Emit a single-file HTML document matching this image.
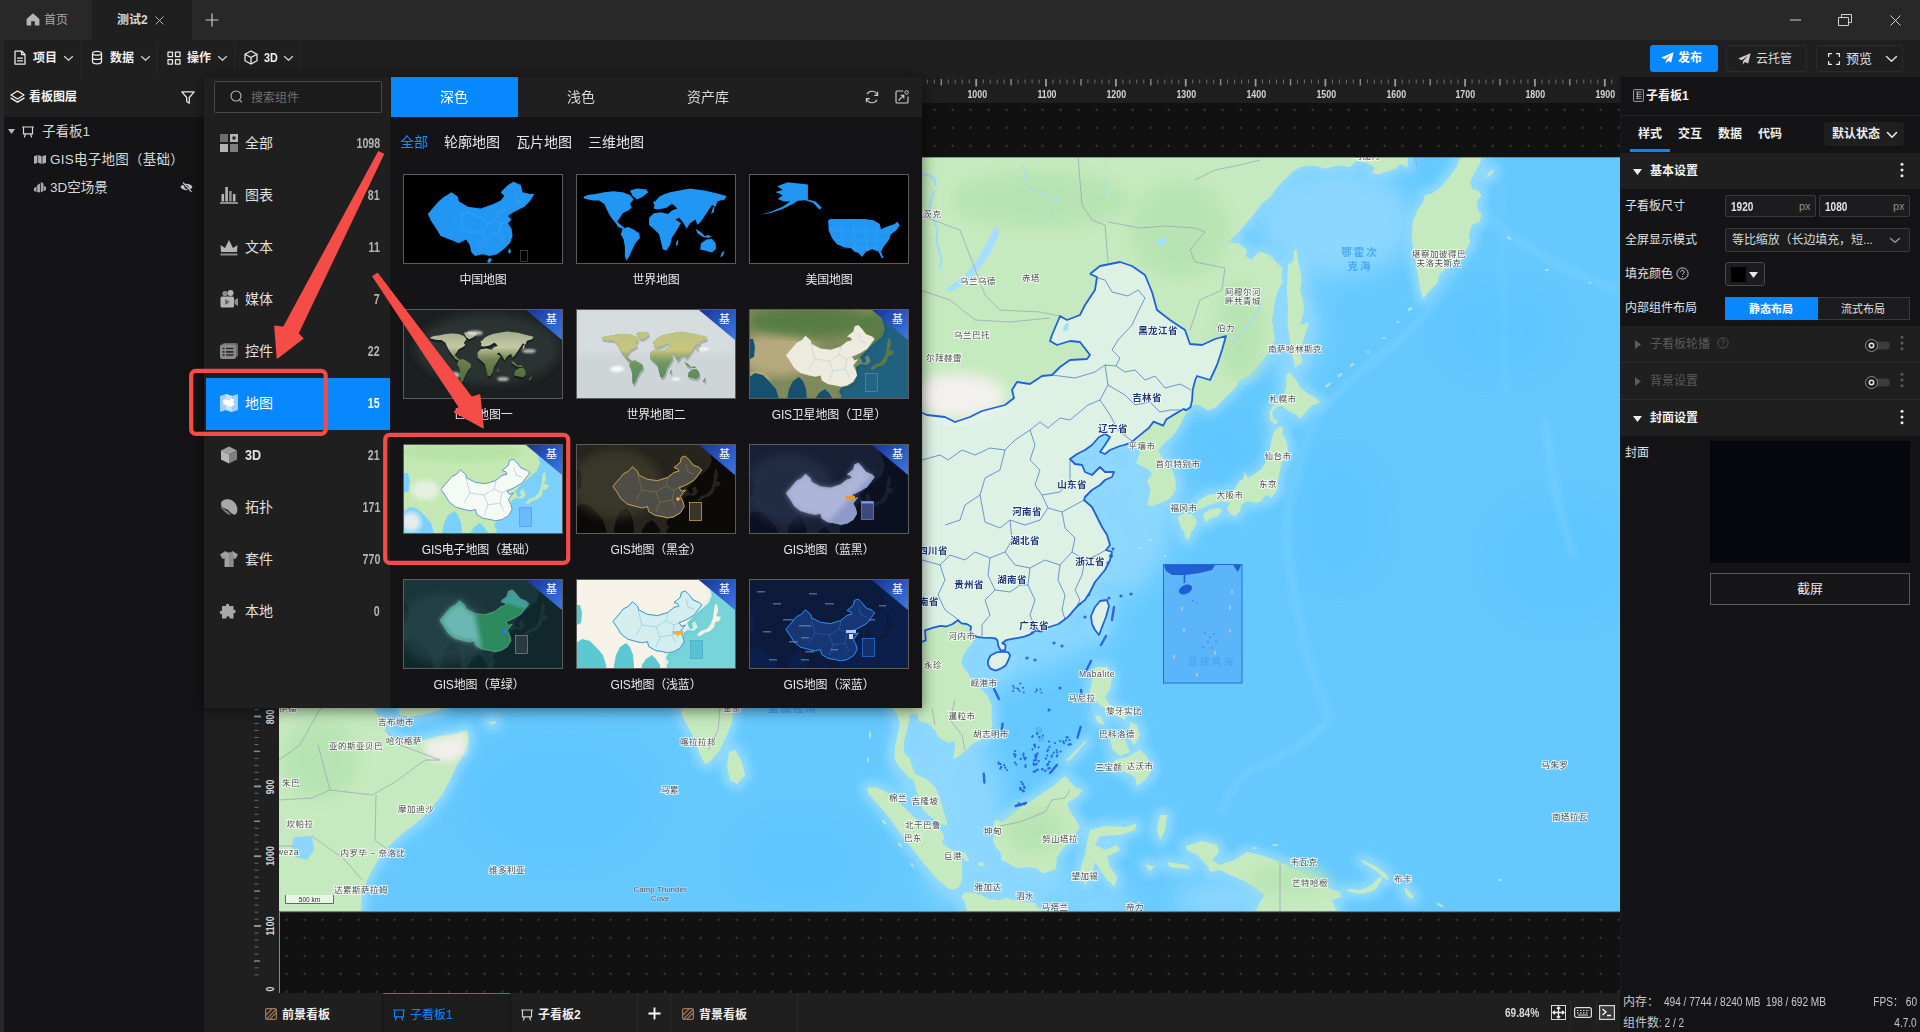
<!DOCTYPE html><html lang="zh-CN"><head><meta charset="utf-8"><title>看板编辑器</title><style>
*{box-sizing:border-box;margin:0;padding:0}
html,body{width:1920px;height:1032px;overflow:hidden;background:#141416}
body{position:relative;font-family:"Liberation Sans","Noto Sans CJK SC",sans-serif;font-size:12px;color:#e6e6e6;line-height:1}
.a{position:absolute}
.t{position:absolute;white-space:nowrap;line-height:16px;height:16px}
.b{font-weight:bold}
.n{display:inline-block;transform:scaleX(.84);transform-origin:left center}
.nr{display:inline-block;transform:scaleX(.84);transform-origin:right center}
svg{position:absolute;overflow:visible}
.ic{fill:none;stroke:#eaeaea;stroke-width:1.25;stroke-linecap:round;stroke-linejoin:round}
</style></head><body><div class="a" style="left:204px;top:77px;width:1416px;height:916px;background:#111111;background-image:radial-gradient(circle,#3a3a3a 0.8px,transparent 1.1px);background-size:18px 18px;background-position:1.6px 5.8px;"></div><div class="a" style="left:204px;top:77px;width:1416px;height:26px;background:#1f1f1f;"></div><div class="a" style="left:204px;top:103px;width:75px;height:890px;background:#1f1f1f;"></div><div class="a" style="left:279px;top:103px;width:1px;height:890px;background:#8a8a8a;"></div><svg style="left:0;top:77px" width="1920" height="26" viewBox="0 0 1920 26"><rect x="926.8" y="2.5" width="1" height="4" fill="#6e6e6e"/><rect x="933.8" y="2.5" width="1" height="4" fill="#6e6e6e"/><rect x="940.6" y="2" width="1.4" height="6.5" fill="#8a8a8a"/><rect x="947.8" y="2.5" width="1" height="4" fill="#6e6e6e"/><rect x="954.7" y="2.5" width="1" height="4" fill="#6e6e6e"/><rect x="961.7" y="2.5" width="1" height="4" fill="#6e6e6e"/><rect x="968.7" y="2.5" width="1" height="4" fill="#6e6e6e"/><rect x="975.3" y="2" width="1.8" height="7.5" fill="#9a9a9a"/><rect x="982.7" y="2.5" width="1" height="4" fill="#6e6e6e"/><rect x="989.7" y="2.5" width="1" height="4" fill="#6e6e6e"/><rect x="996.7" y="2.5" width="1" height="4" fill="#6e6e6e"/><rect x="1003.6" y="2.5" width="1" height="4" fill="#6e6e6e"/><rect x="1010.4" y="2" width="1.4" height="6.5" fill="#8a8a8a"/><rect x="1017.6" y="2.5" width="1" height="4" fill="#6e6e6e"/><rect x="1024.6" y="2.5" width="1" height="4" fill="#6e6e6e"/><rect x="1031.6" y="2.5" width="1" height="4" fill="#6e6e6e"/><rect x="1038.6" y="2.5" width="1" height="4" fill="#6e6e6e"/><rect x="1045.1" y="2" width="1.8" height="7.5" fill="#9a9a9a"/><rect x="1052.5" y="2.5" width="1" height="4" fill="#6e6e6e"/><rect x="1059.5" y="2.5" width="1" height="4" fill="#6e6e6e"/><rect x="1066.5" y="2.5" width="1" height="4" fill="#6e6e6e"/><rect x="1073.5" y="2.5" width="1" height="4" fill="#6e6e6e"/><rect x="1080.3" y="2" width="1.4" height="6.5" fill="#8a8a8a"/><rect x="1087.4" y="2.5" width="1" height="4" fill="#6e6e6e"/><rect x="1094.4" y="2.5" width="1" height="4" fill="#6e6e6e"/><rect x="1101.4" y="2.5" width="1" height="4" fill="#6e6e6e"/><rect x="1108.4" y="2.5" width="1" height="4" fill="#6e6e6e"/><rect x="1115.0" y="2" width="1.8" height="7.5" fill="#9a9a9a"/><rect x="1122.4" y="2.5" width="1" height="4" fill="#6e6e6e"/><rect x="1129.3" y="2.5" width="1" height="4" fill="#6e6e6e"/><rect x="1136.3" y="2.5" width="1" height="4" fill="#6e6e6e"/><rect x="1143.3" y="2.5" width="1" height="4" fill="#6e6e6e"/><rect x="1150.1" y="2" width="1.4" height="6.5" fill="#8a8a8a"/><rect x="1157.3" y="2.5" width="1" height="4" fill="#6e6e6e"/><rect x="1164.3" y="2.5" width="1" height="4" fill="#6e6e6e"/><rect x="1171.3" y="2.5" width="1" height="4" fill="#6e6e6e"/><rect x="1178.2" y="2.5" width="1" height="4" fill="#6e6e6e"/><rect x="1184.8" y="2" width="1.8" height="7.5" fill="#9a9a9a"/><rect x="1192.2" y="2.5" width="1" height="4" fill="#6e6e6e"/><rect x="1199.2" y="2.5" width="1" height="4" fill="#6e6e6e"/><rect x="1206.2" y="2.5" width="1" height="4" fill="#6e6e6e"/><rect x="1213.2" y="2.5" width="1" height="4" fill="#6e6e6e"/><rect x="1219.9" y="2" width="1.4" height="6.5" fill="#8a8a8a"/><rect x="1227.1" y="2.5" width="1" height="4" fill="#6e6e6e"/><rect x="1234.1" y="2.5" width="1" height="4" fill="#6e6e6e"/><rect x="1241.1" y="2.5" width="1" height="4" fill="#6e6e6e"/><rect x="1248.1" y="2.5" width="1" height="4" fill="#6e6e6e"/><rect x="1254.7" y="2" width="1.8" height="7.5" fill="#9a9a9a"/><rect x="1262.0" y="2.5" width="1" height="4" fill="#6e6e6e"/><rect x="1269.0" y="2.5" width="1" height="4" fill="#6e6e6e"/><rect x="1276.0" y="2.5" width="1" height="4" fill="#6e6e6e"/><rect x="1283.0" y="2.5" width="1" height="4" fill="#6e6e6e"/><rect x="1289.8" y="2" width="1.4" height="6.5" fill="#8a8a8a"/><rect x="1297.0" y="2.5" width="1" height="4" fill="#6e6e6e"/><rect x="1303.9" y="2.5" width="1" height="4" fill="#6e6e6e"/><rect x="1310.9" y="2.5" width="1" height="4" fill="#6e6e6e"/><rect x="1317.9" y="2.5" width="1" height="4" fill="#6e6e6e"/><rect x="1324.5" y="2" width="1.8" height="7.5" fill="#9a9a9a"/><rect x="1331.9" y="2.5" width="1" height="4" fill="#6e6e6e"/><rect x="1338.9" y="2.5" width="1" height="4" fill="#6e6e6e"/><rect x="1345.9" y="2.5" width="1" height="4" fill="#6e6e6e"/><rect x="1352.8" y="2.5" width="1" height="4" fill="#6e6e6e"/><rect x="1359.6" y="2" width="1.4" height="6.5" fill="#8a8a8a"/><rect x="1366.8" y="2.5" width="1" height="4" fill="#6e6e6e"/><rect x="1373.8" y="2.5" width="1" height="4" fill="#6e6e6e"/><rect x="1380.8" y="2.5" width="1" height="4" fill="#6e6e6e"/><rect x="1387.8" y="2.5" width="1" height="4" fill="#6e6e6e"/><rect x="1394.3" y="2" width="1.8" height="7.5" fill="#9a9a9a"/><rect x="1401.7" y="2.5" width="1" height="4" fill="#6e6e6e"/><rect x="1408.7" y="2.5" width="1" height="4" fill="#6e6e6e"/><rect x="1415.7" y="2.5" width="1" height="4" fill="#6e6e6e"/><rect x="1422.7" y="2.5" width="1" height="4" fill="#6e6e6e"/><rect x="1429.5" y="2" width="1.4" height="6.5" fill="#8a8a8a"/><rect x="1436.6" y="2.5" width="1" height="4" fill="#6e6e6e"/><rect x="1443.6" y="2.5" width="1" height="4" fill="#6e6e6e"/><rect x="1450.6" y="2.5" width="1" height="4" fill="#6e6e6e"/><rect x="1457.6" y="2.5" width="1" height="4" fill="#6e6e6e"/><rect x="1464.2" y="2" width="1.8" height="7.5" fill="#9a9a9a"/><rect x="1471.6" y="2.5" width="1" height="4" fill="#6e6e6e"/><rect x="1478.5" y="2.5" width="1" height="4" fill="#6e6e6e"/><rect x="1485.5" y="2.5" width="1" height="4" fill="#6e6e6e"/><rect x="1492.5" y="2.5" width="1" height="4" fill="#6e6e6e"/><rect x="1499.3" y="2" width="1.4" height="6.5" fill="#8a8a8a"/><rect x="1506.5" y="2.5" width="1" height="4" fill="#6e6e6e"/><rect x="1513.5" y="2.5" width="1" height="4" fill="#6e6e6e"/><rect x="1520.5" y="2.5" width="1" height="4" fill="#6e6e6e"/><rect x="1527.4" y="2.5" width="1" height="4" fill="#6e6e6e"/><rect x="1534.0" y="2" width="1.8" height="7.5" fill="#9a9a9a"/><rect x="1541.4" y="2.5" width="1" height="4" fill="#6e6e6e"/><rect x="1548.4" y="2.5" width="1" height="4" fill="#6e6e6e"/><rect x="1555.4" y="2.5" width="1" height="4" fill="#6e6e6e"/><rect x="1562.4" y="2.5" width="1" height="4" fill="#6e6e6e"/><rect x="1569.1" y="2" width="1.4" height="6.5" fill="#8a8a8a"/><rect x="1576.3" y="2.5" width="1" height="4" fill="#6e6e6e"/><rect x="1583.3" y="2.5" width="1" height="4" fill="#6e6e6e"/><rect x="1590.3" y="2.5" width="1" height="4" fill="#6e6e6e"/><rect x="1597.3" y="2.5" width="1" height="4" fill="#6e6e6e"/><rect x="1603.9" y="2" width="1.8" height="7.5" fill="#9a9a9a"/><rect x="1611.2" y="2.5" width="1" height="4" fill="#6e6e6e"/></svg><div class="t" style="left:956.8000000000001px;width:40px;text-align:center;top:83.8px;font-size:11px;color:#d4d4d4;line-height:20px;height:20px;font-weight:bold;"><span style="display:inline-block;transform:scaleX(.8)">1000</span></div><div class="t" style="left:1026.6399999999999px;width:40px;text-align:center;top:83.8px;font-size:11px;color:#d4d4d4;line-height:20px;height:20px;font-weight:bold;"><span style="display:inline-block;transform:scaleX(.8)">1100</span></div><div class="t" style="left:1096.48px;width:40px;text-align:center;top:83.8px;font-size:11px;color:#d4d4d4;line-height:20px;height:20px;font-weight:bold;"><span style="display:inline-block;transform:scaleX(.8)">1200</span></div><div class="t" style="left:1166.32px;width:40px;text-align:center;top:83.8px;font-size:11px;color:#d4d4d4;line-height:20px;height:20px;font-weight:bold;"><span style="display:inline-block;transform:scaleX(.8)">1300</span></div><div class="t" style="left:1236.1599999999999px;width:40px;text-align:center;top:83.8px;font-size:11px;color:#d4d4d4;line-height:20px;height:20px;font-weight:bold;"><span style="display:inline-block;transform:scaleX(.8)">1400</span></div><div class="t" style="left:1306.0px;width:40px;text-align:center;top:83.8px;font-size:11px;color:#d4d4d4;line-height:20px;height:20px;font-weight:bold;"><span style="display:inline-block;transform:scaleX(.8)">1500</span></div><div class="t" style="left:1375.84px;width:40px;text-align:center;top:83.8px;font-size:11px;color:#d4d4d4;line-height:20px;height:20px;font-weight:bold;"><span style="display:inline-block;transform:scaleX(.8)">1600</span></div><div class="t" style="left:1445.6799999999998px;width:40px;text-align:center;top:83.8px;font-size:11px;color:#d4d4d4;line-height:20px;height:20px;font-weight:bold;"><span style="display:inline-block;transform:scaleX(.8)">1700</span></div><div class="t" style="left:1515.52px;width:40px;text-align:center;top:83.8px;font-size:11px;color:#d4d4d4;line-height:20px;height:20px;font-weight:bold;"><span style="display:inline-block;transform:scaleX(.8)">1800</span></div><div class="t" style="left:1585.3600000000001px;width:40px;text-align:center;top:83.8px;font-size:11px;color:#d4d4d4;line-height:20px;height:20px;font-weight:bold;"><span style="display:inline-block;transform:scaleX(.8)">1900</span></div><svg style="left:0;top:0" width="300" height="1032" viewBox="0 0 300 1032"><rect x="254.5" y="709.0" width="4" height="1" fill="#6a6a6a"/><rect x="254" y="715.6" width="7" height="1.8" fill="#9a9a9a"/><rect x="254.5" y="723.0" width="4" height="1" fill="#6a6a6a"/><rect x="254.5" y="730.0" width="4" height="1" fill="#6a6a6a"/><rect x="254.5" y="737.0" width="4" height="1" fill="#6a6a6a"/><rect x="254.5" y="744.0" width="4" height="1" fill="#6a6a6a"/><rect x="254" y="750.7" width="6" height="1.4" fill="#8a8a8a"/><rect x="254.5" y="757.9" width="4" height="1" fill="#6a6a6a"/><rect x="254.5" y="764.9" width="4" height="1" fill="#6a6a6a"/><rect x="254.5" y="771.9" width="4" height="1" fill="#6a6a6a"/><rect x="254.5" y="778.9" width="4" height="1" fill="#6a6a6a"/><rect x="254" y="785.5" width="7" height="1.8" fill="#9a9a9a"/><rect x="254.5" y="792.8" width="4" height="1" fill="#6a6a6a"/><rect x="254.5" y="799.8" width="4" height="1" fill="#6a6a6a"/><rect x="254.5" y="806.8" width="4" height="1" fill="#6a6a6a"/><rect x="254.5" y="813.8" width="4" height="1" fill="#6a6a6a"/><rect x="254" y="820.6" width="6" height="1.4" fill="#8a8a8a"/><rect x="254.5" y="827.8" width="4" height="1" fill="#6a6a6a"/><rect x="254.5" y="834.7" width="4" height="1" fill="#6a6a6a"/><rect x="254.5" y="841.7" width="4" height="1" fill="#6a6a6a"/><rect x="254.5" y="848.7" width="4" height="1" fill="#6a6a6a"/><rect x="254" y="855.3" width="7" height="1.8" fill="#9a9a9a"/><rect x="254.5" y="862.7" width="4" height="1" fill="#6a6a6a"/><rect x="254.5" y="869.7" width="4" height="1" fill="#6a6a6a"/><rect x="254.5" y="876.7" width="4" height="1" fill="#6a6a6a"/><rect x="254.5" y="883.6" width="4" height="1" fill="#6a6a6a"/><rect x="254" y="890.4" width="6" height="1.4" fill="#8a8a8a"/><rect x="254.5" y="897.6" width="4" height="1" fill="#6a6a6a"/><rect x="254.5" y="904.6" width="4" height="1" fill="#6a6a6a"/><rect x="254.5" y="911.6" width="4" height="1" fill="#6a6a6a"/><rect x="254.5" y="918.6" width="4" height="1" fill="#6a6a6a"/><rect x="254" y="925.1" width="7" height="1.8" fill="#9a9a9a"/><rect x="254.5" y="932.5" width="4" height="1" fill="#6a6a6a"/><rect x="254.5" y="939.5" width="4" height="1" fill="#6a6a6a"/><rect x="254.5" y="946.5" width="4" height="1" fill="#6a6a6a"/><rect x="254.5" y="953.5" width="4" height="1" fill="#6a6a6a"/><rect x="254" y="960.3" width="6" height="1.4" fill="#8a8a8a"/><rect x="254.5" y="967.4" width="4" height="1" fill="#6a6a6a"/><rect x="254.5" y="974.4" width="4" height="1" fill="#6a6a6a"/></svg><div class="t b" style="left:249.5px;top:709.5px;width:40px;height:14px;line-height:14px;text-align:center;font-size:11px;color:#d4d4d4;transform:rotate(-90deg) scaleX(.8);">800</div><div class="t b" style="left:249.5px;top:779.5px;width:40px;height:14px;line-height:14px;text-align:center;font-size:11px;color:#d4d4d4;transform:rotate(-90deg) scaleX(.8);">900</div><div class="t b" style="left:249.5px;top:849.2px;width:40px;height:14px;line-height:14px;text-align:center;font-size:11px;color:#d4d4d4;transform:rotate(-90deg) scaleX(.8);">1000</div><div class="t b" style="left:249.5px;top:919px;width:40px;height:14px;line-height:14px;text-align:center;font-size:11px;color:#d4d4d4;transform:rotate(-90deg) scaleX(.8);">1100</div><div class="t b" style="left:249.5px;top:981.5px;width:40px;height:14px;line-height:14px;text-align:center;font-size:11px;color:#d4d4d4;transform:rotate(-90deg) scaleX(.8);">0</div><svg style="left:279px;top:157px" width="1341" height="755" viewBox="279 157 1341 755" font-family="Liberation Sans,Noto Sans CJK SC,sans-serif"><defs><filter id="bl8" x="-20%" y="-20%" width="140%" height="140%"><feGaussianBlur stdDeviation="7"/></filter><filter id="bl5" x="-20%" y="-20%" width="140%" height="140%"><feGaussianBlur stdDeviation="4.5"/></filter><filter id="bl3"><feGaussianBlur stdDeviation="3"/></filter><filter id="bl16" x="-30%" y="-30%" width="160%" height="160%"><feGaussianBlur stdDeviation="14"/></filter><clipPath id="mc"><rect x="279" y="157" width="1341" height="755"/></clipPath></defs><g clip-path="url(#mc)"><rect x="279" y="157" width="1341" height="755" fill="#65c9ff"/><path d="M880.0 150.0 L1407.8 150.0 L1407.8 167.2 L1400.0 164.0 L1395.3 168.8 L1387.5 171.1 L1379.7 174.2 L1371.9 173.4 L1375.0 167.2 L1365.6 162.5 L1356.3 160.9 L1350.0 167.2 L1340.6 165.6 L1332.8 166.4 L1325.0 168.8 L1318.8 166.4 L1309.4 165.6 L1300.0 167.2 L1292.2 171.9 L1284.4 179.7 L1278.1 185.9 L1270.3 196.9 L1262.5 203.1 L1256.3 210.9 L1250.0 218.8 L1242.2 228.1 L1234.4 235.9 L1228.1 242.2 L1239.1 243.8 L1246.9 250.0 L1245.3 256.3 L1251.6 259.4 L1259.4 251.6 L1268.8 254.7 L1278.1 264.1 L1282.8 268.8 L1281.3 275.0 L1282.8 282.8 L1278.1 290.6 L1275.0 300.0 L1273.4 311.0 L1272.0 320.0 L1275.0 340.0 L1265.0 357.0 L1250.0 375.0 L1239.9 380.0 L1235.1 388.0 L1228.7 394.4 L1222.3 400.8 L1215.9 407.2 L1207.9 410.4 L1199.9 405.6 L1195.2 404.0 L1190.4 407.2 L1187.2 412.0 L1184.0 416.8 L1179.2 426.4 L1172.8 436.0 L1163.2 444.0 L1158.4 450.4 L1161.6 456.8 L1168.0 463.1 L1172.8 471.1 L1175.2 479.1 L1176.0 488.7 L1172.8 495.1 L1168.0 499.9 L1160.0 503.1 L1152.0 506.3 L1147.2 504.7 L1148.8 498.3 L1150.4 488.7 L1147.2 480.7 L1152.0 474.3 L1148.8 469.5 L1142.4 466.3 L1136.0 463.1 L1137.6 458.3 L1140.8 452.0 L1136.0 447.2 L1124.8 444.8 L1120.0 446.0 L1110.0 450.0 L1105.0 454.0 L1100.0 452.0 L1105.0 445.0 L1110.0 437.0 L1105.0 434.0 L1099.0 437.0 L1092.0 445.0 L1085.0 450.0 L1077.0 454.0 L1070.0 459.0 L1075.0 464.0 L1082.0 465.0 L1085.0 472.0 L1092.0 475.0 L1100.0 467.0 L1105.0 472.0 L1114.0 472.0 L1112.0 477.0 L1105.0 480.0 L1100.0 485.0 L1092.0 490.0 L1085.0 497.0 L1084.0 500.0 L1092.0 507.0 L1097.0 517.0 L1102.0 527.0 L1107.0 535.0 L1110.0 545.0 L1106.0 550.0 L1112.0 552.0 L1110.0 560.0 L1105.0 570.0 L1095.0 582.0 L1090.0 592.0 L1085.0 600.0 L1080.0 603.9 L1074.9 608.9 L1068.6 616.4 L1063.6 620.2 L1058.5 624.0 L1051.0 626.5 L1045.9 627.8 L1040.9 631.6 L1035.9 630.3 L1030.8 634.1 L1024.5 636.6 L1018.2 637.9 L1010.7 639.1 L1005.6 640.4 L1003.1 642.9 L1005.6 645.4 L1005.0 650.5 L1000.6 650.5 L998.1 645.4 L997.5 640.4 L995.6 638.5 L990.5 637.9 L983.0 637.6 L977.9 637.2 L974.2 635.3 L972.9 642.9 L967.9 647.9 L964.1 654.2 L961.6 660.5 L962.8 666.8 L967.9 673.1 L970.4 678.2 L976.7 685.7 L983.0 690.8 L988.0 697.1 L991.8 705.9 L991.3 715.0 L992.5 725.0 L990.0 733.8 L982.5 738.8 L975.0 742.5 L970.0 746.3 L965.0 751.3 L958.8 756.3 L953.1 759.4 L953.8 753.8 L955.0 747.5 L955.0 741.3 L950.0 742.5 L945.0 741.3 L937.5 736.3 L935.0 730.0 L930.0 725.0 L925.0 722.5 L918.8 721.3 L917.5 715.0 L913.8 713.8 L910.0 715.0 L908.8 722.5 L906.3 732.5 L903.8 742.5 L903.8 752.5 L910.0 758.8 L912.5 767.5 L915.0 773.8 L922.5 777.5 L927.8 780.0 L935.5 787.7 L939.3 796.6 L941.9 805.6 L944.4 814.5 L947.0 822.2 L947.0 824.8 L943.2 824.8 L936.8 820.9 L929.1 815.8 L922.7 809.4 L920.1 801.7 L916.3 790.2 L913.7 780.0 L908.8 777.5 L902.5 770.0 L897.5 765.0 L894.4 757.5 L895.0 747.5 L897.5 735.0 L900.0 725.0 L897.5 715.0 L892.5 707.8 L888.0 690.0 L880.0 150.0 Z M1091.0 616.0 L1095.0 607.0 L1100.0 601.0 L1107.0 600.0 L1109.0 606.0 L1106.0 617.0 L1102.0 627.0 L1099.0 635.0 L1095.0 630.0 L1092.0 624.0 Z M988.0 660.5 L990.5 655.5 L996.8 652.3 L1003.1 651.7 L1008.2 652.3 L1010.1 655.5 L1008.2 660.5 L1005.6 665.6 L1000.6 668.7 L995.6 670.6 L990.5 668.7 L988.0 664.9 Z M1464.1 150.0 L1456.3 167.2 L1448.4 178.1 L1440.6 187.5 L1431.3 193.8 L1425.0 195.3 L1423.4 201.6 L1417.2 210.9 L1413.3 220.3 L1411.7 234.4 L1413.3 250.0 L1416.4 265.6 L1418.8 281.3 L1421.9 295.3 L1423.4 298.4 L1429.7 290.6 L1437.5 282.8 L1439.1 275.0 L1443.8 270.3 L1456.3 259.4 L1465.6 250.0 L1470.3 242.2 L1468.8 234.4 L1471.9 225.0 L1479.7 221.9 L1481.3 214.1 L1478.1 210.9 L1476.6 201.6 L1481.3 195.3 L1478.1 190.6 L1471.9 189.1 L1470.3 181.3 L1475.0 171.9 L1479.7 164.1 L1482.8 150.0 Z M1485.9 178.1 L1489.0 171.9 L1493.8 169.5 L1492.2 174.2 Z M1293.8 250.0 L1296.9 250.0 L1297.7 259.4 L1300.0 268.8 L1301.6 279.7 L1300.0 290.6 L1303.1 300.0 L1304.0 311.0 L1300.0 325.0 L1308.8 322.5 L1305.0 335.0 L1300.0 350.0 L1302.5 362.5 L1295.0 367.5 L1292.5 355.0 L1290.0 340.0 L1287.5 325.0 L1288.0 311.0 L1287.5 300.0 L1286.7 287.5 L1287.5 275.0 L1288.3 264.1 L1292.2 262.5 L1293.8 257.8 Z M1286.3 375.2 L1289.5 372.0 L1293.5 376.8 L1295.9 380.0 L1300.7 388.0 L1308.7 394.4 L1315.1 397.6 L1319.9 402.4 L1311.9 405.6 L1305.5 412.0 L1300.7 418.4 L1294.3 413.6 L1287.9 410.4 L1281.5 405.6 L1276.7 407.2 L1271.9 412.0 L1273.5 418.4 L1278.3 421.6 L1275.1 424.8 L1270.3 420.0 L1269.5 412.0 L1273.5 405.6 L1279.9 400.8 L1284.7 392.8 L1286.3 386.4 Z M1275.9 429.6 L1279.9 426.4 L1283.1 428.0 L1282.3 434.4 L1286.3 440.8 L1287.9 448.8 L1286.3 456.8 L1281.5 463.1 L1279.9 471.1 L1278.3 479.1 L1277.5 488.7 L1275.1 493.5 L1270.3 498.3 L1268.7 495.1 L1263.9 496.7 L1260.7 501.5 L1255.9 503.1 L1251.1 501.5 L1246.3 501.5 L1241.5 504.7 L1239.9 511.1 L1235.1 515.9 L1230.3 514.3 L1227.1 507.9 L1230.3 503.1 L1222.3 501.5 L1215.9 503.1 L1209.5 504.7 L1203.1 507.9 L1196.8 509.5 L1195.2 504.7 L1199.9 499.9 L1207.9 495.1 L1217.5 493.5 L1228.7 491.9 L1235.1 488.7 L1238.3 482.3 L1243.1 479.1 L1244.7 472.7 L1247.9 477.5 L1254.3 474.3 L1260.7 469.5 L1265.5 463.1 L1268.7 455.2 L1270.3 447.2 L1271.9 439.2 L1273.5 432.8 Z M1177.6 517.5 L1184.0 512.7 L1192.0 514.3 L1196.8 520.7 L1195.2 527.1 L1190.4 533.5 L1188.8 539.9 L1185.6 538.3 L1184.0 531.9 L1180.8 527.1 L1179.2 522.3 Z M1203.1 514.3 L1209.5 509.5 L1219.1 507.9 L1222.3 511.1 L1217.5 515.9 L1209.5 519.1 L1206.3 522.3 L1203.9 519.1 Z M1095.0 667.0 L1107.0 667.0 L1112.0 677.0 L1110.0 690.0 L1105.0 697.0 L1110.0 705.0 L1120.0 710.0 L1127.0 715.0 L1125.0 720.0 L1115.0 715.0 L1107.0 710.0 L1100.0 705.0 L1095.0 700.0 L1090.0 692.0 L1092.0 680.0 Z M1130.0 722.0 L1137.0 725.0 L1140.0 735.0 L1135.0 745.0 L1130.0 740.0 L1129.0 730.0 Z M1095.0 715.0 L1102.0 717.0 L1104.0 725.0 L1097.0 722.0 Z M1110.0 738.0 L1125.0 740.0 L1130.0 752.0 L1120.0 756.0 L1112.0 749.0 Z M1127.0 757.0 L1140.0 750.0 L1147.0 757.0 L1152.0 770.0 L1145.0 780.0 L1137.0 786.0 L1135.0 777.0 L1127.0 773.0 L1120.0 770.0 L1112.0 766.0 L1115.0 760.0 Z M1066.0 760.0 L1072.5 753.8 L1080.0 746.3 L1086.3 740.0 L1085.5 743.0 L1078.8 750.0 L1072.5 757.5 L1067.5 761.0 Z M867.0 787.7 L875.4 787.0 L885.6 791.5 L895.8 799.2 L904.8 808.1 L913.7 817.1 L921.4 822.2 L931.6 826.1 L941.9 831.2 L944.4 837.6 L941.9 842.7 L948.3 847.8 L954.7 851.6 L961.1 856.8 L962.3 863.2 L962.3 872.1 L961.7 881.1 L958.5 887.5 L952.1 890.0 L947.0 887.5 L936.8 878.5 L926.5 867.0 L917.6 855.5 L909.9 845.2 L900.9 833.7 L893.3 823.5 L885.6 813.3 L876.6 803.0 L869.0 794.1 Z M961.1 896.4 L964.9 892.6 L972.6 892.6 L981.5 895.1 L987.9 899.0 L998.2 900.3 L1007.1 897.7 L1013.5 900.3 L1023.7 901.5 L1034.0 902.8 L1039.1 907.9 L1052.0 920.0 L968.7 920.0 L964.9 902.8 Z M1065.0 776.3 L1070.0 781.3 L1075.0 787.5 L1082.5 790.0 L1077.5 796.6 L1067.2 803.0 L1069.8 810.7 L1074.9 818.4 L1080.0 827.3 L1072.4 837.6 L1064.7 846.5 L1057.0 856.8 L1055.7 869.5 L1042.9 873.4 L1036.5 868.3 L1026.3 867.0 L1017.4 868.3 L1008.4 863.2 L1002.0 860.6 L1000.7 852.9 L995.6 846.5 L993.0 840.1 L994.3 833.7 L993.0 824.8 L995.6 819.7 L1002.0 822.0 L1011.0 816.0 L1019.9 808.1 L1030.1 801.7 L1039.1 795.4 L1047.5 790.0 L1055.0 785.0 L1060.0 780.0 Z M1090.0 830.0 L1105.0 826.0 L1125.0 827.0 L1136.0 824.0 L1135.0 830.0 L1120.0 835.0 L1100.0 836.0 L1095.0 845.0 L1105.0 850.0 L1117.0 845.0 L1120.0 850.0 L1107.0 857.0 L1110.0 867.0 L1117.0 877.0 L1115.0 887.0 L1107.0 880.0 L1100.0 870.0 L1095.0 862.0 L1092.0 875.0 L1085.0 885.0 L1080.0 870.0 L1085.0 855.0 L1087.0 842.0 Z M1160.0 815.0 L1167.0 815.0 L1165.0 830.0 L1160.0 840.0 L1157.0 830.0 Z M1145.0 865.0 L1155.0 866.0 L1150.0 871.0 Z M1167.0 862.0 L1187.0 865.0 L1190.0 869.0 L1170.0 867.0 Z M1186.0 846.0 L1202.0 841.0 L1217.0 845.0 L1219.0 852.0 L1212.0 860.0 L1220.0 865.0 L1227.0 862.0 L1235.0 860.0 L1247.0 852.0 L1260.0 855.0 L1280.0 862.0 L1295.0 870.0 L1310.0 877.0 L1325.0 887.0 L1340.0 892.0 L1341.0 897.0 L1332.0 900.0 L1335.0 907.0 L1342.0 920.0 L1252.0 920.0 L1260.0 902.0 L1265.0 895.0 L1255.0 887.0 L1242.0 880.0 L1230.0 875.0 L1220.0 870.0 L1210.0 872.0 L1207.0 865.0 L1197.0 855.0 L1187.0 850.0 Z M1347.0 889.0 L1360.0 890.0 L1372.0 885.0 L1380.0 876.0 L1382.0 880.0 L1375.0 890.0 L1362.0 894.0 L1350.0 892.0 Z M1404.0 887.0 L1407.0 889.0 L1414.0 897.0 L1411.0 899.0 L1406.0 894.0 Z M1362.0 860.0 L1377.0 867.0 L1387.0 875.0 L1389.0 880.0 L1385.0 879.0 L1375.0 870.0 L1362.0 862.0 Z M270.0 700.0 L370.0 700.0 L377.0 715.0 L387.0 720.0 L385.0 730.0 L390.0 737.0 L400.0 739.0 L410.0 742.0 L425.0 740.0 L440.0 736.0 L455.0 734.0 L467.0 730.0 L469.0 740.0 L465.0 752.0 L457.0 765.0 L450.0 780.0 L442.0 795.0 L432.0 807.0 L420.0 820.0 L407.0 830.0 L395.0 840.0 L385.0 850.0 L375.0 865.0 L367.0 880.0 L362.0 895.0 L360.0 920.0 L270.0 920.0 Z M397.0 700.0 L400.0 715.0 L410.0 717.0 L425.0 714.0 L440.0 710.0 L447.0 700.0 Z M680.0 700.0 L735.0 700.0 L732.0 722.0 L727.0 735.0 L720.0 750.0 L710.0 762.0 L705.0 764.0 L700.0 755.0 L695.0 740.0 L687.0 725.0 L682.0 715.0 Z M729.0 752.0 L735.0 750.0 L742.0 762.0 L745.0 775.0 L737.0 784.0 L730.0 780.0 L727.0 767.0 Z M489.0 721.5 L496.0 721.5 L495.0 724.0 L490.0 724.5 Z M962.0 853.0 L965.0 852.0 L969.0 860.0 L967.0 862.0 L963.0 858.0 Z M978.0 862.0 L984.0 863.0 L983.0 866.0 L979.0 866.0 Z" fill="#92daff" stroke="#92daff" stroke-width="13" stroke-linejoin="round" filter="url(#bl5)" opacity=".95"/><g filter="url(#bl16)" fill="#8fd8ff" opacity=".95"><ellipse cx="1128" cy="515" rx="48" ry="85" transform="rotate(12 1128 515)"/><ellipse cx="1095" cy="470" rx="35" ry="35"/><ellipse cx="1335" cy="222" rx="80" ry="55"/><ellipse cx="1290" cy="330" rx="30" ry="50"/><ellipse cx="1050" cy="645" rx="75" ry="20" transform="rotate(-22 1050 645)"/><ellipse cx="985" cy="665" rx="30" ry="30"/><ellipse cx="950" cy="790" rx="50" ry="75" transform="rotate(-20 950 790)"/><ellipse cx="930" cy="738" rx="28" ry="25"/><ellipse cx="1000" cy="880" rx="75" ry="30"/><ellipse cx="1225" cy="900" rx="55" ry="22"/><ellipse cx="1100" cy="905" rx="40" ry="15"/></g><g filter="url(#bl16)" fill="#5cc4ff" opacity=".7"><ellipse cx="1228" cy="448" rx="26" ry="34" transform="rotate(-35 1228 448)"/><ellipse cx="1500" cy="330" rx="60" ry="40"/><ellipse cx="1340" cy="520" rx="40" ry="60"/><ellipse cx="1560" cy="560" rx="70" ry="60"/><ellipse cx="560" cy="800" rx="90" ry="60"/><ellipse cx="800" cy="860" rx="60" ry="40"/></g><g fill="none" stroke="#86d6ff" stroke-width="5" filter="url(#bl3)" opacity=".55"><path d="M1483 215 C1470 260 1440 300 1400 340 C1370 365 1335 390 1322 410 C1300 440 1300 470 1290 500 C1282 540 1290 580 1300 620 C1305 660 1320 690 1330 720"/><path d="M1490 220 C1530 250 1570 275 1620 290"/><path d="M1545 420 C1550 470 1560 520 1575 560"/><path d="M1330 720 C1310 740 1280 760 1250 770 C1230 790 1225 800 1222 815"/><path d="M1500 180 L1505 400" opacity=".5"/></g><path d="M880.0 150.0 L1407.8 150.0 L1407.8 167.2 L1400.0 164.0 L1395.3 168.8 L1387.5 171.1 L1379.7 174.2 L1371.9 173.4 L1375.0 167.2 L1365.6 162.5 L1356.3 160.9 L1350.0 167.2 L1340.6 165.6 L1332.8 166.4 L1325.0 168.8 L1318.8 166.4 L1309.4 165.6 L1300.0 167.2 L1292.2 171.9 L1284.4 179.7 L1278.1 185.9 L1270.3 196.9 L1262.5 203.1 L1256.3 210.9 L1250.0 218.8 L1242.2 228.1 L1234.4 235.9 L1228.1 242.2 L1239.1 243.8 L1246.9 250.0 L1245.3 256.3 L1251.6 259.4 L1259.4 251.6 L1268.8 254.7 L1278.1 264.1 L1282.8 268.8 L1281.3 275.0 L1282.8 282.8 L1278.1 290.6 L1275.0 300.0 L1273.4 311.0 L1272.0 320.0 L1275.0 340.0 L1265.0 357.0 L1250.0 375.0 L1239.9 380.0 L1235.1 388.0 L1228.7 394.4 L1222.3 400.8 L1215.9 407.2 L1207.9 410.4 L1199.9 405.6 L1195.2 404.0 L1190.4 407.2 L1187.2 412.0 L1184.0 416.8 L1179.2 426.4 L1172.8 436.0 L1163.2 444.0 L1158.4 450.4 L1161.6 456.8 L1168.0 463.1 L1172.8 471.1 L1175.2 479.1 L1176.0 488.7 L1172.8 495.1 L1168.0 499.9 L1160.0 503.1 L1152.0 506.3 L1147.2 504.7 L1148.8 498.3 L1150.4 488.7 L1147.2 480.7 L1152.0 474.3 L1148.8 469.5 L1142.4 466.3 L1136.0 463.1 L1137.6 458.3 L1140.8 452.0 L1136.0 447.2 L1124.8 444.8 L1120.0 446.0 L1110.0 450.0 L1105.0 454.0 L1100.0 452.0 L1105.0 445.0 L1110.0 437.0 L1105.0 434.0 L1099.0 437.0 L1092.0 445.0 L1085.0 450.0 L1077.0 454.0 L1070.0 459.0 L1075.0 464.0 L1082.0 465.0 L1085.0 472.0 L1092.0 475.0 L1100.0 467.0 L1105.0 472.0 L1114.0 472.0 L1112.0 477.0 L1105.0 480.0 L1100.0 485.0 L1092.0 490.0 L1085.0 497.0 L1084.0 500.0 L1092.0 507.0 L1097.0 517.0 L1102.0 527.0 L1107.0 535.0 L1110.0 545.0 L1106.0 550.0 L1112.0 552.0 L1110.0 560.0 L1105.0 570.0 L1095.0 582.0 L1090.0 592.0 L1085.0 600.0 L1080.0 603.9 L1074.9 608.9 L1068.6 616.4 L1063.6 620.2 L1058.5 624.0 L1051.0 626.5 L1045.9 627.8 L1040.9 631.6 L1035.9 630.3 L1030.8 634.1 L1024.5 636.6 L1018.2 637.9 L1010.7 639.1 L1005.6 640.4 L1003.1 642.9 L1005.6 645.4 L1005.0 650.5 L1000.6 650.5 L998.1 645.4 L997.5 640.4 L995.6 638.5 L990.5 637.9 L983.0 637.6 L977.9 637.2 L974.2 635.3 L972.9 642.9 L967.9 647.9 L964.1 654.2 L961.6 660.5 L962.8 666.8 L967.9 673.1 L970.4 678.2 L976.7 685.7 L983.0 690.8 L988.0 697.1 L991.8 705.9 L991.3 715.0 L992.5 725.0 L990.0 733.8 L982.5 738.8 L975.0 742.5 L970.0 746.3 L965.0 751.3 L958.8 756.3 L953.1 759.4 L953.8 753.8 L955.0 747.5 L955.0 741.3 L950.0 742.5 L945.0 741.3 L937.5 736.3 L935.0 730.0 L930.0 725.0 L925.0 722.5 L918.8 721.3 L917.5 715.0 L913.8 713.8 L910.0 715.0 L908.8 722.5 L906.3 732.5 L903.8 742.5 L903.8 752.5 L910.0 758.8 L912.5 767.5 L915.0 773.8 L922.5 777.5 L927.8 780.0 L935.5 787.7 L939.3 796.6 L941.9 805.6 L944.4 814.5 L947.0 822.2 L947.0 824.8 L943.2 824.8 L936.8 820.9 L929.1 815.8 L922.7 809.4 L920.1 801.7 L916.3 790.2 L913.7 780.0 L908.8 777.5 L902.5 770.0 L897.5 765.0 L894.4 757.5 L895.0 747.5 L897.5 735.0 L900.0 725.0 L897.5 715.0 L892.5 707.8 L888.0 690.0 L880.0 150.0 Z M1091.0 616.0 L1095.0 607.0 L1100.0 601.0 L1107.0 600.0 L1109.0 606.0 L1106.0 617.0 L1102.0 627.0 L1099.0 635.0 L1095.0 630.0 L1092.0 624.0 Z M988.0 660.5 L990.5 655.5 L996.8 652.3 L1003.1 651.7 L1008.2 652.3 L1010.1 655.5 L1008.2 660.5 L1005.6 665.6 L1000.6 668.7 L995.6 670.6 L990.5 668.7 L988.0 664.9 Z M1464.1 150.0 L1456.3 167.2 L1448.4 178.1 L1440.6 187.5 L1431.3 193.8 L1425.0 195.3 L1423.4 201.6 L1417.2 210.9 L1413.3 220.3 L1411.7 234.4 L1413.3 250.0 L1416.4 265.6 L1418.8 281.3 L1421.9 295.3 L1423.4 298.4 L1429.7 290.6 L1437.5 282.8 L1439.1 275.0 L1443.8 270.3 L1456.3 259.4 L1465.6 250.0 L1470.3 242.2 L1468.8 234.4 L1471.9 225.0 L1479.7 221.9 L1481.3 214.1 L1478.1 210.9 L1476.6 201.6 L1481.3 195.3 L1478.1 190.6 L1471.9 189.1 L1470.3 181.3 L1475.0 171.9 L1479.7 164.1 L1482.8 150.0 Z M1485.9 178.1 L1489.0 171.9 L1493.8 169.5 L1492.2 174.2 Z M1293.8 250.0 L1296.9 250.0 L1297.7 259.4 L1300.0 268.8 L1301.6 279.7 L1300.0 290.6 L1303.1 300.0 L1304.0 311.0 L1300.0 325.0 L1308.8 322.5 L1305.0 335.0 L1300.0 350.0 L1302.5 362.5 L1295.0 367.5 L1292.5 355.0 L1290.0 340.0 L1287.5 325.0 L1288.0 311.0 L1287.5 300.0 L1286.7 287.5 L1287.5 275.0 L1288.3 264.1 L1292.2 262.5 L1293.8 257.8 Z M1286.3 375.2 L1289.5 372.0 L1293.5 376.8 L1295.9 380.0 L1300.7 388.0 L1308.7 394.4 L1315.1 397.6 L1319.9 402.4 L1311.9 405.6 L1305.5 412.0 L1300.7 418.4 L1294.3 413.6 L1287.9 410.4 L1281.5 405.6 L1276.7 407.2 L1271.9 412.0 L1273.5 418.4 L1278.3 421.6 L1275.1 424.8 L1270.3 420.0 L1269.5 412.0 L1273.5 405.6 L1279.9 400.8 L1284.7 392.8 L1286.3 386.4 Z M1275.9 429.6 L1279.9 426.4 L1283.1 428.0 L1282.3 434.4 L1286.3 440.8 L1287.9 448.8 L1286.3 456.8 L1281.5 463.1 L1279.9 471.1 L1278.3 479.1 L1277.5 488.7 L1275.1 493.5 L1270.3 498.3 L1268.7 495.1 L1263.9 496.7 L1260.7 501.5 L1255.9 503.1 L1251.1 501.5 L1246.3 501.5 L1241.5 504.7 L1239.9 511.1 L1235.1 515.9 L1230.3 514.3 L1227.1 507.9 L1230.3 503.1 L1222.3 501.5 L1215.9 503.1 L1209.5 504.7 L1203.1 507.9 L1196.8 509.5 L1195.2 504.7 L1199.9 499.9 L1207.9 495.1 L1217.5 493.5 L1228.7 491.9 L1235.1 488.7 L1238.3 482.3 L1243.1 479.1 L1244.7 472.7 L1247.9 477.5 L1254.3 474.3 L1260.7 469.5 L1265.5 463.1 L1268.7 455.2 L1270.3 447.2 L1271.9 439.2 L1273.5 432.8 Z M1177.6 517.5 L1184.0 512.7 L1192.0 514.3 L1196.8 520.7 L1195.2 527.1 L1190.4 533.5 L1188.8 539.9 L1185.6 538.3 L1184.0 531.9 L1180.8 527.1 L1179.2 522.3 Z M1203.1 514.3 L1209.5 509.5 L1219.1 507.9 L1222.3 511.1 L1217.5 515.9 L1209.5 519.1 L1206.3 522.3 L1203.9 519.1 Z M1095.0 667.0 L1107.0 667.0 L1112.0 677.0 L1110.0 690.0 L1105.0 697.0 L1110.0 705.0 L1120.0 710.0 L1127.0 715.0 L1125.0 720.0 L1115.0 715.0 L1107.0 710.0 L1100.0 705.0 L1095.0 700.0 L1090.0 692.0 L1092.0 680.0 Z M1130.0 722.0 L1137.0 725.0 L1140.0 735.0 L1135.0 745.0 L1130.0 740.0 L1129.0 730.0 Z M1095.0 715.0 L1102.0 717.0 L1104.0 725.0 L1097.0 722.0 Z M1110.0 738.0 L1125.0 740.0 L1130.0 752.0 L1120.0 756.0 L1112.0 749.0 Z M1127.0 757.0 L1140.0 750.0 L1147.0 757.0 L1152.0 770.0 L1145.0 780.0 L1137.0 786.0 L1135.0 777.0 L1127.0 773.0 L1120.0 770.0 L1112.0 766.0 L1115.0 760.0 Z M1066.0 760.0 L1072.5 753.8 L1080.0 746.3 L1086.3 740.0 L1085.5 743.0 L1078.8 750.0 L1072.5 757.5 L1067.5 761.0 Z M867.0 787.7 L875.4 787.0 L885.6 791.5 L895.8 799.2 L904.8 808.1 L913.7 817.1 L921.4 822.2 L931.6 826.1 L941.9 831.2 L944.4 837.6 L941.9 842.7 L948.3 847.8 L954.7 851.6 L961.1 856.8 L962.3 863.2 L962.3 872.1 L961.7 881.1 L958.5 887.5 L952.1 890.0 L947.0 887.5 L936.8 878.5 L926.5 867.0 L917.6 855.5 L909.9 845.2 L900.9 833.7 L893.3 823.5 L885.6 813.3 L876.6 803.0 L869.0 794.1 Z M961.1 896.4 L964.9 892.6 L972.6 892.6 L981.5 895.1 L987.9 899.0 L998.2 900.3 L1007.1 897.7 L1013.5 900.3 L1023.7 901.5 L1034.0 902.8 L1039.1 907.9 L1052.0 920.0 L968.7 920.0 L964.9 902.8 Z M1065.0 776.3 L1070.0 781.3 L1075.0 787.5 L1082.5 790.0 L1077.5 796.6 L1067.2 803.0 L1069.8 810.7 L1074.9 818.4 L1080.0 827.3 L1072.4 837.6 L1064.7 846.5 L1057.0 856.8 L1055.7 869.5 L1042.9 873.4 L1036.5 868.3 L1026.3 867.0 L1017.4 868.3 L1008.4 863.2 L1002.0 860.6 L1000.7 852.9 L995.6 846.5 L993.0 840.1 L994.3 833.7 L993.0 824.8 L995.6 819.7 L1002.0 822.0 L1011.0 816.0 L1019.9 808.1 L1030.1 801.7 L1039.1 795.4 L1047.5 790.0 L1055.0 785.0 L1060.0 780.0 Z M1090.0 830.0 L1105.0 826.0 L1125.0 827.0 L1136.0 824.0 L1135.0 830.0 L1120.0 835.0 L1100.0 836.0 L1095.0 845.0 L1105.0 850.0 L1117.0 845.0 L1120.0 850.0 L1107.0 857.0 L1110.0 867.0 L1117.0 877.0 L1115.0 887.0 L1107.0 880.0 L1100.0 870.0 L1095.0 862.0 L1092.0 875.0 L1085.0 885.0 L1080.0 870.0 L1085.0 855.0 L1087.0 842.0 Z M1160.0 815.0 L1167.0 815.0 L1165.0 830.0 L1160.0 840.0 L1157.0 830.0 Z M1145.0 865.0 L1155.0 866.0 L1150.0 871.0 Z M1167.0 862.0 L1187.0 865.0 L1190.0 869.0 L1170.0 867.0 Z M1186.0 846.0 L1202.0 841.0 L1217.0 845.0 L1219.0 852.0 L1212.0 860.0 L1220.0 865.0 L1227.0 862.0 L1235.0 860.0 L1247.0 852.0 L1260.0 855.0 L1280.0 862.0 L1295.0 870.0 L1310.0 877.0 L1325.0 887.0 L1340.0 892.0 L1341.0 897.0 L1332.0 900.0 L1335.0 907.0 L1342.0 920.0 L1252.0 920.0 L1260.0 902.0 L1265.0 895.0 L1255.0 887.0 L1242.0 880.0 L1230.0 875.0 L1220.0 870.0 L1210.0 872.0 L1207.0 865.0 L1197.0 855.0 L1187.0 850.0 Z M1347.0 889.0 L1360.0 890.0 L1372.0 885.0 L1380.0 876.0 L1382.0 880.0 L1375.0 890.0 L1362.0 894.0 L1350.0 892.0 Z M1404.0 887.0 L1407.0 889.0 L1414.0 897.0 L1411.0 899.0 L1406.0 894.0 Z M1362.0 860.0 L1377.0 867.0 L1387.0 875.0 L1389.0 880.0 L1385.0 879.0 L1375.0 870.0 L1362.0 862.0 Z M270.0 700.0 L370.0 700.0 L377.0 715.0 L387.0 720.0 L385.0 730.0 L390.0 737.0 L400.0 739.0 L410.0 742.0 L425.0 740.0 L440.0 736.0 L455.0 734.0 L467.0 730.0 L469.0 740.0 L465.0 752.0 L457.0 765.0 L450.0 780.0 L442.0 795.0 L432.0 807.0 L420.0 820.0 L407.0 830.0 L395.0 840.0 L385.0 850.0 L375.0 865.0 L367.0 880.0 L362.0 895.0 L360.0 920.0 L270.0 920.0 Z M397.0 700.0 L400.0 715.0 L410.0 717.0 L425.0 714.0 L440.0 710.0 L447.0 700.0 Z M680.0 700.0 L735.0 700.0 L732.0 722.0 L727.0 735.0 L720.0 750.0 L710.0 762.0 L705.0 764.0 L700.0 755.0 L695.0 740.0 L687.0 725.0 L682.0 715.0 Z M729.0 752.0 L735.0 750.0 L742.0 762.0 L745.0 775.0 L737.0 784.0 L730.0 780.0 L727.0 767.0 Z M489.0 721.5 L496.0 721.5 L495.0 724.0 L490.0 724.5 Z M962.0 853.0 L965.0 852.0 L969.0 860.0 L967.0 862.0 L963.0 858.0 Z M978.0 862.0 L984.0 863.0 L983.0 866.0 L979.0 866.0 Z" fill="#c6eabf"/><g filter="url(#bl8)" fill="#b7e4b2" opacity=".9"><ellipse cx="1040" cy="200" rx="90" ry="30"/><ellipse cx="1180" cy="230" rx="50" ry="50"/><ellipse cx="1240" cy="330" rx="25" ry="50"/><ellipse cx="320" cy="760" rx="40" ry="40"/><ellipse cx="1035" cy="830" rx="30" ry="25"/><ellipse cx="1290" cy="880" rx="40" ry="14"/></g><ellipse cx="958" cy="396" rx="48" ry="22" fill="#f4f1ee" filter="url(#bl8)"/><path d="M425 742 L465 733 L466 752 L451 762 L433 760 L426 752 Z" fill="#f2eeea" filter="url(#bl3)"/><path d="M880.0 410.0 L920.0 412.0 L927.0 415.0 L945.0 417.0 L955.0 422.0 L970.0 417.0 L982.0 411.0 L1005.0 405.0 L1014.0 398.0 L1012.0 390.0 L1017.0 382.0 L1030.0 384.0 L1042.0 376.0 L1052.0 375.0 L1060.0 367.0 L1070.0 360.0 L1087.0 359.0 L1090.0 355.0 L1080.0 342.0 L1070.0 341.0 L1057.0 345.0 L1050.0 341.0 L1052.0 335.0 L1060.0 316.0 L1067.0 320.0 L1080.0 315.0 L1085.0 305.0 L1095.0 290.0 L1097.0 277.0 L1090.0 274.0 L1100.0 266.0 L1120.0 262.0 L1132.0 266.0 L1145.0 275.0 L1152.0 292.0 L1157.0 310.0 L1170.0 320.0 L1185.0 330.0 L1190.0 344.0 L1202.0 345.0 L1215.0 339.0 L1226.0 336.0 L1222.0 350.0 L1217.0 365.0 L1210.0 380.0 L1197.0 376.0 L1195.2 380.0 L1192.8 389.6 L1192.0 400.8 L1190.4 407.2 L1185.6 410.4 L1184.0 408.8 L1174.4 414.4 L1166.4 419.2 L1163.2 425.6 L1153.6 421.6 L1148.8 428.0 L1140.8 434.4 L1131.2 442.4 L1124.8 444.8 L1120.0 446.0 L1110.0 450.0 L1105.0 454.0 L1100.0 452.0 L1105.0 445.0 L1110.0 437.0 L1105.0 434.0 L1099.0 437.0 L1092.0 445.0 L1085.0 450.0 L1077.0 454.0 L1070.0 459.0 L1075.0 464.0 L1082.0 465.0 L1085.0 472.0 L1092.0 475.0 L1100.0 467.0 L1105.0 472.0 L1114.0 472.0 L1112.0 477.0 L1105.0 480.0 L1100.0 485.0 L1092.0 490.0 L1085.0 497.0 L1084.0 500.0 L1092.0 507.0 L1097.0 517.0 L1102.0 527.0 L1107.0 535.0 L1110.0 545.0 L1106.0 550.0 L1112.0 552.0 L1110.0 560.0 L1105.0 570.0 L1095.0 582.0 L1090.0 592.0 L1085.0 600.0 L1080.0 603.9 L1074.9 608.9 L1068.6 616.4 L1063.6 620.2 L1058.5 624.0 L1051.0 626.5 L1045.9 627.8 L1040.9 631.6 L1035.9 630.3 L1030.8 634.1 L1024.5 636.6 L1018.2 637.9 L1010.7 639.1 L1005.6 640.4 L1003.1 642.9 L1005.6 645.4 L1005.0 650.5 L1000.6 650.5 L998.1 645.4 L997.5 640.4 L995.6 638.5 L990.5 637.9 L983.0 637.6 L977.9 637.2 L974.2 635.3 L970.4 631.6 L971.0 626.5 L966.6 624.0 L961.6 623.4 L957.8 620.2 L952.7 624.0 L946.4 626.5 L940.2 625.9 L932.6 627.8 L925.0 630.3 L925.7 640.4 L922.5 641.6 L880.0 642.0 Z M1091.0 616.0 L1095.0 607.0 L1100.0 601.0 L1107.0 600.0 L1109.0 606.0 L1106.0 617.0 L1102.0 627.0 L1099.0 635.0 L1095.0 630.0 L1092.0 624.0 Z M988.0 660.5 L990.5 655.5 L996.8 652.3 L1003.1 651.7 L1008.2 652.3 L1010.1 655.5 L1008.2 660.5 L1005.6 665.6 L1000.6 668.7 L995.6 670.6 L990.5 668.7 L988.0 664.9 Z" fill="#eef8ff" fill-opacity=".58"/><path d="M995 227 L1000 232 L992 250 L982 265 L970 280 L952 292 L945 290 L965 275 L977 260 L987 242 Z" fill="#a6deff"/><path d="M294 837 L312 836 L314 850 L307 860 L295 857 L292 845 Z" fill="#8fd6ff"/><path d="M1158 240 L1168 237 L1166 243 L1157 247 Z M1064 325 L1069 322 L1068 330 L1063 332 Z" fill="#a6deff"/><g fill="none" stroke="#9bdcff" stroke-linecap="round" stroke-linejoin="round"><path d="M922.500 173.800 L931.300 176.300 L935 180 L935.600 185" stroke-width="2"/><path d="M933.800 191.300 L930 205 L928.800 215 L933.800 220 L937.500 230 L936.300 240 L938.800 250 L941.300 260 L940 268.800" stroke-width="1.800"/><path d="M1022.500 165 L1026.300 175 L1027.500 186.300 L1038.800 192.500 L1050 197.500 L1057.500 196.300 L1058.800 202.500 L1051.300 208.800 L1051.300 220" stroke-width="1"/><path d="M1262 300 L1258 312 L1250 322 L1243 330 L1238 338 L1232 342" stroke-width="1.200"/><path d="M1105 157 L1106 175 L1104 195" stroke-width=".8" stroke-dasharray="3 4"/></g><g fill="#cfeecb" opacity=".7"><ellipse cx="1410" cy="309" rx="2.500" ry="1.500" transform="rotate(-40 1410 309)"/><ellipse cx="1398" cy="322" rx="1.500" ry="1"/><ellipse cx="1384" cy="338" rx="1.500" ry="1"/><ellipse cx="1368" cy="352" rx="1.500" ry="1"/><ellipse cx="1352" cy="365" rx="2.500" ry="1.200" transform="rotate(-40 1352 365)"/><ellipse cx="1340" cy="375" rx="3" ry="1.200" transform="rotate(-40 1340 375)"/><ellipse cx="1328" cy="385" rx="3.500" ry="1.300" transform="rotate(-40 1328 385)"/><ellipse cx="1509" cy="238" rx="2.500" ry="1.200" transform="rotate(40 1509 238)"/><ellipse cx="1547" cy="270" rx="2" ry="1"/><ellipse cx="1590" cy="283" rx="1.500" ry="1"/><ellipse cx="1140" cy="548" rx="1.500" ry="1"/><ellipse cx="1150" cy="540" rx="1.500" ry="1"/><ellipse cx="1165" cy="556" rx="1.200" ry="1"/><ellipse cx="1500" cy="880" rx="2" ry="1"/><ellipse cx="1440" cy="905" rx="4" ry="1.200" transform="rotate(30 1440 905)"/><ellipse cx="1275" cy="845" rx="3" ry="1"/><ellipse cx="1255" cy="848" rx="2" ry="1"/><ellipse cx="870" cy="735" rx="1" ry="4"/><ellipse cx="868" cy="760" rx="1" ry="3"/><ellipse cx="884" cy="822" rx="3" ry="1.200" transform="rotate(40 884 822)"/><ellipse cx="900" cy="845" rx="3" ry="1.200" transform="rotate(50 900 845)"/><ellipse cx="912" cy="865" rx="2.500" ry="1" transform="rotate(50 912 865)"/></g><g fill="none" stroke="#9a9ab8" stroke-width=".8" opacity=".85"><path d="M920 215 L960 230 L985 295 L1000 310 L1040 312 L1060 316"/><path d="M920 290 L950 300 L975 320 L1010 322 L1050 318"/><path d="M1078 157 L1082 205 L1092 220 L1105 225 L1108 262"/><path d="M1108 222 L1140 228 L1165 226 L1195 228 L1205 232 L1190 250 L1195 262 L1225 268 L1222 290 L1200 300 L1190 330"/><path d="M1195 180 L1215 170 L1240 165 L1260 160"/><path d="M1415 157 L1417 167"/><path d="M279 760 L300 745 L318 712 L330 700"/><path d="M318 745 L330 790 L372 795 L395 782 L425 760 L440 760 L400 745 L385 730"/><path d="M376 795 L375 840 L395 855"/><path d="M279 800 L312 798 L330 790"/><path d="M312 836 L345 860 L362 880"/><path d="M279 846 L294 846"/><path d="M1280 862 L1280 912"/><path d="M932 708 L935 725 M955 700 L950 720 L962 735 L965 750"/><path d="M1000 826 L1020 822 L1045 812 L1052 800 L1065 798 L1070 790"/><path d="M720 708 L718 730 L708 750"/></g><g fill="none" stroke="#2e5fc0" stroke-width=".8" opacity=".8"><path d="M1098 278 L1105 280 L1112 292 L1128 296 L1138 290 L1145 298 L1138 312 L1132 325 L1118 340 L1112 350 L1120 358 L1116 366"/><path d="M1052 375 L1075 378 L1095 372 L1105 365 L1116 366 L1125 372 L1135 370 L1145 380 L1155 376 L1165 388 L1180 384 L1191 390"/><path d="M1105 365 L1108 385 L1125 395 L1135 405 L1150 402 L1160 412 L1170 410 L1180 410"/><path d="M1108 385 L1100 400 L1088 405 L1070 420 L1060 418 L1048 428 L1040 422 L1030 430"/><path d="M1100 400 L1110 415 L1118 430 L1132 441"/><path d="M1030 430 L1035 445 L1030 460 L1040 470 L1035 485 L1042 495 L1060 492 L1070 480 L1070 459"/><path d="M1030 430 L1015 440 L1005 450 L1000 470 L985 478 L980 495 L965 505 L960 520 L945 525"/><path d="M1005 450 L990 448 L975 455 L962 450 L948 460 L940 455 L922 460"/><path d="M1042 495 L1048 508 L1062 512 L1075 505 L1084 500"/><path d="M1048 508 L1040 520 L1025 525 L1010 520 L1000 528 L985 522 L980 495"/><path d="M1062 512 L1065 528 L1075 538 L1072 552 L1085 560 L1095 556 L1106 550"/><path d="M1010 520 L1012 540 L1005 552 L1015 565 L1030 568 L1045 560 L1060 565 L1072 552"/><path d="M1005 552 L990 558 L975 552 L965 560 L950 555 L940 565 L922 560"/><path d="M1030 568 L1028 585 L1035 600 L1030 615 L1037 632"/><path d="M1060 565 L1058 580 L1065 595 L1062 610 L1065 619"/><path d="M1085 560 L1082 575 L1075 590 L1080 600 L1075 609"/><path d="M990 558 L988 575 L995 590 L985 600 L990 615 L982 625 L982 636"/><path d="M940 565 L945 580 L938 595 L945 610 L960 621"/><path d="M995 590 L1010 592 L1020 585 L1028 585"/></g><path d="M880.0 410.0 L920.0 412.0 L927.0 415.0 L945.0 417.0 L955.0 422.0 L970.0 417.0 L982.0 411.0 L1005.0 405.0 L1014.0 398.0 L1012.0 390.0 L1017.0 382.0 L1030.0 384.0 L1042.0 376.0 L1052.0 375.0 L1060.0 367.0 L1070.0 360.0 L1087.0 359.0 L1090.0 355.0 L1080.0 342.0 L1070.0 341.0 L1057.0 345.0 L1050.0 341.0 L1052.0 335.0 L1060.0 316.0 L1067.0 320.0 L1080.0 315.0 L1085.0 305.0 L1095.0 290.0 L1097.0 277.0 L1090.0 274.0 M1090.0 274.0 L1100.0 266.0 L1120.0 262.0 L1132.0 266.0 L1145.0 275.0 L1152.0 292.0 L1157.0 310.0 L1170.0 320.0 L1185.0 330.0 L1190.0 344.0 L1202.0 345.0 L1215.0 339.0 L1226.0 336.0 L1222.0 350.0 L1217.0 365.0 L1210.0 380.0 L1197.0 376.0 L1195.2 380.0 L1192.8 389.6 L1192.0 400.8 L1190.4 407.2 L1185.6 410.4 L1184.0 408.8 L1174.4 414.4 L1166.4 419.2 L1163.2 425.6 L1153.6 421.6 L1148.8 428.0 L1140.8 434.4 L1131.2 442.4 L1124.8 444.8 M1124.8 444.8 L1120.0 446.0 L1110.0 450.0 L1105.0 454.0 L1100.0 452.0 L1105.0 445.0 L1110.0 437.0 L1105.0 434.0 L1099.0 437.0 L1092.0 445.0 L1085.0 450.0 L1077.0 454.0 L1070.0 459.0 L1075.0 464.0 L1082.0 465.0 L1085.0 472.0 L1092.0 475.0 L1100.0 467.0 L1105.0 472.0 L1114.0 472.0 L1112.0 477.0 L1105.0 480.0 L1100.0 485.0 L1092.0 490.0 L1085.0 497.0 L1084.0 500.0 L1092.0 507.0 L1097.0 517.0 L1102.0 527.0 L1107.0 535.0 L1110.0 545.0 L1106.0 550.0 L1112.0 552.0 L1110.0 560.0 L1105.0 570.0 L1095.0 582.0 L1090.0 592.0 L1085.0 600.0 L1080.0 603.9 L1074.9 608.9 L1068.6 616.4 L1063.6 620.2 L1058.5 624.0 L1051.0 626.5 L1045.9 627.8 L1040.9 631.6 L1035.9 630.3 L1030.8 634.1 L1024.5 636.6 L1018.2 637.9 L1010.7 639.1 L1005.6 640.4 L1003.1 642.9 L1005.6 645.4 L1005.0 650.5 L1000.6 650.5 L998.1 645.4 L997.5 640.4 L995.6 638.5 L990.5 637.9 L983.0 637.6 L977.9 637.2 L974.2 635.3 M974.2 635.3 L970.4 631.6 L971.0 626.5 L966.6 624.0 L961.6 623.4 L957.8 620.2 L952.7 624.0 L946.4 626.5 L940.2 625.9 L932.6 627.8 L925.0 630.3 L925.7 640.4 L922.5 641.6 L880.0 642.0 M1091.0 616.0 L1095.0 607.0 L1100.0 601.0 L1107.0 600.0 L1109.0 606.0 L1106.0 617.0 L1102.0 627.0 L1099.0 635.0 L1095.0 630.0 L1092.0 624.0 Z M988.0 660.5 L990.5 655.5 L996.8 652.3 L1003.1 651.7 L1008.2 652.3 L1010.1 655.5 L1008.2 660.5 L1005.6 665.6 L1000.6 668.7 L995.6 670.6 L990.5 668.7 L988.0 664.9 Z" fill="none" stroke="#2160dc" stroke-width="1.8" stroke-linejoin="round"/><rect x="1163.5" y="564.5" width="78.5" height="118.5" fill="#4f9ef0" fill-opacity=".45" stroke="#2a6ad8" stroke-width="1"/><path d="M1164 565 H1215 L1212 570 L1200 573 L1185 575 L1172 575 L1166 571 Z M1233 565 H1241 L1238 572 Z" fill="#1f5fd6"/><ellipse cx="1185.500" cy="589.5" rx="7" ry="4.5" transform="rotate(-25 1185.5 589.5)" fill="#1f5fd6"/><rect x="1183.6" y="575" width="1.6" height="8" fill="#1f5fd6"/><g fill="#2a63d6" opacity=".7"><circle cx="1193" cy="601" r=".8"/><circle cx="1197" cy="603" r=".8"/><circle cx="1205" cy="633" r=".8"/><circle cx="1210" cy="637" r=".8"/><circle cx="1214" cy="634" r=".8"/><circle cx="1208" cy="642" r=".8"/><circle cx="1216" cy="641" r=".8"/><circle cx="1203" cy="647" r=".8"/><circle cx="1212" cy="648" r=".8"/></g><g fill="#b8c4d8" opacity=".9"><rect x="1231" y="590" width="2" height="3.5"/><rect x="1229" y="606" width="2" height="3.5"/><rect x="1181" y="607" width="2" height="3.5"/><rect x="1183" y="628" width="2" height="3.5"/><rect x="1229" y="629" width="2" height="3.5"/><rect x="1173" y="655" width="2" height="3.5"/><rect x="1214" y="651" width="2" height="3.5"/><rect x="1196" y="673" width="2" height="3.5"/></g><text x="1212" y="665" font-size="9.5" fill="#3a9bf0" opacity=".55" text-anchor="middle" letter-spacing="2.5" font-weight="bold">菲律宾海</text><g stroke="#2a66e6" stroke-width="2.4" stroke-linecap="round" fill="none"><path d="M1114 607 L1112 620"/><path d="M1106 636 L1101 645"/><path d="M1091 661 L1086 671"/><path d="M1080.600 727 L1077.500 737.500"/><path d="M1056.900 765 L1050 773"/><path d="M1015.600 806 L1026 803"/><path d="M983.800 773.800 L984.400 782.500"/><path d="M1002.500 723.800 L1001.300 735"/><path d="M994 689 L999 699"/><path d="M1081 690 L1082 698"/></g><g fill="#2a66e6"><circle cx="1017.4" cy="688.6" r="1.0"/><circle cx="1023.1" cy="687.7" r="1.0"/><circle cx="1018.1" cy="688.9" r="1.0"/><circle cx="1014.2" cy="688.1" r="1.0"/><circle cx="1019.6" cy="690.9" r="1.0"/><circle cx="1013.1" cy="686.0" r="1.0"/><circle cx="1013.1" cy="691.1" r="1.0"/><circle cx="1020.3" cy="683.4" r="1.0"/><circle cx="1023.8" cy="692.6" r="1.0"/><circle cx="1041.5" cy="692.7" r="0.9"/><circle cx="1036.6" cy="689.1" r="0.9"/><circle cx="1040.3" cy="689.4" r="0.9"/><circle cx="1036.9" cy="690.5" r="0.9"/><circle cx="1035.3" cy="691.8" r="0.9"/><circle cx="1000.3" cy="768.7" r="1.1"/><circle cx="1001.2" cy="767.1" r="1.1"/><circle cx="1001.0" cy="767.3" r="1.1"/><circle cx="1000.5" cy="764.2" r="1.1"/><circle cx="1007.0" cy="770.0" r="1.1"/><circle cx="1005.1" cy="767.7" r="1.1"/><circle cx="998.8" cy="763.8" r="1.1"/><circle cx="998.5" cy="762.6" r="1.1"/><circle cx="1004.2" cy="765.2" r="1.1"/><circle cx="1024.2" cy="757.7" r="1.1"/><circle cx="1025.5" cy="766.9" r="1.1"/><circle cx="1014.0" cy="754.2" r="1.1"/><circle cx="1024.9" cy="759.4" r="1.1"/><circle cx="1025.8" cy="757.9" r="1.1"/><circle cx="1014.9" cy="762.6" r="1.1"/><circle cx="1023.3" cy="755.4" r="1.1"/><circle cx="1015.0" cy="756.7" r="1.1"/><circle cx="1025.6" cy="765.2" r="1.1"/><circle cx="1015.4" cy="754.9" r="1.1"/><circle cx="1015.2" cy="751.2" r="1.1"/><circle cx="1023.6" cy="753.6" r="1.1"/><circle cx="1020.7" cy="758.9" r="1.1"/><circle cx="1016.3" cy="764.6" r="1.1"/><circle cx="1034.4" cy="764.9" r="1.2"/><circle cx="1034.1" cy="760.4" r="1.2"/><circle cx="1035.8" cy="757.4" r="1.2"/><circle cx="1049.5" cy="768.1" r="1.2"/><circle cx="1037.5" cy="769.7" r="1.2"/><circle cx="1035.8" cy="759.9" r="1.2"/><circle cx="1047.4" cy="764.8" r="1.2"/><circle cx="1033.8" cy="771.8" r="1.2"/><circle cx="1035.8" cy="757.2" r="1.2"/><circle cx="1045.9" cy="758.6" r="1.2"/><circle cx="1037.3" cy="753.5" r="1.2"/><circle cx="1033.6" cy="763.7" r="1.2"/><circle cx="1036.4" cy="764.0" r="1.2"/><circle cx="1038.7" cy="761.1" r="1.2"/><circle cx="1049.3" cy="761.7" r="1.2"/><circle cx="1042.3" cy="769.3" r="1.2"/><circle cx="1035.3" cy="755.1" r="1.2"/><circle cx="1048.4" cy="768.4" r="1.2"/><circle cx="1036.5" cy="755.8" r="1.2"/><circle cx="1045.3" cy="770.8" r="1.2"/><circle cx="1035.5" cy="771.0" r="1.2"/><circle cx="1047.9" cy="764.1" r="1.2"/><circle cx="1037.1" cy="733.9" r="1.1"/><circle cx="1032.5" cy="749.3" r="1.1"/><circle cx="1034.9" cy="744.7" r="1.1"/><circle cx="1035.1" cy="746.8" r="1.1"/><circle cx="1039.2" cy="737.3" r="1.1"/><circle cx="1034.1" cy="745.0" r="1.1"/><circle cx="1032.8" cy="736.1" r="1.1"/><circle cx="1038.7" cy="747.3" r="1.1"/><circle cx="1039.4" cy="737.0" r="1.1"/><circle cx="1043.0" cy="735.7" r="1.1"/><circle cx="1032.2" cy="736.8" r="1.1"/><circle cx="1037.3" cy="733.1" r="1.1"/><circle cx="1049.5" cy="746.9" r="1.1"/><circle cx="1055.0" cy="743.1" r="1.1"/><circle cx="1052.1" cy="755.3" r="1.1"/><circle cx="1060.7" cy="751.5" r="1.1"/><circle cx="1056.7" cy="750.4" r="1.1"/><circle cx="1049.0" cy="741.6" r="1.1"/><circle cx="1047.3" cy="755.6" r="1.1"/><circle cx="1056.8" cy="756.4" r="1.1"/><circle cx="1047.3" cy="751.2" r="1.1"/><circle cx="1053.8" cy="752.7" r="1.1"/><circle cx="1051.5" cy="757.0" r="1.1"/><circle cx="1048.1" cy="749.7" r="1.1"/><circle cx="1057.3" cy="755.4" r="1.1"/><circle cx="1057.3" cy="752.3" r="1.1"/><circle cx="1068.5" cy="744.8" r="1.1"/><circle cx="1063.2" cy="741.6" r="1.1"/><circle cx="1069.8" cy="744.2" r="1.1"/><circle cx="1064.0" cy="743.1" r="1.1"/><circle cx="1069.4" cy="740.0" r="1.1"/><circle cx="1066.5" cy="737.4" r="1.1"/><circle cx="1066.0" cy="740.5" r="1.1"/><circle cx="1060.0" cy="741.0" r="1.1"/><circle cx="1070.9" cy="744.3" r="1.1"/><circle cx="1067.7" cy="737.4" r="1.1"/><circle cx="1024.4" cy="787.8" r="1.2"/><circle cx="1022.6" cy="790.4" r="1.2"/><circle cx="1020.5" cy="789.5" r="1.2"/><circle cx="1020.2" cy="788.0" r="1.2"/><circle cx="1022.9" cy="784.3" r="1.2"/><circle cx="1024.2" cy="787.0" r="1.2"/><circle cx="1023.7" cy="791.2" r="1.2"/><circle cx="1021.5" cy="782.1" r="1.2"/><circle cx="1019.4" cy="804.5" r="1.0"/><circle cx="1018.6" cy="803.0" r="1.0"/><circle cx="1024.2" cy="804.5" r="1.0"/><circle cx="1020.5" cy="805.2" r="1.0"/><circle cx="1054" cy="643" r="1.6"/><circle cx="1062" cy="646" r="1.6"/><circle cx="1027" cy="658" r="1.6"/><circle cx="1035" cy="660" r="1.6"/><circle cx="1060" cy="688" r="1.6"/><circle cx="1049" cy="710" r="1.6"/><circle cx="1121" cy="596" r="1.6"/><circle cx="1131" cy="594" r="1.6"/><circle cx="1109" cy="598" r="1.6"/><circle cx="1085" cy="617" r="1.6"/></g><text x="1037" y="735" font-size="8" fill="#3a86d8" opacity=".5" transform="rotate(75 1037 735)" text-anchor="middle">南海</text><g fill="#2160dc"><circle cx="1111" cy="556" r="2"/><circle cx="1113" cy="549" r="1.4"/><circle cx="1108" cy="563" r="1.5"/><circle cx="1089" cy="595" r="1.3"/><circle cx="1080" cy="604" r="1.3"/><circle cx="1032" cy="633" r="1.4"/><circle cx="1038" cy="630" r="1.2"/><circle cx="1003" cy="643" r="1.6"/></g><text font-size="10.5" fill="#3da3f2" opacity=".85" text-anchor="middle" letter-spacing="2" font-weight="bold"><tspan x="1360" y="256">鄂霍次</tspan><tspan x="1360" y="270">克海</tspan></text><text x="793" y="712" font-size="10.5" fill="#3da3f2" opacity=".8" text-anchor="middle" letter-spacing="2" font-weight="bold">孟加拉湾</text><text x="1158" y="334" font-size="9.5" fill="#1d3a78" font-weight="bold" text-anchor="middle" stroke="#fff" stroke-width="1.6" stroke-opacity=".8" paint-order="stroke" letter-spacing="0.4" opacity="1">黑龙江省</text><text x="1147" y="401" font-size="9.5" fill="#1d3a78" font-weight="bold" text-anchor="middle" stroke="#fff" stroke-width="1.6" stroke-opacity=".8" paint-order="stroke" letter-spacing="0.4" opacity="1">吉林省</text><text x="1113" y="432" font-size="9.5" fill="#1d3a78" font-weight="bold" text-anchor="middle" stroke="#fff" stroke-width="1.6" stroke-opacity=".8" paint-order="stroke" letter-spacing="0.4" opacity="1">辽宁省</text><text x="1072" y="487.5" font-size="9.5" fill="#1d3a78" font-weight="bold" text-anchor="middle" stroke="#fff" stroke-width="1.6" stroke-opacity=".8" paint-order="stroke" letter-spacing="0.4" opacity="1">山东省</text><text x="1027" y="514.5" font-size="9.5" fill="#1d3a78" font-weight="bold" text-anchor="middle" stroke="#fff" stroke-width="1.6" stroke-opacity=".8" paint-order="stroke" letter-spacing="0.4" opacity="1">河南省</text><text x="1025" y="544" font-size="9.5" fill="#1d3a78" font-weight="bold" text-anchor="middle" stroke="#fff" stroke-width="1.6" stroke-opacity=".8" paint-order="stroke" letter-spacing="0.4" opacity="1">湖北省</text><text x="1090" y="564.5" font-size="9.5" fill="#1d3a78" font-weight="bold" text-anchor="middle" stroke="#fff" stroke-width="1.6" stroke-opacity=".8" paint-order="stroke" letter-spacing="0.4" opacity="1">浙江省</text><text x="1012" y="583" font-size="9.5" fill="#1d3a78" font-weight="bold" text-anchor="middle" stroke="#fff" stroke-width="1.6" stroke-opacity=".8" paint-order="stroke" letter-spacing="0.4" opacity="1">湖南省</text><text x="969" y="588" font-size="9.5" fill="#1d3a78" font-weight="bold" text-anchor="middle" stroke="#fff" stroke-width="1.6" stroke-opacity=".8" paint-order="stroke" letter-spacing="0.4" opacity="1">贵州省</text><text x="1034" y="628.8" font-size="9.5" fill="#1d3a78" font-weight="bold" text-anchor="middle" stroke="#fff" stroke-width="1.6" stroke-opacity=".8" paint-order="stroke" letter-spacing="0.4" opacity="1">广东省</text><text x="933" y="553.5" font-size="9.5" fill="#1d3a78" font-weight="bold" text-anchor="middle" stroke="#fff" stroke-width="1.6" stroke-opacity=".8" paint-order="stroke" letter-spacing="0.4" opacity="1">四川省</text><text x="929" y="604.5" font-size="9.5" fill="#1d3a78" font-weight="bold" text-anchor="middle" stroke="#fff" stroke-width="1.6" stroke-opacity=".8" paint-order="stroke" letter-spacing="0.4" opacity="1">南省</text><text x="978" y="284" font-size="8.5" fill="#4c4c4c" text-anchor="middle" stroke="#fff" stroke-width="1.8" stroke-opacity=".8" paint-order="stroke" letter-spacing="0.5" opacity="1">乌兰乌德</text><text x="1031" y="281" font-size="8.5" fill="#4c4c4c" text-anchor="middle" stroke="#fff" stroke-width="1.8" stroke-opacity=".8" paint-order="stroke" letter-spacing="0.5" opacity="1">赤塔</text><text x="972" y="338" font-size="8.5" fill="#4c4c4c" text-anchor="middle" stroke="#fff" stroke-width="1.8" stroke-opacity=".8" paint-order="stroke" letter-spacing="0.5" opacity="1">乌兰巴托</text><text x="944" y="361" font-size="8.5" fill="#4c4c4c" text-anchor="middle" stroke="#fff" stroke-width="1.8" stroke-opacity=".8" paint-order="stroke" letter-spacing="0.5" opacity="1">尔拜赫雷</text><text x="928" y="217" font-size="8.5" fill="#4c4c4c" text-anchor="middle" stroke="#fff" stroke-width="1.8" stroke-opacity=".8" paint-order="stroke" letter-spacing="0.5" opacity="1">兹茨克</text><text x="1243" y="295" font-size="8.5" fill="#4c4c4c" text-anchor="middle" stroke="#fff" stroke-width="1.8" stroke-opacity=".8" paint-order="stroke" letter-spacing="0.5" opacity="1">阿穆尔河</text><text x="1243" y="304" font-size="8.5" fill="#4c4c4c" text-anchor="middle" stroke="#fff" stroke-width="1.8" stroke-opacity=".8" paint-order="stroke" letter-spacing="0.5" opacity="1">畔共青城</text><text x="1226" y="331" font-size="8.5" fill="#4c4c4c" text-anchor="middle" stroke="#fff" stroke-width="1.8" stroke-opacity=".8" paint-order="stroke" letter-spacing="0.5" opacity="1">伯力</text><text x="1295" y="352" font-size="8.5" fill="#4c4c4c" text-anchor="middle" stroke="#fff" stroke-width="1.8" stroke-opacity=".8" paint-order="stroke" letter-spacing="0.5" opacity="1">南萨哈林斯克</text><text x="1439" y="257" font-size="8.5" fill="#4c4c4c" text-anchor="middle" stroke="#fff" stroke-width="1.8" stroke-opacity=".8" paint-order="stroke" letter-spacing="0.5" opacity="1">堪察加彼得巴</text><text x="1439" y="266" font-size="8.5" fill="#4c4c4c" text-anchor="middle" stroke="#fff" stroke-width="1.8" stroke-opacity=".8" paint-order="stroke" letter-spacing="0.5" opacity="1">夫洛夫斯克</text><text x="1283" y="402" font-size="8.5" fill="#4c4c4c" text-anchor="middle" stroke="#fff" stroke-width="1.8" stroke-opacity=".8" paint-order="stroke" letter-spacing="0.5" opacity="1">札幌市</text><text x="1142" y="449" font-size="8.5" fill="#4c4c4c" text-anchor="middle" stroke="#fff" stroke-width="1.8" stroke-opacity=".8" paint-order="stroke" letter-spacing="0.5" opacity="1">平壤市</text><text x="1178" y="467" font-size="8.5" fill="#4c4c4c" text-anchor="middle" stroke="#fff" stroke-width="1.8" stroke-opacity=".8" paint-order="stroke" letter-spacing="0.5" opacity="1">首尔特别市</text><text x="1278" y="459" font-size="8.5" fill="#4c4c4c" text-anchor="middle" stroke="#fff" stroke-width="1.8" stroke-opacity=".8" paint-order="stroke" letter-spacing="0.5" opacity="1">仙台市</text><text x="1268" y="487" font-size="8.5" fill="#4c4c4c" text-anchor="middle" stroke="#fff" stroke-width="1.8" stroke-opacity=".8" paint-order="stroke" letter-spacing="0.5" opacity="1">东京</text><text x="1230" y="498" font-size="8.5" fill="#4c4c4c" text-anchor="middle" stroke="#fff" stroke-width="1.8" stroke-opacity=".8" paint-order="stroke" letter-spacing="0.5" opacity="1">大阪市</text><text x="1184" y="511" font-size="8.5" fill="#4c4c4c" text-anchor="middle" stroke="#fff" stroke-width="1.8" stroke-opacity=".8" paint-order="stroke" letter-spacing="0.5" opacity="1">福冈市</text><text x="962" y="639" font-size="8.5" fill="#4c4c4c" text-anchor="middle" stroke="#fff" stroke-width="1.8" stroke-opacity=".8" paint-order="stroke" letter-spacing="0.5" opacity="1">河内市</text><text x="933" y="668" font-size="8.5" fill="#4c4c4c" text-anchor="middle" stroke="#fff" stroke-width="1.8" stroke-opacity=".8" paint-order="stroke" letter-spacing="0.5" opacity="1">永珍</text><text x="984" y="686" font-size="8.5" fill="#4c4c4c" text-anchor="middle" stroke="#fff" stroke-width="1.8" stroke-opacity=".8" paint-order="stroke" letter-spacing="0.5" opacity="1">岘港市</text><text x="962" y="719" font-size="8.5" fill="#4c4c4c" text-anchor="middle" stroke="#fff" stroke-width="1.8" stroke-opacity=".8" paint-order="stroke" letter-spacing="0.5" opacity="1">暹粒市</text><text x="991" y="737" font-size="8.5" fill="#4c4c4c" text-anchor="middle" stroke="#fff" stroke-width="1.8" stroke-opacity=".8" paint-order="stroke" letter-spacing="0.5" opacity="1">胡志明市</text><text x="1097" y="677" font-size="8.5" fill="#4c4c4c" text-anchor="middle" stroke="#fff" stroke-width="1.8" stroke-opacity=".8" paint-order="stroke" letter-spacing="0.5" opacity="1">Mabalite</text><text x="1082" y="701" font-size="8.5" fill="#4c4c4c" text-anchor="middle" stroke="#fff" stroke-width="1.8" stroke-opacity=".8" paint-order="stroke" letter-spacing="0.5" opacity="1">马尼拉</text><text x="1124" y="714" font-size="8.5" fill="#4c4c4c" text-anchor="middle" stroke="#fff" stroke-width="1.8" stroke-opacity=".8" paint-order="stroke" letter-spacing="0.5" opacity="1">黎牙实比</text><text x="1117" y="737" font-size="8.5" fill="#4c4c4c" text-anchor="middle" stroke="#fff" stroke-width="1.8" stroke-opacity=".8" paint-order="stroke" letter-spacing="0.5" opacity="1">巴科洛德</text><text x="1109" y="770" font-size="8.5" fill="#4c4c4c" text-anchor="middle" stroke="#fff" stroke-width="1.8" stroke-opacity=".8" paint-order="stroke" letter-spacing="0.5" opacity="1">三宝颜</text><text x="1140" y="769" font-size="8.5" fill="#4c4c4c" text-anchor="middle" stroke="#fff" stroke-width="1.8" stroke-opacity=".8" paint-order="stroke" letter-spacing="0.5" opacity="1">达沃市</text><text x="898" y="801" font-size="8.5" fill="#4c4c4c" text-anchor="middle" stroke="#fff" stroke-width="1.8" stroke-opacity=".8" paint-order="stroke" letter-spacing="0.5" opacity="1">棉兰</text><text x="925" y="804" font-size="8.5" fill="#4c4c4c" text-anchor="middle" stroke="#fff" stroke-width="1.8" stroke-opacity=".8" paint-order="stroke" letter-spacing="0.5" opacity="1">吉隆坡</text><text x="923" y="828" font-size="8.5" fill="#4c4c4c" text-anchor="middle" stroke="#fff" stroke-width="1.8" stroke-opacity=".8" paint-order="stroke" letter-spacing="0.5" opacity="1">北干巴鲁</text><text x="913" y="841" font-size="8.5" fill="#4c4c4c" text-anchor="middle" stroke="#fff" stroke-width="1.8" stroke-opacity=".8" paint-order="stroke" letter-spacing="0.5" opacity="1">巴东</text><text x="953" y="859" font-size="8.5" fill="#4c4c4c" text-anchor="middle" stroke="#fff" stroke-width="1.8" stroke-opacity=".8" paint-order="stroke" letter-spacing="0.5" opacity="1">巨港</text><text x="993" y="834" font-size="8.5" fill="#4c4c4c" text-anchor="middle" stroke="#fff" stroke-width="1.8" stroke-opacity=".8" paint-order="stroke" letter-spacing="0.5" opacity="1">坤甸</text><text x="1060" y="842" font-size="8.5" fill="#4c4c4c" text-anchor="middle" stroke="#fff" stroke-width="1.8" stroke-opacity=".8" paint-order="stroke" letter-spacing="0.5" opacity="1">努山塔拉</text><text x="1085" y="879" font-size="8.5" fill="#4c4c4c" text-anchor="middle" stroke="#fff" stroke-width="1.8" stroke-opacity=".8" paint-order="stroke" letter-spacing="0.5" opacity="1">望加锡</text><text x="988" y="890" font-size="8.5" fill="#4c4c4c" text-anchor="middle" stroke="#fff" stroke-width="1.8" stroke-opacity=".8" paint-order="stroke" letter-spacing="0.5" opacity="1">雅加达</text><text x="1025" y="899" font-size="8.5" fill="#4c4c4c" text-anchor="middle" stroke="#fff" stroke-width="1.8" stroke-opacity=".8" paint-order="stroke" letter-spacing="0.5" opacity="1">泗水</text><text x="1055" y="910" font-size="8.5" fill="#4c4c4c" text-anchor="middle" stroke="#fff" stroke-width="1.8" stroke-opacity=".8" paint-order="stroke" letter-spacing="0.5" opacity="1">马塔兰</text><text x="1135" y="910" font-size="8.5" fill="#4c4c4c" text-anchor="middle" stroke="#fff" stroke-width="1.8" stroke-opacity=".8" paint-order="stroke" letter-spacing="0.5" opacity="1">帝力</text><text x="1304" y="865" font-size="8.5" fill="#4c4c4c" text-anchor="middle" stroke="#fff" stroke-width="1.8" stroke-opacity=".8" paint-order="stroke" letter-spacing="0.5" opacity="1">韦瓦克</text><text x="1310" y="886" font-size="8.5" fill="#4c4c4c" text-anchor="middle" stroke="#fff" stroke-width="1.8" stroke-opacity=".8" paint-order="stroke" letter-spacing="0.5" opacity="1">芒特哈根</text><text x="1403" y="882" font-size="8.5" fill="#4c4c4c" text-anchor="middle" stroke="#fff" stroke-width="1.8" stroke-opacity=".8" paint-order="stroke" letter-spacing="0.5" opacity="1">布卡</text><text x="1555" y="768" font-size="8.5" fill="#4c4c4c" text-anchor="middle" stroke="#fff" stroke-width="1.8" stroke-opacity=".8" paint-order="stroke" letter-spacing="0.5" opacity="1">马朱罗</text><text x="1570" y="820" font-size="8.5" fill="#4c4c4c" text-anchor="middle" stroke="#fff" stroke-width="1.8" stroke-opacity=".8" paint-order="stroke" letter-spacing="0.5" opacity="1">南塔拉瓦</text><text x="1367" y="159" font-size="8.5" fill="#4c4c4c" text-anchor="middle" stroke="#fff" stroke-width="1.8" stroke-opacity=".8" paint-order="stroke" letter-spacing="0.5" opacity="1">马加丹</text><text x="396" y="725" font-size="8.5" fill="#4c4c4c" text-anchor="middle" stroke="#fff" stroke-width="1.8" stroke-opacity=".8" paint-order="stroke" letter-spacing="0.5" opacity="1">吉布地市</text><text x="404" y="744" font-size="8.5" fill="#4c4c4c" text-anchor="middle" stroke="#fff" stroke-width="1.8" stroke-opacity=".8" paint-order="stroke" letter-spacing="0.5" opacity="1">哈尔格萨</text><text x="356" y="749" font-size="8.5" fill="#4c4c4c" text-anchor="middle" stroke="#fff" stroke-width="1.8" stroke-opacity=".8" paint-order="stroke" letter-spacing="0.5" opacity="1">亚的斯亚贝巴</text><text x="291" y="786" font-size="8.5" fill="#4c4c4c" text-anchor="middle" stroke="#fff" stroke-width="1.8" stroke-opacity=".8" paint-order="stroke" letter-spacing="0.5" opacity="1">朱巴</text><text x="416" y="812" font-size="8.5" fill="#4c4c4c" text-anchor="middle" stroke="#fff" stroke-width="1.8" stroke-opacity=".8" paint-order="stroke" letter-spacing="0.5" opacity="1">摩加迪沙</text><text x="300" y="827" font-size="8.5" fill="#4c4c4c" text-anchor="middle" stroke="#fff" stroke-width="1.8" stroke-opacity=".8" paint-order="stroke" letter-spacing="0.5" opacity="1">坎帕拉</text><text x="373" y="856" font-size="8.5" fill="#4c4c4c" text-anchor="middle" stroke="#fff" stroke-width="1.8" stroke-opacity=".8" paint-order="stroke" letter-spacing="0.5" opacity="1">内罗毕 – 奈洛比</text><text x="361" y="893" font-size="8.5" fill="#4c4c4c" text-anchor="middle" stroke="#fff" stroke-width="1.8" stroke-opacity=".8" paint-order="stroke" letter-spacing="0.5" opacity="1">达累斯萨拉姆</text><text x="507" y="873" font-size="8.5" fill="#4c4c4c" text-anchor="middle" stroke="#fff" stroke-width="1.8" stroke-opacity=".8" paint-order="stroke" letter-spacing="0.5" opacity="1">维多利亚</text><text x="670" y="793" font-size="8.5" fill="#4c4c4c" text-anchor="middle" stroke="#fff" stroke-width="1.8" stroke-opacity=".8" paint-order="stroke" letter-spacing="0.5" opacity="1">马累</text><text x="288" y="855" font-size="8.5" fill="#4c4c4c" text-anchor="middle" stroke="#fff" stroke-width="1.8" stroke-opacity=".8" paint-order="stroke" letter-spacing="0.5" opacity="1">weza</text><text x="288" y="711" font-size="8.5" fill="#4c4c4c" text-anchor="middle" stroke="#fff" stroke-width="1.8" stroke-opacity=".8" paint-order="stroke" letter-spacing="0.5" opacity="1">伊德</text><text x="732" y="711" font-size="8.5" fill="#4c4c4c" text-anchor="middle" stroke="#fff" stroke-width="1.8" stroke-opacity=".8" paint-order="stroke" letter-spacing="0.5" opacity="1">金奈</text><text x="698" y="745" font-size="8.5" fill="#4c4c4c" text-anchor="middle" stroke="#fff" stroke-width="1.8" stroke-opacity=".8" paint-order="stroke" letter-spacing="0.5" opacity="1">喀拉拉邦</text><text font-size="8" fill="#5a5a5a" text-anchor="middle" stroke="#bfe6ff" stroke-width="1.5" paint-order="stroke" stroke-opacity=".6"><tspan x="660" y="892">Camp Thunder</tspan><tspan x="660" y="901">Cove</tspan></text><rect x="285" y="895" width="49" height="9" fill="#fff" fill-opacity=".6"/><path d="M285.500 895 V903.500 H333.500 V895" fill="none" stroke="#666" stroke-width="1"/><text x="309.500" y="902" font-size="6.500" fill="#333" text-anchor="middle">500 km</text></g><rect x="279" y="911" width="1341" height="1.2" fill="#7a7a7a"/><rect x="279" y="157" width="1341" height="1" fill="#5a6a60" opacity=".6"/></svg><div class="a" style="left:0px;top:0px;width:1920px;height:40px;background:#282828;"></div><div class="a" style="left:92px;top:0px;width:100px;height:40px;background:#1f1f1f;"></div><svg style="left:26px;top:13px" width="14" height="13" viewBox="0 0 14 13"><path d="M7 0.3 L13.4 6 V12.6 H8.8 V8.2 H5.2 V12.6 H0.6 V6 Z" fill="#b4b4b4"/></svg><div class="t " style="left:44px;top:10.0px;font-size:12px;color:#a8a8a8;line-height:20px;height:20px;">首页</div><div class="t " style="left:117px;top:10.0px;font-size:12px;color:#d6d6d6;line-height:20px;height:20px;font-weight:bold;">测试2</div><svg style="left:155px;top:16px" width="9" height="9" viewBox="0 0 9 9"><path d="M0.5 0.5 L8.5 8.5 M8.5 0.5 L0.5 8.5" stroke="#b0b0b0" stroke-width="1" fill="none"/></svg><svg style="left:205px;top:13px" width="14" height="14" viewBox="0 0 14 14"><path d="M7 0.5 V13.5 M0.5 7 H13.5" stroke="#c8c8c8" stroke-width="1.2" fill="none"/></svg><svg style="left:1790px;top:19px" width="11" height="2" viewBox="0 0 11 2"><path d="M0 1 H11" stroke="#d0d0d0" stroke-width="1"/></svg><svg style="left:1838px;top:14px" width="14" height="12" viewBox="0 0 14 12"><path d="M0.5 3.5 H10.5 V11.5 H0.5 Z M3.5 3.5 V0.5 H13.5 V8.5 H10.5" stroke="#d0d0d0" stroke-width="1" fill="none"/></svg><svg style="left:1890px;top:15px" width="11" height="11" viewBox="0 0 11 11"><path d="M0.5 0.5 L10.5 10.5 M10.5 0.5 L0.5 10.5" stroke="#d0d0d0" stroke-width="1" fill="none"/></svg><div class="a" style="left:0px;top:40px;width:1920px;height:37px;background:#1f1f1f;"></div><div class="a" style="left:0px;top:40px;width:4px;height:992px;background:#27282a;"></div><div class="a" style="left:80px;top:41px;width:1px;height:35px;background:#262626;"></div><div class="a" style="left:157px;top:41px;width:1px;height:35px;background:#262626;"></div><div class="a" style="left:234px;top:41px;width:1px;height:35px;background:#262626;"></div><div class="a" style="left:300px;top:41px;width:1px;height:35px;background:#262626;"></div><svg style="left:14px;top:50px" width="12" height="15" viewBox="0 0 12 15"><path class="ic" d="M1 1 H7.5 L11 4.5 V14 H1 Z M7.5 1 V4.5 H11 M3.5 8 H8.5 M3.5 10.8 H8.5"/></svg><div class="t " style="left:33px;top:48.0px;font-size:12px;color:#f0f0f0;line-height:20px;height:20px;font-weight:bold;">项目</div><svg style="left:63.5px;top:56.0px" width="9" height="5" viewBox="0 0 9 5"><path d="M0.5 0.5 L4.5 4.3 L8.5 0.5" fill="none" stroke="#d0d0d0" stroke-width="1.2" stroke-linecap="round" stroke-linejoin="round"/></svg><svg style="left:91px;top:50px" width="12" height="15" viewBox="0 0 12 15"><path class="ic" d="M1.5 3.2 C1.5 0.6 10.5 0.6 10.5 3.2 V11.8 C10.5 14.4 1.5 14.4 1.5 11.8 Z M1.5 3.2 C1.5 5.8 10.5 5.8 10.5 3.2 M1.5 7.5 C1.5 10.1 10.5 10.1 10.5 7.5"/></svg><div class="t " style="left:110px;top:48.0px;font-size:12px;color:#f0f0f0;line-height:20px;height:20px;font-weight:bold;">数据</div><svg style="left:140.5px;top:56.0px" width="9" height="5" viewBox="0 0 9 5"><path d="M0.5 0.5 L4.5 4.3 L8.5 0.5" fill="none" stroke="#d0d0d0" stroke-width="1.2" stroke-linecap="round" stroke-linejoin="round"/></svg><svg style="left:167px;top:51px" width="14" height="14" viewBox="0 0 14 14"><path class="ic" d="M1 1 H5.5 V5.5 H1 Z M8.5 1 H13 V5.5 H8.5 Z M1 8.5 H5.5 V13 H1 Z M8.5 8.5 H13 V13 H8.5 Z"/></svg><div class="t " style="left:187px;top:48.0px;font-size:12px;color:#f0f0f0;line-height:20px;height:20px;font-weight:bold;">操作</div><svg style="left:217.5px;top:56.0px" width="9" height="5" viewBox="0 0 9 5"><path d="M0.5 0.5 L4.5 4.3 L8.5 0.5" fill="none" stroke="#d0d0d0" stroke-width="1.2" stroke-linecap="round" stroke-linejoin="round"/></svg><svg style="left:244px;top:50px" width="14" height="15" viewBox="0 0 14 15"><path class="ic" d="M7 1 L13 4.2 V10.8 L7 14 L1 10.8 V4.2 Z M1 4.2 L7 7.5 L13 4.2 M7 7.5 V14"/></svg><div class="t " style="left:264px;top:48.0px;font-size:12px;color:#f0f0f0;line-height:20px;height:20px;font-weight:bold;"><span class="n" style="transform:scaleX(.9)">3D</span></div><svg style="left:283.5px;top:56.0px" width="9" height="5" viewBox="0 0 9 5"><path d="M0.5 0.5 L4.5 4.3 L8.5 0.5" fill="none" stroke="#d0d0d0" stroke-width="1.2" stroke-linecap="round" stroke-linejoin="round"/></svg><div class="a" style="left:1650px;top:45px;width:68px;height:27px;background:#0888ff;border-radius:3px;"></div><svg style="left:1661px;top:52px" width="13" height="12" viewBox="0 0 13 12"><path d="M12.6 0.2 L0.2 5.6 L3.8 7.2 L10 2.6 L5.2 8 L4.6 11.8 L6.9 9 L10.2 10.4 Z" fill="#fff"/></svg><div class="t " style="left:1678px;top:48.0px;font-size:12px;color:#fff;line-height:20px;height:20px;font-weight:bold;">发布</div><div class="a" style="left:1726px;top:45px;width:81px;height:27px;background:#1f1f1f;border:1px solid #2c2c2c;border-radius:3px;"></div><svg style="left:1738px;top:53px" width="13" height="12" viewBox="0 0 13 12"><path d="M12.6 0.2 L0.2 5.6 L3.8 7.2 L10 2.6 L5.2 8 L4.6 11.8 L6.9 9 L10.2 10.4 Z" fill="#cfcfcf"/></svg><div class="t " style="left:1756px;top:48.5px;font-size:12px;color:#d8d8d8;line-height:20px;height:20px;">云托管</div><div class="a" style="left:1816px;top:45px;width:87px;height:27px;background:#1f1f1f;border:1px solid #2c2c2c;border-radius:3px;"></div><svg style="left:1828px;top:53px" width="12" height="12" viewBox="0 0 12 12"><path class="ic" d="M0.6 3.5 V0.6 H3.5 M8.5 0.6 H11.4 V3.5 M11.4 8.5 V11.4 H8.5 M3.5 11.4 H0.6 V8.5"/></svg><div class="t " style="left:1846px;top:48.5px;font-size:13px;color:#e0e0e0;line-height:20px;height:20px;">预览</div><svg style="left:1885.5px;top:56.0px" width="11" height="6" viewBox="0 0 11 6"><path d="M0.5 0.5 L5.5 5.3 L10.5 0.5" fill="none" stroke="#e0e0e0" stroke-width="1.4" stroke-linecap="round" stroke-linejoin="round"/></svg><div class="a" style="left:4px;top:77px;width:200px;height:916px;background:#141416;"></div><div class="a" style="left:4px;top:77px;width:200px;height:40px;background:#1f1f1f;"></div><svg style="left:10px;top:90px" width="15" height="14" viewBox="0 0 15 14"><path d="M7.5 1 L14 5 L7.5 9 L1 5 Z" fill="none" stroke="#f0f0f0" stroke-width="1.4" stroke-linejoin="round"/><path d="M1 8.2 L7.5 12.2 L14 8.2" fill="none" stroke="#f0f0f0" stroke-width="1.4" stroke-linejoin="round" stroke-linecap="round"/></svg><div class="t " style="left:29px;top:87.0px;font-size:12px;color:#f4f4f4;line-height:20px;height:20px;font-weight:bold;">看板图层</div><svg style="left:181px;top:91px" width="14" height="13" viewBox="0 0 14 13"><path class="ic" d="M0.8 0.8 H13.2 L8.3 6.5 V12.2 L5.7 10.5 V6.5 Z"/></svg><svg style="left:8px;top:129px" width="7" height="5" viewBox="0 0 7 5"><path d="M0 0 H7 L3.5 5 Z" fill="#b8b8b8"/></svg><svg style="left:22px;top:126px" width="12" height="12" viewBox="0 0 12 12"><path d="M0.5 1 H11.5 M1.5 1 V7.8 H10.5 V1 M3.5 7.8 L2.5 11 M8.5 7.8 L9.5 11" fill="none" stroke="#d8d8d8" stroke-width="1.2" stroke-linecap="round"/></svg><div class="t " style="left:42px;top:122.0px;font-size:13.5px;color:#d8d8d8;line-height:20px;height:20px;">子看板1</div><svg style="left:34px;top:155px" width="12" height="9" viewBox="0 0 12 9"><path d="M0 1.2 L3.4 0 V7.8 L0 9 Z M4.2 0 L7.6 1.2 V9 L4.2 7.8 Z M8.4 1.2 L12 0 V7.8 L8.4 9 Z" fill="#b0b0b0"/></svg><div class="t " style="left:50px;top:150.0px;font-size:13.5px;color:#d8d8d8;line-height:20px;height:20px;letter-spacing:.25px;">GIS电子地图（基础）</div><svg style="left:34px;top:182px" width="12" height="11" viewBox="0 0 12 11"><path d="M0 6 L2.5 4.5 V10 L0 9 Z M3.2 3 L6 1.5 V10.5 L3.2 10 Z M6.8 0 L9.5 1.5 V9 L6.8 10.5 Z M10 4 L12 5 V8 L10 9 Z" fill="#a8a8a8"/></svg><div class="t " style="left:50px;top:178.0px;font-size:13.5px;color:#d8d8d8;line-height:20px;height:20px;">3D空场景</div><svg style="left:180px;top:182px" width="13" height="11" viewBox="0 0 13 11"><path d="M0.5 5 C3 0.8 10 0.8 12.5 5 C10 9.2 3 9.2 0.5 5 Z" fill="#c8c8c8"/><circle cx="6.5" cy="5" r="2" fill="#141416"/><path d="M2.5 0.8 L11 10" stroke="#141416" stroke-width="2.2"/><path d="M3 0.5 L11.5 9.8" stroke="#c8c8c8" stroke-width="1.2"/></svg><div class="a" style="left:1620px;top:77px;width:300px;height:916px;background:#141416;"></div><div class="a" style="left:1620px;top:77px;width:1px;height:916px;background:#1b1b1d;"></div><div class="a" style="left:1620px;top:115px;width:300px;height:1px;background:#232325;"></div><svg style="left:1633px;top:89px" width="11" height="13" viewBox="0 0 11 13"><path d="M1.2 0.6 H9.8 Q10.4 0.6 10.4 1.2 V11.8 Q10.4 12.4 9.8 12.4 H1.2 Q0.6 12.4 0.6 11.8 V1.2 Q0.6 0.6 1.2 0.6 Z M3 3 H8.5 M3 5.2 H8.5 M3 7.4 H8.5 M3 9.6 H8.5 M4.5 3 V9.6" fill="none" stroke="#a0a0a0" stroke-width="1"/></svg><div class="t " style="left:1646px;top:86.0px;font-size:12px;color:#f4f4f4;line-height:20px;height:20px;font-weight:bold;">子看板1</div><div class="t " style="left:1638px;top:123.5px;font-size:12px;color:#f0f0f0;line-height:20px;height:20px;font-weight:bold;">样式</div><div class="t " style="left:1678px;top:123.5px;font-size:12px;color:#f0f0f0;line-height:20px;height:20px;font-weight:bold;">交互</div><div class="t " style="left:1718px;top:123.5px;font-size:12px;color:#f0f0f0;line-height:20px;height:20px;font-weight:bold;">数据</div><div class="t " style="left:1758px;top:123.5px;font-size:12px;color:#f0f0f0;line-height:20px;height:20px;font-weight:bold;">代码</div><div class="a" style="left:1630px;top:149px;width:40px;height:3px;background:#0888ff;"></div><div class="a" style="left:1824px;top:122px;width:80px;height:24px;background:#1f1f1f;border-radius:3px;"></div><div class="t " style="left:1832px;top:124.0px;font-size:12px;color:#f0f0f0;line-height:20px;height:20px;font-weight:bold;">默认状态</div><svg style="left:1887.0px;top:131.5px" width="10" height="6" viewBox="0 0 10 6"><path d="M0.5 0.5 L5.0 5.3 L9.5 0.5" fill="none" stroke="#f0f0f0" stroke-width="1.5" stroke-linecap="round" stroke-linejoin="round"/></svg><div class="a" style="left:1620px;top:153px;width:300px;height:36px;background:#1f1f1f;"></div><svg style="left:1633px;top:168.5px" width="9" height="6" viewBox="0 0 9 6"><path d="M0 0 H9 L4.5 6 Z" fill="#f0f0f0"/></svg><div class="t " style="left:1650px;top:161.0px;font-size:12px;color:#f0f0f0;line-height:20px;height:20px;font-weight:bold;">基本设置</div><svg style="left:1900px;top:162.0px" width="4" height="16" viewBox="0 0 4 16"><circle cx="2" cy="2.2" r="1.5" fill="#e8e8e8"/><circle cx="2" cy="8" r="1.5" fill="#e8e8e8"/><circle cx="2" cy="13.8" r="1.5" fill="#e8e8e8"/></svg><div class="t " style="left:1625px;top:196.0px;font-size:12px;color:#e0e0e0;line-height:20px;height:20px;">子看板尺寸</div><div class="a" style="left:1725px;top:195px;width:91px;height:22px;background:#1c1c1e;border:1px solid #3a3a3a;border-radius:2px;"></div><div class="a" style="left:1819px;top:195px;width:91px;height:22px;background:#1c1c1e;border:1px solid #3a3a3a;border-radius:2px;"></div><div class="t " style="left:1731px;top:196.5px;font-size:12px;color:#e4e4e4;line-height:20px;height:20px;font-weight:bold;"><span class="n">1920</span></div><div class="t " style="left:1825px;top:196.5px;font-size:12px;color:#e4e4e4;line-height:20px;height:20px;font-weight:bold;"><span class="n">1080</span></div><div class="t " style="left:1799px;top:196.0px;font-size:11px;color:#909090;line-height:20px;height:20px;">px</div><div class="t " style="left:1893px;top:196.0px;font-size:11px;color:#909090;line-height:20px;height:20px;">px</div><div class="t " style="left:1625px;top:230.0px;font-size:12px;color:#e0e0e0;line-height:20px;height:20px;">全屏显示模式</div><div class="a" style="left:1725px;top:228px;width:185px;height:24px;background:#1c1c1e;border:1px solid #3a3a3a;border-radius:2px;"></div><div class="t " style="left:1732px;top:230.0px;font-size:12px;color:#d8d8d8;line-height:20px;height:20px;letter-spacing:-.1px;">等比缩放（长边填充，短...</div><svg style="left:1890.0px;top:238.0px" width="10" height="5" viewBox="0 0 10 5"><path d="M0.5 0.5 L5.0 4.3 L9.5 0.5" fill="none" stroke="#a0a0a0" stroke-width="1.2" stroke-linecap="round" stroke-linejoin="round"/></svg><div class="t " style="left:1625px;top:264.0px;font-size:12px;color:#e0e0e0;line-height:20px;height:20px;">填充颜色</div><svg style="left:1676px;top:267px" width="13" height="13" viewBox="0 0 13 13"><circle cx="6.5" cy="6.5" r="5.6" fill="none" stroke="#c8c8c8" stroke-width="1"/><path d="M4.7 5.2 C4.7 2.8 8.3 2.8 8.3 5 C8.3 6.4 6.5 6.3 6.5 7.8" fill="none" stroke="#c8c8c8" stroke-width="1"/><circle cx="6.5" cy="9.6" r=".7" fill="#c8c8c8"/></svg><div class="a" style="left:1725px;top:262px;width:40px;height:24px;background:#1c1c1e;border:1px solid #4a4a4a;border-radius:3px;"></div><div class="a" style="left:1731px;top:267px;width:15px;height:15px;background:#000;"></div><svg style="left:1749px;top:272px" width="9" height="6" viewBox="0 0 9 6"><path d="M0 0 H9 L4.5 6 Z" fill="#e8e8e8"/></svg><div class="t " style="left:1625px;top:298.0px;font-size:12px;color:#e0e0e0;line-height:20px;height:20px;">内部组件布局</div><div class="a" style="left:1725px;top:297px;width:185px;height:23px;background:#1c1c1e;border:1px solid #3a3a3a;"></div><div class="a" style="left:1725px;top:297px;width:93px;height:23px;background:#0888ff;"></div><div class="t" style="left:1726.0px;width:90px;text-align:center;top:298.5px;font-size:11px;color:#fff;line-height:20px;height:20px;font-weight:bold;">静态布局</div><div class="t" style="left:1818.0px;width:90px;text-align:center;top:298.5px;font-size:11px;color:#e0e0e0;line-height:20px;height:20px;">流式布局</div><div class="a" style="left:1620px;top:326px;width:300px;height:36px;background:#1f1f1f;"></div><svg style="left:1635px;top:339.5px" width="6" height="9" viewBox="0 0 6 9"><path d="M0 0 L6 4.5 L0 9 Z" fill="#5a5a5a"/></svg><div class="t " style="left:1650px;top:334.0px;font-size:12px;color:#5a5a5a;line-height:20px;height:20px;">子看板轮播</div><svg style="left:1900px;top:335.0px" width="4" height="16" viewBox="0 0 4 16"><circle cx="2" cy="2.2" r="1.5" fill="#5a5a5a"/><circle cx="2" cy="8" r="1.5" fill="#5a5a5a"/><circle cx="2" cy="13.8" r="1.5" fill="#5a5a5a"/></svg><svg style="left:1865px;top:339.0px" width="26" height="13" viewBox="0 0 26 13"><rect x="6" y="2.5" width="19" height="8" rx="4" fill="#3c3c3c"/><circle cx="6.5" cy="6.5" r="6" fill="#191919" stroke="#8c8c8c" stroke-width="1"/><circle cx="6.5" cy="6.5" r="2.2" fill="none" stroke="#e4e4e4" stroke-width="1.5"/></svg><svg style="left:1717px;top:337px" width="12" height="12" viewBox="0 0 13 13"><circle cx="6.5" cy="6.5" r="5.6" fill="none" stroke="#555" stroke-width="1"/><path d="M4.7 5.2 C4.7 2.8 8.3 2.8 8.3 5 C8.3 6.4 6.5 6.3 6.5 7.8" fill="none" stroke="#555" stroke-width="1"/><circle cx="6.5" cy="9.6" r=".7" fill="#555"/></svg><div class="a" style="left:1620px;top:362px;width:300px;height:1px;background:#2a2a2a;"></div><div class="a" style="left:1620px;top:363px;width:300px;height:36px;background:#1f1f1f;"></div><svg style="left:1635px;top:376.5px" width="6" height="9" viewBox="0 0 6 9"><path d="M0 0 L6 4.5 L0 9 Z" fill="#5a5a5a"/></svg><div class="t " style="left:1650px;top:371.0px;font-size:12px;color:#5a5a5a;line-height:20px;height:20px;">背景设置</div><svg style="left:1900px;top:372.0px" width="4" height="16" viewBox="0 0 4 16"><circle cx="2" cy="2.2" r="1.5" fill="#5a5a5a"/><circle cx="2" cy="8" r="1.5" fill="#5a5a5a"/><circle cx="2" cy="13.8" r="1.5" fill="#5a5a5a"/></svg><svg style="left:1865px;top:376.0px" width="26" height="13" viewBox="0 0 26 13"><rect x="6" y="2.5" width="19" height="8" rx="4" fill="#3c3c3c"/><circle cx="6.5" cy="6.5" r="6" fill="#191919" stroke="#8c8c8c" stroke-width="1"/><circle cx="6.5" cy="6.5" r="2.2" fill="none" stroke="#e4e4e4" stroke-width="1.5"/></svg><div class="a" style="left:1620px;top:399px;width:300px;height:1px;background:#2a2a2a;"></div><div class="a" style="left:1620px;top:400px;width:300px;height:36px;background:#1f1f1f;"></div><svg style="left:1633px;top:415.5px" width="9" height="6" viewBox="0 0 9 6"><path d="M0 0 H9 L4.5 6 Z" fill="#f0f0f0"/></svg><div class="t " style="left:1650px;top:408.0px;font-size:12px;color:#f0f0f0;line-height:20px;height:20px;font-weight:bold;">封面设置</div><svg style="left:1900px;top:409.0px" width="4" height="16" viewBox="0 0 4 16"><circle cx="2" cy="2.2" r="1.5" fill="#e8e8e8"/><circle cx="2" cy="8" r="1.5" fill="#e8e8e8"/><circle cx="2" cy="13.8" r="1.5" fill="#e8e8e8"/></svg><div class="t " style="left:1625px;top:443.0px;font-size:12px;color:#e0e0e0;line-height:20px;height:20px;">封面</div><div class="a" style="left:1710px;top:441px;width:200px;height:122px;background:#07080d;"></div><div class="a" style="left:1710px;top:573px;width:200px;height:32px;background:#161618;border:1px solid #5a5a5a;"></div><div class="t" style="left:1760.0px;width:100px;text-align:center;top:579.0px;font-size:13px;color:#e8e8e8;line-height:20px;height:20px;">截屏</div><div class="a" style="left:4px;top:993px;width:1916px;height:39px;background:#141416;"></div><div class="a" style="left:204px;top:993px;width:1416px;height:39px;background:#1f1f1f;"></div><div class="a" style="left:382px;top:993px;width:1px;height:39px;background:#151515;"></div><div class="a" style="left:510px;top:993px;width:1px;height:39px;background:#151515;"></div><div class="a" style="left:637px;top:993px;width:1px;height:39px;background:#2a2a2a;"></div><div class="a" style="left:670px;top:993px;width:1px;height:39px;background:#2a2a2a;"></div><div class="a" style="left:797px;top:993px;width:1px;height:39px;background:#2a2a2a;"></div><div class="a" style="left:383px;top:993px;width:127px;height:39px;background:#1c1c1c;"></div><div class="a" style="left:383px;top:993px;width:127px;height:1px;background:#0888ff;"></div><svg style="left:265px;top:1008px" width="12" height="12" viewBox="0 0 12 12"><rect x=".6" y=".6" width="10.8" height="10.8" rx="1.5" fill="none" stroke="#a07a5a" stroke-width="1.2"/><path d="M1 7 L7 1 M1.5 11 L11 1.5 M5 11 L11 5" stroke="#a07a5a" stroke-width="1.2" fill="none"/></svg><div class="t " style="left:282px;top:1005.0px;font-size:12px;color:#f0f0f0;line-height:20px;height:20px;font-weight:bold;">前景看板</div><svg style="left:393px;top:1009px" width="12" height="12" viewBox="0 0 12 12"><path d="M0.5 1 H11.5 M1.5 1 V7.8 H10.5 V1 M3.5 7.8 L2.5 11 M8.5 7.8 L9.5 11" fill="none" stroke="#0888ff" stroke-width="1.2" stroke-linecap="round"/></svg><div class="t " style="left:410px;top:1005.0px;font-size:12px;color:#0888ff;line-height:20px;height:20px;">子看板1</div><svg style="left:521px;top:1009px" width="12" height="12" viewBox="0 0 12 12"><path d="M0.5 1 H11.5 M1.5 1 V7.8 H10.5 V1 M3.5 7.8 L2.5 11 M8.5 7.8 L9.5 11" fill="none" stroke="#d0d0d0" stroke-width="1.2" stroke-linecap="round"/></svg><div class="t " style="left:538px;top:1005.0px;font-size:12px;color:#f0f0f0;line-height:20px;height:20px;font-weight:bold;">子看板2</div><svg style="left:648px;top:1007px" width="13" height="13" viewBox="0 0 13 13"><path d="M6.5 0.5 V12.5 M0.5 6.5 H12.5" stroke="#fff" stroke-width="1.8" fill="none"/></svg><svg style="left:682px;top:1008px" width="12" height="12" viewBox="0 0 12 12"><rect x=".6" y=".6" width="10.8" height="10.8" rx="1.5" fill="none" stroke="#a07a5a" stroke-width="1.2"/><path d="M1 7 L7 1 M1.5 11 L11 1.5 M5 11 L11 5" stroke="#a07a5a" stroke-width="1.2" fill="none"/></svg><div class="t " style="left:699px;top:1005.0px;font-size:12px;color:#f0f0f0;line-height:20px;height:20px;font-weight:bold;">背景看板</div><div class="t " style="left:1505px;top:1003.0px;font-size:12px;color:#d8d8d8;line-height:20px;height:20px;font-weight:bold;"><span class="n">69.84%</span></div><svg style="left:1551px;top:1005px" width="15" height="15" viewBox="0 0 15 15"><rect x=".5" y=".5" width="14" height="14" fill="none" stroke="#d8d8d8" stroke-width="1"/><path d="M7.5 2 V13 M2 7.5 H13 M5.8 3.8 L7.5 2 L9.2 3.8 M5.8 11.2 L7.5 13 L9.2 11.2 M3.8 5.8 L2 7.5 L3.8 9.2 M11.2 5.8 L13 7.5 L11.2 9.2" fill="none" stroke="#f0f0f0" stroke-width="1.3"/></svg><div class="a" style="left:1570px;top:1000px;width:1px;height:26px;background:#2a2a2a;"></div><svg style="left:1574px;top:1007px" width="18" height="11" viewBox="0 0 18 11"><rect x=".6" y=".6" width="16.8" height="9.8" rx="2" fill="none" stroke="#e0e0e0" stroke-width="1.2"/><path d="M3 3.5 H4.5 M6 3.5 H7.5 M9 3.5 H10.5 M12 3.5 H13.5 M14.5 3.5 H15.2 M3 5.8 H4.5 M6 5.8 H7.5 M9 5.8 H10.5 M12 5.8 H13.5 M4 8 H14" stroke="#e0e0e0" stroke-width="1.2"/></svg><div class="a" style="left:1596px;top:1000px;width:1px;height:26px;background:#2a2a2a;"></div><svg style="left:1599px;top:1005px" width="16" height="15" viewBox="0 0 16 15"><rect x=".6" y=".6" width="14.8" height="13.8" fill="#3a3a3a" stroke="#d8d8d8" stroke-width="1.2"/><path d="M3.5 4 L7 7 L3.5 10 M8 10.5 H12" fill="none" stroke="#fff" stroke-width="1.3"/></svg><div class="t " style="left:1623px;top:992.0px;font-size:12px;color:#c8c8c8;line-height:20px;height:20px;">内存：<span class="n" style="margin-left:5px">494 / 7744 / 8240 MB&nbsp; 198 / 692 MB</span></div><div class="t" style="right:3px;top:992.0px;font-size:12px;color:#c8c8c8;line-height:20px;height:20px;"><span class="nr">FPS： 60</span></div><div class="t " style="left:1623px;top:1013.0px;font-size:12px;color:#c8c8c8;line-height:20px;height:20px;">组件数<span class="n">: 2 / 2</span></div><div class="t" style="right:3px;top:1013.0px;font-size:12px;color:#c8c8c8;line-height:20px;height:20px;"><span class="nr">4.7.0</span></div><div class="a" style="left:204px;top:77px;width:718px;height:631px;background:#141416;box-shadow:0 2px 14px rgba(0,0,0,.55);"></div><div class="a" style="left:204px;top:77px;width:186px;height:631px;background:#1f1f1f;"></div><div class="a" style="left:390px;top:77px;width:532px;height:40px;background:#1f1f1f;"></div><div class="a" style="left:214px;top:81px;width:168px;height:32px;background:#1b1b1b;border:1px solid #484848;border-radius:2px;"></div><svg style="left:230px;top:90px" width="13" height="14" viewBox="0 0 13 14"><circle cx="6" cy="6" r="5" fill="none" stroke="#b8b8b8" stroke-width="1.1"/><path d="M9.6 9.8 L11.8 12.4" stroke="#b8b8b8" stroke-width="1.1"/></svg><div class="t " style="left:251px;top:87.5px;font-size:12px;color:#707070;line-height:20px;height:20px;">搜索组件</div><div class="a" style="left:391px;top:77px;width:127px;height:40px;background:#0888ff;"></div><div class="t" style="left:424.0px;width:60px;text-align:center;top:87.0px;font-size:14px;color:#fff;line-height:20px;height:20px;">深色</div><div class="t" style="left:551.0px;width:60px;text-align:center;top:87.0px;font-size:14px;color:#d8d8d8;line-height:20px;height:20px;">浅色</div><div class="t" style="left:673.0px;width:70px;text-align:center;top:87.0px;font-size:14px;color:#d8d8d8;line-height:20px;height:20px;">资产库</div><svg style="left:865px;top:90px" width="14" height="14" viewBox="0 0 14 14"><path d="M12.3 5.2 A5.6 5.6 0 0 0 2 4.2 M1.7 8.8 A5.6 5.6 0 0 0 12 9.8" fill="none" stroke="#d0d0d0" stroke-width="1.1"/><path d="M12.6 1.8 V5.4 H9.2 M1.4 12.2 V8.6 H4.8" fill="none" stroke="#d0d0d0" stroke-width="1.1"/></svg><svg style="left:895px;top:90px" width="14" height="14" viewBox="0 0 14 14"><path d="M8.2 1 H2 Q1 1 1 2 V12 Q1 13 2 13 H12 Q13 13 13 12 V6.5" fill="none" stroke="#d0d0d0" stroke-width="1.1"/><circle cx="11.6" cy="2.4" r="1.7" fill="none" stroke="#d0d0d0" stroke-width="1"/><path d="M3.5 10.5 L8.5 5.5 M5.5 5.2 H8.8 V8.5" fill="none" stroke="#d0d0d0" stroke-width="1.1"/></svg><svg style="left:220px;top:133.5px" width="18" height="18" viewBox="0 0 18 18"><rect x="0" y="0" width="8" height="8" fill="#6e6e6e"/><rect x="10" y="0" width="8" height="8" fill="#b4b4b4"/><rect x="12.5" y="2.5" width="3" height="3" fill="#1f1f1f"/><rect x="0" y="10" width="8" height="8" fill="#b4b4b4"/><rect x="10" y="10" width="8" height="8" fill="#7c7c7c"/></svg><div class="t " style="left:245px;top:132.5px;font-size:14px;color:#e0e0e0;line-height:20px;height:20px;">全部</div><div class="t" style="right:1540px;top:133.0px;font-size:14px;color:#b4b4b4;line-height:20px;height:20px;font-weight:bold;"><span class="nr" style="transform:scaleX(.76)">1098</span></div><svg style="left:220px;top:185.5px" width="18" height="18" viewBox="0 0 18 18"><rect x="0" y="16" width="18" height="2" fill="#8c8c8c"/><rect x="1.5" y="8" width="2.6" height="7.5" fill="#b4b4b4"/><rect x="5.3" y="1" width="2.6" height="14.5" fill="#b4b4b4"/><rect x="9.1" y="5" width="2.6" height="10.5" fill="#8c8c8c"/><rect x="12.9" y="8" width="2.6" height="7.5" fill="#b4b4b4"/></svg><div class="t " style="left:245px;top:184.5px;font-size:14px;color:#e0e0e0;line-height:20px;height:20px;">图表</div><div class="t" style="right:1540px;top:185.0px;font-size:14px;color:#b4b4b4;line-height:20px;height:20px;font-weight:bold;"><span class="nr" style="transform:scaleX(.76)">81</span></div><svg style="left:220px;top:237.5px" width="18" height="18" viewBox="0 0 18 18"><path d="M1 14 L0.5 7 L5 10 L9 2 L13 10 L17.5 7 L17 14 Z" fill="#b4b4b4"/><rect x="0.5" y="15.5" width="17" height="2" fill="#8c8c8c"/></svg><div class="t " style="left:245px;top:236.5px;font-size:14px;color:#e0e0e0;line-height:20px;height:20px;">文本</div><div class="t" style="right:1540px;top:237.0px;font-size:14px;color:#b4b4b4;line-height:20px;height:20px;font-weight:bold;"><span class="nr" style="transform:scaleX(.76)">11</span></div><svg style="left:220px;top:289.5px" width="18" height="18" viewBox="0 0 18 18"><circle cx="5" cy="3.5" r="2.6" fill="#8c8c8c"/><circle cx="10.5" cy="3" r="3" fill="#b4b4b4"/><rect x="0.5" y="6.5" width="13.5" height="11" rx="1.5" fill="#b4b4b4"/><path d="M14.5 10 L18 8 V16 L14.5 14 Z" fill="#8c8c8c"/><path d="M5 9 L10 12 L5 15 Z" fill="#6a6a6a"/></svg><div class="t " style="left:245px;top:288.5px;font-size:14px;color:#e0e0e0;line-height:20px;height:20px;">媒体</div><div class="t" style="right:1540px;top:289.0px;font-size:14px;color:#b4b4b4;line-height:20px;height:20px;font-weight:bold;"><span class="nr" style="transform:scaleX(.76)">7</span></div><svg style="left:220px;top:341.5px" width="18" height="18" viewBox="0 0 18 18"><rect x="2.5" y="1" width="15.5" height="14" rx="2" fill="#6a6a6a"/><rect x="0" y="2.5" width="16" height="14.5" rx="2" fill="#8a8a8a"/><path d="M2.5 6.5 H4.5 M6 6.5 H13.5 M2.5 9.8 H4.5 M6 9.8 H13.5 M2.5 13 H4.5 M6 13 H13.5" stroke="#2a2a2a" stroke-width="1.7"/></svg><div class="t " style="left:245px;top:340.5px;font-size:14px;color:#e0e0e0;line-height:20px;height:20px;">控件</div><div class="t" style="right:1540px;top:341.0px;font-size:14px;color:#b4b4b4;line-height:20px;height:20px;font-weight:bold;"><span class="nr" style="transform:scaleX(.76)">22</span></div><div class="a" style="left:206px;top:378px;width:184px;height:52px;background:#0888ff;"></div><svg style="left:220px;top:393.5px" width="18" height="18" viewBox="0 0 18 18"><path d="M0 2 L6 0 L12 2 L18 0 V16 L12 18 L6 16 L0 18 Z" fill="#9fd0ff"/><path d="M6 0 L12 2 V18 L6 16 Z" fill="#c4e2ff"/><path d="M2.5 7 L5 5 L7 6.5 L10 6 L11.5 4.5 L14.5 5.5 L13 8 L14.5 10 L12 12.5 L9.5 12 L8.5 13 L6.5 11 L4 10.5 Z" fill="#fff"/></svg><div class="t " style="left:245px;top:392.5px;font-size:14px;color:#fff;line-height:20px;height:20px;">地图</div><div class="t" style="right:1540px;top:393.0px;font-size:14px;color:#fff;line-height:20px;height:20px;font-weight:bold;"><span class="nr" style="transform:scaleX(.76)">15</span></div><svg style="left:220px;top:445.5px" width="18" height="18" viewBox="0 0 18 18"><path d="M9 0.5 L17 4.5 L9 8.5 L1 4.5 Z" fill="#a0a0a0"/><path d="M1 4.5 L9 8.5 V17.5 L1 13.5 Z" fill="#b8b8b8"/><path d="M17 4.5 L9 8.5 V17.5 L17 13.5 Z" fill="#808080"/></svg><div class="t " style="left:245px;top:444.5px;font-size:14px;color:#e0e0e0;line-height:20px;height:20px;font-weight:bold;"><span class="n" style="transform:scaleX(.9)">3D</span></div><div class="t" style="right:1540px;top:445.0px;font-size:14px;color:#b4b4b4;line-height:20px;height:20px;font-weight:bold;"><span class="nr" style="transform:scaleX(.76)">21</span></div><svg style="left:220px;top:497.5px" width="18" height="18" viewBox="0 0 18 18"><path d="M1 6 C1 1 9 0 13 3 C17 6 19 12 16 16 C14 18 11 15 8 12 C5 10 1 10 1 6 Z" fill="#a8a8a8"/><path d="M1 7 C3 12 8 12 11 17 C8 17 5 14 3 12 C1 10 0.5 9 1 7 Z" fill="#7a7a7a"/></svg><div class="t " style="left:245px;top:496.5px;font-size:14px;color:#e0e0e0;line-height:20px;height:20px;">拓扑</div><div class="t" style="right:1540px;top:497.0px;font-size:14px;color:#b4b4b4;line-height:20px;height:20px;font-weight:bold;"><span class="nr" style="transform:scaleX(.76)">171</span></div><svg style="left:220px;top:549.5px" width="18" height="18" viewBox="0 0 18 18"><path d="M5.5 1 C7 3 11 3 12.5 1 L18 4.5 L15.5 9 L13.5 8 V17 H4.5 V8 L2.5 9 L0 4.5 Z" fill="#a0a0a0"/><path d="M5.5 1 C7 3 11 3 12.5 1 L13.5 8 V17 H9 V3 Z" fill="#7e7e7e" opacity=".6"/></svg><div class="t " style="left:245px;top:548.5px;font-size:14px;color:#e0e0e0;line-height:20px;height:20px;">套件</div><div class="t" style="right:1540px;top:549.0px;font-size:14px;color:#b4b4b4;line-height:20px;height:20px;font-weight:bold;"><span class="nr" style="transform:scaleX(.76)">770</span></div><svg style="left:220px;top:601.5px" width="18" height="18" viewBox="0 0 18 18"><path d="M2 4 H6 C5 1 10 1 9 4 H13.5 V8 C16.5 7 16.5 12 13.5 11 V16.5 H9.5 C10.5 13.5 5.5 13.5 6.5 16.5 H2 V12 C-1 13 -1 8 2 9 Z" fill="#a8a8a8"/></svg><div class="t " style="left:245px;top:600.5px;font-size:14px;color:#e0e0e0;line-height:20px;height:20px;">本地</div><div class="t" style="right:1540px;top:601.0px;font-size:14px;color:#b4b4b4;line-height:20px;height:20px;font-weight:bold;"><span class="nr" style="transform:scaleX(.76)">0</span></div><div class="t " style="left:400px;top:132.0px;font-size:14px;color:#1890ff;line-height:20px;height:20px;">全部</div><div class="t " style="left:444px;top:132.0px;font-size:14px;color:#e6e6e6;line-height:20px;height:20px;">轮廓地图</div><div class="t " style="left:516px;top:132.0px;font-size:14px;color:#e6e6e6;line-height:20px;height:20px;">瓦片地图</div><div class="t " style="left:588px;top:132.0px;font-size:14px;color:#e6e6e6;line-height:20px;height:20px;">三维地图</div><svg width="0" height="0" style="left:0;top:0"><defs><filter id="tb2"><feGaussianBlur stdDeviation="2.5"/></filter><filter id="tb1"><feGaussianBlur stdDeviation="1"/></filter><filter id="tb5"><feGaussianBlur stdDeviation="5"/></filter></defs></svg><svg style="left:403px;top:174px;overflow:hidden" width="160" height="90" viewBox="0 0 160 90"><rect width="160" height="90" fill="#000"/><path d="M24.8 40.1 L35.7 27.3 L41.2 22.8 L48.5 18.2 L54.9 22.8 L55.8 27.3 L64.9 32.8 L77.7 34.6 L90.4 30.1 L97.7 26.4 L101.3 21.9 L97.7 18.2 L105.0 10.9 L110.5 7.8 L117.8 10.9 L119.6 18.2 L126.9 20.1 L131.4 19.7 L126.9 27.3 L121.4 32.8 L115.9 35.5 L110.5 38.3 L105.0 41.9 L108.6 45.6 L105.0 49.2 L108.6 54.7 L109.6 62.0 L106.8 69.3 L101.3 74.7 L94.1 80.2 L86.8 82.0 L79.5 80.2 L72.2 82.0 L68.5 78.4 L66.7 71.1 L63.1 65.6 L55.8 69.3 L46.7 65.6 L37.6 62.0 L32.1 52.9 L28.4 47.4 Z" fill="#2196f3"/><path d="M84 88 L86 84 L89 85 L87 89 Z M105 77 L107 74 L108 78 L106 80 Z" fill="#2196f3"/><g fill="none" stroke="#6bb8f7" stroke-width=".4" opacity=".8"><path d="M52 48 L60 40 L66 38 L72 42 L80 44 L84 50 L80 58 L82 66 L76 72 M60 40 L58 52 L64 58 L72 58 L80 58 M84 50 L92 46 L98 50 L104 48 M92 46 L96 38 L104 36 M98 50 L96 58 L100 66 L96 72 M88 60 L96 58 M112 22 L114 30 L120 28"/></g><rect x="117.500" y="76.500" width="7" height="11" fill="none" stroke="#555" stroke-width=".6"/><rect x=".5" y=".5" width="159" height="89" fill="none" stroke="#5c5c5c" stroke-width="1"/></svg><div class="t" style="left:398.0px;width:170px;text-align:center;top:269.5px;font-size:12px;color:#e8e8e8;line-height:20px;height:20px;letter-spacing:-.2px;">中国地图</div><svg style="left:576px;top:174px;overflow:hidden" width="160" height="90" viewBox="0 0 160 90"><rect width="160" height="90" fill="#000"/><path d="M7.5 22.8 L12.0 21.0 L19.3 20.1 L28.4 18.2 L37.6 17.3 L46.7 18.2 L54.0 21.0 L57.6 25.5 L54.0 30.1 L55.8 33.7 L52.1 36.5 L46.7 39.2 L43.9 43.7 L41.2 47.4 L44.8 51.0 L40.3 50.1 L36.6 45.6 L33.0 40.1 L30.3 34.6 L28.4 30.1 L23.0 26.4 L17.5 26.4 L12.0 25.5 L8.4 24.6 Z M54.0 16.4 L61.2 14.6 L70.4 15.5 L72.2 18.2 L66.7 22.8 L61.2 25.5 L56.7 21.9 Z M40.3 50.1 L44.8 51.0 L48.5 53.8 L46.7 54.7 L42.1 52.9 Z M46.7 54.7 L52.1 52.9 L57.6 55.6 L63.1 59.2 L64.0 63.8 L59.4 69.3 L55.8 76.6 L53.0 82.9 L50.3 86.6 L48.9 82.0 L48.9 72.9 L47.6 65.6 L44.8 60.2 Z M79.5 27.3 L83.1 22.8 L88.6 20.1 L94.1 18.2 L95.9 22.8 L92.2 27.3 L95.9 30.1 L90.4 33.7 L86.8 34.6 L81.3 35.5 L77.7 34.6 L78.6 31.0 Z M73.1 43.7 L77.7 39.2 L84.9 38.3 L92.2 40.1 L95.9 43.7 L98.6 51.0 L103.2 52.0 L99.5 58.3 L95.9 63.8 L94.1 71.1 L90.4 76.6 L86.8 75.6 L84.9 67.4 L83.1 60.2 L77.7 54.7 L73.1 51.0 Z M94.1 18.2 L103.2 16.4 L114.1 14.6 L128.7 16.4 L143.3 20.1 L150.6 21.9 L148.7 25.5 L141.5 27.3 L139.6 32.8 L136.0 31.0 L132.3 36.5 L128.7 41.9 L125.0 47.4 L121.4 51.0 L119.6 45.6 L114.1 49.2 L110.5 54.7 L107.7 49.2 L103.2 43.7 L99.5 45.6 L95.9 43.7 L92.2 40.1 L95.9 36.5 L101.3 34.6 L97.7 31.0 L95.9 30.1 L92.2 27.3 L95.9 22.8 Z M95.9 43.7 L99.5 45.6 L105.0 49.2 L102.3 52.9 L98.6 51.0 Z M119.6 54.7 L125.0 58.3 L128.7 62.0 L132.3 61.1 L136.0 62.9 L132.3 63.8 L126.9 62.9 L121.4 59.2 Z M125.0 69.3 L130.5 65.6 L136.0 64.7 L139.6 69.3 L140.0 74.7 L136.0 78.4 L128.7 76.6 L124.1 75.6 Z M146.0 78.4 L148.7 76.6 L146.9 82.0 L144.2 82.9 Z M136.9 33.7 L138.7 31.9 L137.8 38.3 L135.1 40.1 Z M77.3 28.3 L79.1 26.4 L79.5 30.1 L77.7 31.0 Z M100.4 67.4 L102.3 65.6 L101.9 71.1 L100.1 72.0 Z" fill="#2196f3" opacity="1"/><rect x=".5" y=".5" width="159" height="89" fill="none" stroke="#5c5c5c" stroke-width="1"/></svg><div class="t" style="left:571.0px;width:170px;text-align:center;top:269.5px;font-size:12px;color:#e8e8e8;line-height:20px;height:20px;letter-spacing:-.2px;">世界地图</div><svg style="left:749px;top:174px;overflow:hidden" width="160" height="90" viewBox="0 0 160 90"><rect width="160" height="90" fill="#000"/><path d="M28.1 12.3 L38.8 8.3 L58.9 10.5 L58.9 25.6 L66.5 27.5 L72.8 33.8 L70.3 35.6 L64.0 28.7 L56.4 26.2 L48.9 26.8 L43.8 30.0 L33.8 35.0 L22.4 38.8 L12.3 40.7 L23.7 36.9 L33.8 32.5 L41.3 27.5 L35.0 27.5 L28.7 24.9 L33.8 21.2 L26.2 18.0 L33.8 16.1 Z M79.1 46.3 L81.6 45.1 L115.6 45.1 L124.4 46.3 L130.7 50.1 L132.0 55.2 L138.3 52.6 L145.8 50.1 L148.4 47.6 L150.6 51.4 L147.1 56.4 L142.1 60.2 L139.5 66.5 L134.5 72.8 L132.0 77.8 L134.5 84.1 L132.6 84.1 L129.5 77.8 L123.2 75.3 L116.9 77.8 L113.1 82.9 L109.3 79.1 L105.5 77.8 L101.8 74.1 L95.5 73.4 L87.9 70.3 L82.9 64.0 L79.7 56.4 Z" fill="#2196f3"/><g fill="none" stroke="#6bb8f7" stroke-width=".35" opacity=".7"><path d="M92 52 L94 72 M104 46 L106 76 M116 46 L118 78 M128 48 L128 74 M80 56 H128 M84 66 H136 M90 74 H132"/></g><rect x=".5" y=".5" width="159" height="89" fill="none" stroke="#5c5c5c" stroke-width="1"/></svg><div class="t" style="left:744.0px;width:170px;text-align:center;top:269.5px;font-size:12px;color:#e8e8e8;line-height:20px;height:20px;letter-spacing:-.2px;">美国地图</div><svg style="left:403px;top:309px;overflow:hidden" width="160" height="90" viewBox="0 0 160 90"><defs><linearGradient id="wg1" x1="0" y1="0" x2="0" y2="1"><stop offset="0" stop-color="#e4e2cc" stop-opacity=".55"/><stop offset=".3" stop-color="#e4e0c0" stop-opacity=".8"/><stop offset=".55" stop-color="#c8c890" stop-opacity=".25"/><stop offset="1" stop-color="#88a060" stop-opacity="0"/></linearGradient><linearGradient id="wg2" x1="0" y1="0" x2="0" y2="1"><stop offset="0" stop-color="#e0d690" stop-opacity=".75"/><stop offset=".35" stop-color="#dccf80" stop-opacity=".85"/><stop offset=".6" stop-color="#a0b070" stop-opacity=".3"/><stop offset="1" stop-color="#5f8a5a" stop-opacity="0"/></linearGradient></defs><rect width="160" height="90" fill="#1b1f1f"/><ellipse cx="85" cy="40" rx="72" ry="36" fill="#2b3131" filter="url(#tb5)"/><g transform="translate(22 14) scale(.72 .72)" opacity=".6" filter="url(#tb1)"><path d="M7.5 22.8 L12.0 21.0 L19.3 20.1 L28.4 18.2 L37.6 17.3 L46.7 18.2 L54.0 21.0 L57.6 25.5 L54.0 30.1 L55.8 33.7 L52.1 36.5 L46.7 39.2 L43.9 43.7 L41.2 47.4 L44.8 51.0 L40.3 50.1 L36.6 45.6 L33.0 40.1 L30.3 34.6 L28.4 30.1 L23.0 26.4 L17.5 26.4 L12.0 25.5 L8.4 24.6 Z M54.0 16.4 L61.2 14.6 L70.4 15.5 L72.2 18.2 L66.7 22.8 L61.2 25.5 L56.7 21.9 Z M40.3 50.1 L44.8 51.0 L48.5 53.8 L46.7 54.7 L42.1 52.9 Z M46.7 54.7 L52.1 52.9 L57.6 55.6 L63.1 59.2 L64.0 63.8 L59.4 69.3 L55.8 76.6 L53.0 82.9 L50.3 86.6 L48.9 82.0 L48.9 72.9 L47.6 65.6 L44.8 60.2 Z M79.5 27.3 L83.1 22.8 L88.6 20.1 L94.1 18.2 L95.9 22.8 L92.2 27.3 L95.9 30.1 L90.4 33.7 L86.8 34.6 L81.3 35.5 L77.7 34.6 L78.6 31.0 Z M73.1 43.7 L77.7 39.2 L84.9 38.3 L92.2 40.1 L95.9 43.7 L98.6 51.0 L103.2 52.0 L99.5 58.3 L95.9 63.8 L94.1 71.1 L90.4 76.6 L86.8 75.6 L84.9 67.4 L83.1 60.2 L77.7 54.7 L73.1 51.0 Z M94.1 18.2 L103.2 16.4 L114.1 14.6 L128.7 16.4 L143.3 20.1 L150.6 21.9 L148.7 25.5 L141.5 27.3 L139.6 32.8 L136.0 31.0 L132.3 36.5 L128.7 41.9 L125.0 47.4 L121.4 51.0 L119.6 45.6 L114.1 49.2 L110.5 54.7 L107.7 49.2 L103.2 43.7 L99.5 45.6 L95.9 43.7 L92.2 40.1 L95.9 36.5 L101.3 34.6 L97.7 31.0 L95.9 30.1 L92.2 27.3 L95.9 22.8 Z M95.9 43.7 L99.5 45.6 L105.0 49.2 L102.3 52.9 L98.6 51.0 Z M119.6 54.7 L125.0 58.3 L128.7 62.0 L132.3 61.1 L136.0 62.9 L132.3 63.8 L126.9 62.9 L121.4 59.2 Z M125.0 69.3 L130.5 65.6 L136.0 64.7 L139.6 69.3 L140.0 74.7 L136.0 78.4 L128.7 76.6 L124.1 75.6 Z M146.0 78.4 L148.7 76.6 L146.9 82.0 L144.2 82.9 Z M136.9 33.7 L138.7 31.9 L137.8 38.3 L135.1 40.1 Z M77.3 28.3 L79.1 26.4 L79.5 30.1 L77.7 31.0 Z M100.4 67.4 L102.3 65.6 L101.9 71.1 L100.1 72.0 Z" fill="#0c0e0e" opacity="1"/></g><g transform="translate(22 12) scale(.72 .72)"><path d="M7.5 22.8 L12.0 21.0 L19.3 20.1 L28.4 18.2 L37.6 17.3 L46.7 18.2 L54.0 21.0 L57.6 25.5 L54.0 30.1 L55.8 33.7 L52.1 36.5 L46.7 39.2 L43.9 43.7 L41.2 47.4 L44.8 51.0 L40.3 50.1 L36.6 45.6 L33.0 40.1 L30.3 34.6 L28.4 30.1 L23.0 26.4 L17.5 26.4 L12.0 25.5 L8.4 24.6 Z M54.0 16.4 L61.2 14.6 L70.4 15.5 L72.2 18.2 L66.7 22.8 L61.2 25.5 L56.7 21.9 Z M40.3 50.1 L44.8 51.0 L48.5 53.8 L46.7 54.7 L42.1 52.9 Z M46.7 54.7 L52.1 52.9 L57.6 55.6 L63.1 59.2 L64.0 63.8 L59.4 69.3 L55.8 76.6 L53.0 82.9 L50.3 86.6 L48.9 82.0 L48.9 72.9 L47.6 65.6 L44.8 60.2 Z M79.5 27.3 L83.1 22.8 L88.6 20.1 L94.1 18.2 L95.9 22.8 L92.2 27.3 L95.9 30.1 L90.4 33.7 L86.8 34.6 L81.3 35.5 L77.7 34.6 L78.6 31.0 Z M73.1 43.7 L77.7 39.2 L84.9 38.3 L92.2 40.1 L95.9 43.7 L98.6 51.0 L103.2 52.0 L99.5 58.3 L95.9 63.8 L94.1 71.1 L90.4 76.6 L86.8 75.6 L84.9 67.4 L83.1 60.2 L77.7 54.7 L73.1 51.0 Z M94.1 18.2 L103.2 16.4 L114.1 14.6 L128.7 16.4 L143.3 20.1 L150.6 21.9 L148.7 25.5 L141.5 27.3 L139.6 32.8 L136.0 31.0 L132.3 36.5 L128.7 41.9 L125.0 47.4 L121.4 51.0 L119.6 45.6 L114.1 49.2 L110.5 54.7 L107.7 49.2 L103.2 43.7 L99.5 45.6 L95.9 43.7 L92.2 40.1 L95.9 36.5 L101.3 34.6 L97.7 31.0 L95.9 30.1 L92.2 27.3 L95.9 22.8 Z M95.9 43.7 L99.5 45.6 L105.0 49.2 L102.3 52.9 L98.6 51.0 Z M119.6 54.7 L125.0 58.3 L128.7 62.0 L132.3 61.1 L136.0 62.9 L132.3 63.8 L126.9 62.9 L121.4 59.2 Z M125.0 69.3 L130.5 65.6 L136.0 64.7 L139.6 69.3 L140.0 74.7 L136.0 78.4 L128.7 76.6 L124.1 75.6 Z M146.0 78.4 L148.7 76.6 L146.9 82.0 L144.2 82.9 Z M136.9 33.7 L138.7 31.9 L137.8 38.3 L135.1 40.1 Z M77.3 28.3 L79.1 26.4 L79.5 30.1 L77.7 31.0 Z M100.4 67.4 L102.3 65.6 L101.9 71.1 L100.1 72.0 Z" fill="#4f6a3c" opacity="1"/><path d="M7.5 22.8 L12.0 21.0 L19.3 20.1 L28.4 18.2 L37.6 17.3 L46.7 18.2 L54.0 21.0 L57.6 25.5 L54.0 30.1 L55.8 33.7 L52.1 36.5 L46.7 39.2 L43.9 43.7 L41.2 47.4 L44.8 51.0 L40.3 50.1 L36.6 45.6 L33.0 40.1 L30.3 34.6 L28.4 30.1 L23.0 26.4 L17.5 26.4 L12.0 25.5 L8.4 24.6 Z M54.0 16.4 L61.2 14.6 L70.4 15.5 L72.2 18.2 L66.7 22.8 L61.2 25.5 L56.7 21.9 Z M40.3 50.1 L44.8 51.0 L48.5 53.8 L46.7 54.7 L42.1 52.9 Z M46.7 54.7 L52.1 52.9 L57.6 55.6 L63.1 59.2 L64.0 63.8 L59.4 69.3 L55.8 76.6 L53.0 82.9 L50.3 86.6 L48.9 82.0 L48.9 72.9 L47.6 65.6 L44.8 60.2 Z M79.5 27.3 L83.1 22.8 L88.6 20.1 L94.1 18.2 L95.9 22.8 L92.2 27.3 L95.9 30.1 L90.4 33.7 L86.8 34.6 L81.3 35.5 L77.7 34.6 L78.6 31.0 Z M73.1 43.7 L77.7 39.2 L84.9 38.3 L92.2 40.1 L95.9 43.7 L98.6 51.0 L103.2 52.0 L99.5 58.3 L95.9 63.8 L94.1 71.1 L90.4 76.6 L86.8 75.6 L84.9 67.4 L83.1 60.2 L77.7 54.7 L73.1 51.0 Z M94.1 18.2 L103.2 16.4 L114.1 14.6 L128.7 16.4 L143.3 20.1 L150.6 21.9 L148.7 25.5 L141.5 27.3 L139.6 32.8 L136.0 31.0 L132.3 36.5 L128.7 41.9 L125.0 47.4 L121.4 51.0 L119.6 45.6 L114.1 49.2 L110.5 54.7 L107.7 49.2 L103.2 43.7 L99.5 45.6 L95.9 43.7 L92.2 40.1 L95.9 36.5 L101.3 34.6 L97.7 31.0 L95.9 30.1 L92.2 27.3 L95.9 22.8 Z M95.9 43.7 L99.5 45.6 L105.0 49.2 L102.3 52.9 L98.6 51.0 Z M119.6 54.7 L125.0 58.3 L128.7 62.0 L132.3 61.1 L136.0 62.9 L132.3 63.8 L126.9 62.9 L121.4 59.2 Z M125.0 69.3 L130.5 65.6 L136.0 64.7 L139.6 69.3 L140.0 74.7 L136.0 78.4 L128.7 76.6 L124.1 75.6 Z M146.0 78.4 L148.7 76.6 L146.9 82.0 L144.2 82.9 Z M136.9 33.7 L138.7 31.9 L137.8 38.3 L135.1 40.1 Z M77.3 28.3 L79.1 26.4 L79.5 30.1 L77.7 31.0 Z M100.4 67.4 L102.3 65.6 L101.9 71.1 L100.1 72.0 Z" fill="url(#wg1)" opacity="1"/></g><g fill="#e8e8e8" opacity=".75" filter="url(#tb1)"><ellipse cx="72" cy="24" rx="8" ry="2.500"/><ellipse cx="126" cy="42" rx="7" ry="2"/><ellipse cx="52" cy="66" rx="5" ry="3"/><ellipse cx="100" cy="70" rx="6" ry="2"/></g><rect x=".5" y=".5" width="159" height="89" fill="none" stroke="#5c5c5c" stroke-width="1"/></svg><div class="t" style="left:398.0px;width:170px;text-align:center;top:404.5px;font-size:12px;color:#e8e8e8;line-height:20px;height:20px;letter-spacing:-.2px;">世界地图一</div><svg style="left:526px;top:310px" width="36" height="30" viewBox="0 0 36 30"><defs><linearGradient id="bg403309" x1="0" y1="0" x2="1" y2="1"><stop offset="0" stop-color="#17348f"/><stop offset=".5" stop-color="#2a58c4"/><stop offset="1" stop-color="#3f78e0"/></linearGradient></defs><path d="M0 0 H36 V30 Z" fill="url(#bg403309)"/></svg><div class="t" style="left:546px;top:312.5px;font-size:11px;line-height:13px;height:13px;color:#fff;">基</div><svg style="left:576px;top:309px;overflow:hidden" width="160" height="90" viewBox="0 0 160 90"><rect width="160" height="90" fill="#cdd5d7"/><rect x="0" y="0" width="160" height="45" fill="#dde3e4" opacity=".6" filter="url(#tb5)"/><g transform="translate(21 14.500) scale(.74 .74)" opacity=".35" filter="url(#tb1)"><path d="M7.5 22.8 L12.0 21.0 L19.3 20.1 L28.4 18.2 L37.6 17.3 L46.7 18.2 L54.0 21.0 L57.6 25.5 L54.0 30.1 L55.8 33.7 L52.1 36.5 L46.7 39.2 L43.9 43.7 L41.2 47.4 L44.8 51.0 L40.3 50.1 L36.6 45.6 L33.0 40.1 L30.3 34.6 L28.4 30.1 L23.0 26.4 L17.5 26.4 L12.0 25.5 L8.4 24.6 Z M54.0 16.4 L61.2 14.6 L70.4 15.5 L72.2 18.2 L66.7 22.8 L61.2 25.5 L56.7 21.9 Z M40.3 50.1 L44.8 51.0 L48.5 53.8 L46.7 54.7 L42.1 52.9 Z M46.7 54.7 L52.1 52.9 L57.6 55.6 L63.1 59.2 L64.0 63.8 L59.4 69.3 L55.8 76.6 L53.0 82.9 L50.3 86.6 L48.9 82.0 L48.9 72.9 L47.6 65.6 L44.8 60.2 Z M79.5 27.3 L83.1 22.8 L88.6 20.1 L94.1 18.2 L95.9 22.8 L92.2 27.3 L95.9 30.1 L90.4 33.7 L86.8 34.6 L81.3 35.5 L77.7 34.6 L78.6 31.0 Z M73.1 43.7 L77.7 39.2 L84.9 38.3 L92.2 40.1 L95.9 43.7 L98.6 51.0 L103.2 52.0 L99.5 58.3 L95.9 63.8 L94.1 71.1 L90.4 76.6 L86.8 75.6 L84.9 67.4 L83.1 60.2 L77.7 54.7 L73.1 51.0 Z M94.1 18.2 L103.2 16.4 L114.1 14.6 L128.7 16.4 L143.3 20.1 L150.6 21.9 L148.7 25.5 L141.5 27.3 L139.6 32.8 L136.0 31.0 L132.3 36.5 L128.7 41.9 L125.0 47.4 L121.4 51.0 L119.6 45.6 L114.1 49.2 L110.5 54.7 L107.7 49.2 L103.2 43.7 L99.5 45.6 L95.9 43.7 L92.2 40.1 L95.9 36.5 L101.3 34.6 L97.7 31.0 L95.9 30.1 L92.2 27.3 L95.9 22.8 Z M95.9 43.7 L99.5 45.6 L105.0 49.2 L102.3 52.9 L98.6 51.0 Z M119.6 54.7 L125.0 58.3 L128.7 62.0 L132.3 61.1 L136.0 62.9 L132.3 63.8 L126.9 62.9 L121.4 59.2 Z M125.0 69.3 L130.5 65.6 L136.0 64.7 L139.6 69.3 L140.0 74.7 L136.0 78.4 L128.7 76.6 L124.1 75.6 Z M146.0 78.4 L148.7 76.6 L146.9 82.0 L144.2 82.9 Z M136.9 33.7 L138.7 31.9 L137.8 38.3 L135.1 40.1 Z M77.3 28.3 L79.1 26.4 L79.5 30.1 L77.7 31.0 Z M100.4 67.4 L102.3 65.6 L101.9 71.1 L100.1 72.0 Z" fill="#5a6a70" opacity="1"/></g><g transform="translate(20 12) scale(.74 .74)"><path d="M7.5 22.8 L12.0 21.0 L19.3 20.1 L28.4 18.2 L37.6 17.3 L46.7 18.2 L54.0 21.0 L57.6 25.5 L54.0 30.1 L55.8 33.7 L52.1 36.5 L46.7 39.2 L43.9 43.7 L41.2 47.4 L44.8 51.0 L40.3 50.1 L36.6 45.6 L33.0 40.1 L30.3 34.6 L28.4 30.1 L23.0 26.4 L17.5 26.4 L12.0 25.5 L8.4 24.6 Z M54.0 16.4 L61.2 14.6 L70.4 15.5 L72.2 18.2 L66.7 22.8 L61.2 25.5 L56.7 21.9 Z M40.3 50.1 L44.8 51.0 L48.5 53.8 L46.7 54.7 L42.1 52.9 Z M46.7 54.7 L52.1 52.9 L57.6 55.6 L63.1 59.2 L64.0 63.8 L59.4 69.3 L55.8 76.6 L53.0 82.9 L50.3 86.6 L48.9 82.0 L48.9 72.9 L47.6 65.6 L44.8 60.2 Z M79.5 27.3 L83.1 22.8 L88.6 20.1 L94.1 18.2 L95.9 22.8 L92.2 27.3 L95.9 30.1 L90.4 33.7 L86.8 34.6 L81.3 35.5 L77.7 34.6 L78.6 31.0 Z M73.1 43.7 L77.7 39.2 L84.9 38.3 L92.2 40.1 L95.9 43.7 L98.6 51.0 L103.2 52.0 L99.5 58.3 L95.9 63.8 L94.1 71.1 L90.4 76.6 L86.8 75.6 L84.9 67.4 L83.1 60.2 L77.7 54.7 L73.1 51.0 Z M94.1 18.2 L103.2 16.4 L114.1 14.6 L128.7 16.4 L143.3 20.1 L150.6 21.9 L148.7 25.5 L141.5 27.3 L139.6 32.8 L136.0 31.0 L132.3 36.5 L128.7 41.9 L125.0 47.4 L121.4 51.0 L119.6 45.6 L114.1 49.2 L110.5 54.7 L107.7 49.2 L103.2 43.7 L99.5 45.6 L95.9 43.7 L92.2 40.1 L95.9 36.5 L101.3 34.6 L97.7 31.0 L95.9 30.1 L92.2 27.3 L95.9 22.8 Z M95.9 43.7 L99.5 45.6 L105.0 49.2 L102.3 52.9 L98.6 51.0 Z M119.6 54.7 L125.0 58.3 L128.7 62.0 L132.3 61.1 L136.0 62.9 L132.3 63.8 L126.9 62.9 L121.4 59.2 Z M125.0 69.3 L130.5 65.6 L136.0 64.7 L139.6 69.3 L140.0 74.7 L136.0 78.4 L128.7 76.6 L124.1 75.6 Z M146.0 78.4 L148.7 76.6 L146.9 82.0 L144.2 82.9 Z M136.9 33.7 L138.7 31.9 L137.8 38.3 L135.1 40.1 Z M77.3 28.3 L79.1 26.4 L79.5 30.1 L77.7 31.0 Z M100.4 67.4 L102.3 65.6 L101.9 71.1 L100.1 72.0 Z" fill="#5c8a5c" opacity="1"/><path d="M7.5 22.8 L12.0 21.0 L19.3 20.1 L28.4 18.2 L37.6 17.3 L46.7 18.2 L54.0 21.0 L57.6 25.5 L54.0 30.1 L55.8 33.7 L52.1 36.5 L46.7 39.2 L43.9 43.7 L41.2 47.4 L44.8 51.0 L40.3 50.1 L36.6 45.6 L33.0 40.1 L30.3 34.6 L28.4 30.1 L23.0 26.4 L17.5 26.4 L12.0 25.5 L8.4 24.6 Z M54.0 16.4 L61.2 14.6 L70.4 15.5 L72.2 18.2 L66.7 22.8 L61.2 25.5 L56.7 21.9 Z M40.3 50.1 L44.8 51.0 L48.5 53.8 L46.7 54.7 L42.1 52.9 Z M46.7 54.7 L52.1 52.9 L57.6 55.6 L63.1 59.2 L64.0 63.8 L59.4 69.3 L55.8 76.6 L53.0 82.9 L50.3 86.6 L48.9 82.0 L48.9 72.9 L47.6 65.6 L44.8 60.2 Z M79.5 27.3 L83.1 22.8 L88.6 20.1 L94.1 18.2 L95.9 22.8 L92.2 27.3 L95.9 30.1 L90.4 33.7 L86.8 34.6 L81.3 35.5 L77.7 34.6 L78.6 31.0 Z M73.1 43.7 L77.7 39.2 L84.9 38.3 L92.2 40.1 L95.9 43.7 L98.6 51.0 L103.2 52.0 L99.5 58.3 L95.9 63.8 L94.1 71.1 L90.4 76.6 L86.8 75.6 L84.9 67.4 L83.1 60.2 L77.7 54.7 L73.1 51.0 Z M94.1 18.2 L103.2 16.4 L114.1 14.6 L128.7 16.4 L143.3 20.1 L150.6 21.9 L148.7 25.5 L141.5 27.3 L139.6 32.8 L136.0 31.0 L132.3 36.5 L128.7 41.9 L125.0 47.4 L121.4 51.0 L119.6 45.6 L114.1 49.2 L110.5 54.7 L107.7 49.2 L103.2 43.7 L99.5 45.6 L95.9 43.7 L92.2 40.1 L95.9 36.5 L101.3 34.6 L97.7 31.0 L95.9 30.1 L92.2 27.3 L95.9 22.8 Z M95.9 43.7 L99.5 45.6 L105.0 49.2 L102.3 52.9 L98.6 51.0 Z M119.6 54.7 L125.0 58.3 L128.7 62.0 L132.3 61.1 L136.0 62.9 L132.3 63.8 L126.9 62.9 L121.4 59.2 Z M125.0 69.3 L130.5 65.6 L136.0 64.7 L139.6 69.3 L140.0 74.7 L136.0 78.4 L128.7 76.6 L124.1 75.6 Z M146.0 78.4 L148.7 76.6 L146.9 82.0 L144.2 82.9 Z M136.9 33.7 L138.7 31.9 L137.8 38.3 L135.1 40.1 Z M77.3 28.3 L79.1 26.4 L79.5 30.1 L77.7 31.0 Z M100.4 67.4 L102.3 65.6 L101.9 71.1 L100.1 72.0 Z" fill="url(#wg2)" opacity="1"/></g><g fill="#fff" opacity=".9" filter="url(#tb1)"><ellipse cx="41" cy="60" rx="7" ry="3"/><ellipse cx="100" cy="70" rx="4" ry="1.500"/><ellipse cx="128" cy="40" rx="5" ry="1.500"/></g><rect x=".5" y=".5" width="159" height="89" fill="none" stroke="#5c5c5c" stroke-width="1"/></svg><div class="t" style="left:571.0px;width:170px;text-align:center;top:404.5px;font-size:12px;color:#e8e8e8;line-height:20px;height:20px;letter-spacing:-.2px;">世界地图二</div><svg style="left:699px;top:310px" width="36" height="30" viewBox="0 0 36 30"><defs><linearGradient id="bg576309" x1="0" y1="0" x2="1" y2="1"><stop offset="0" stop-color="#17348f"/><stop offset=".5" stop-color="#2a58c4"/><stop offset="1" stop-color="#3f78e0"/></linearGradient></defs><path d="M0 0 H36 V30 Z" fill="url(#bg576309)"/></svg><div class="t" style="left:719px;top:312.5px;font-size:11px;line-height:13px;height:13px;color:#fff;">基</div><svg style="left:749px;top:309px;overflow:hidden" width="160" height="90" viewBox="0 0 160 90"><rect width="160" height="90" fill="#7f8a5c"/><ellipse cx="30" cy="45" rx="40" ry="22" fill="#c9b48a" opacity=".75" filter="url(#tb5)"/><ellipse cx="60" cy="12" rx="60" ry="16" fill="#4f7a3c" opacity=".8" filter="url(#tb5)"/><ellipse cx="125" cy="22" rx="14" ry="18" fill="#4f7a3c" opacity=".7" filter="url(#tb2)"/><ellipse cx="8" cy="76" rx="12" ry="12" fill="#e8c890" opacity=".9" filter="url(#tb2)"/><path d="M170.0 -12.0 L126.0 -12.0 L128.0 0.0 L133.0 10.0 L136.0 20.0 L133.0 28.0 L127.0 33.0 L121.0 38.0 L115.0 44.0 L111.0 48.0 L114.0 54.0 L117.0 53.0 L116.0 48.0 L119.0 46.0 L122.0 52.0 L118.0 56.0 L112.0 55.0 L107.0 58.0 L108.0 66.0 L105.0 73.0 L99.0 77.0 L92.0 79.0 L90.0 83.0 L93.0 87.0 L91.0 90.0 L90.0 102.0 L170.0 102.0 Z M37.0 102.0 L38.0 90.0 L40.0 80.0 L44.0 72.0 L50.0 68.0 L54.0 72.0 L57.0 80.0 L58.0 90.0 L58.0 102.0 Z M-5.0 102.0 L-5.0 68.0 L0.0 68.0 L6.0 64.0 L14.0 66.0 L20.0 72.0 L27.0 80.0 L30.0 90.0 L31.0 102.0 Z M65.0 102.0 L66.0 90.0 L70.0 84.0 L76.0 80.0 L80.0 84.0 L84.0 90.0 L85.0 102.0 Z M-5.0 30.0 L4.0 30.0 L6.0 38.0 L5.0 48.0 L1.0 50.0 L-5.0 48.0 Z" fill="#17506e"/><path d="M170.0 -12.0 L126.0 -12.0 L128.0 0.0 L133.0 10.0 L136.0 20.0 L133.0 28.0 L127.0 33.0 L121.0 38.0 L115.0 44.0 L111.0 48.0 L114.0 54.0 L117.0 53.0 L116.0 48.0 L119.0 46.0 L122.0 52.0 L118.0 56.0 L112.0 55.0 L107.0 58.0 L108.0 66.0 L105.0 73.0 L99.0 77.0 L92.0 79.0 L90.0 83.0 L93.0 87.0 L91.0 90.0 L90.0 102.0 L170.0 102.0 Z" fill="#2a7390" opacity=".5" filter="url(#tb2)"/><path d="M139.0 30.0 L141.0 29.0 L142.0 36.0 L140.0 41.0 L145.0 42.0 L143.0 46.0 L139.0 47.0 L138.0 52.0 L134.0 56.0 L128.0 58.0 L124.0 61.0 L121.0 60.0 L125.0 56.0 L131.0 54.0 L135.0 49.0 L137.0 43.0 L138.0 36.0 Z" fill="#5d7a45"/><path d="M36.9 46.3 L41.3 41.3 L47.6 33.8 L52.6 31.2 L56.4 26.8 L61.5 31.2 L62.7 35.0 L71.5 39.4 L81.6 40.7 L91.7 37.5 L98.0 32.5 L103.0 31.2 L101.8 28.7 L98.0 27.5 L104.3 22.4 L105.5 17.4 L109.3 16.1 L113.1 19.9 L116.9 24.9 L123.2 27.5 L125.7 30.0 L121.9 35.0 L118.1 40.1 L111.8 43.8 L106.8 46.3 L103.0 47.6 L105.5 51.4 L109.3 50.1 L104.3 56.4 L106.8 61.5 L108.1 66.5 L104.3 72.8 L98.0 76.6 L91.7 77.8 L86.6 76.6 L79.1 75.3 L72.8 71.5 L71.5 66.5 L66.5 67.8 L60.2 66.5 L51.4 64.0 L45.1 58.9 L41.3 52.6 Z" fill="#ecebdd"/><g fill="none" stroke="#9fc0d8" stroke-width=".4"><path d="M62 35 L66 50 L60 60 M66 50 L80 52 L84 62 L80 72 M80 52 L90 46 L98 50 L104 47 M90 46 L92 38 M98 50 L96 60 L100 68 M84 62 L96 60 M110 24 L112 32 L118 34"/></g><rect x="116.500" y="64.500" width="12" height="18" fill="#2a6a8a" fill-opacity=".5" stroke="#6aa0c0" stroke-width=".5"/><rect x=".5" y=".5" width="159" height="89" fill="none" stroke="#5c5c5c" stroke-width="1"/></svg><div class="t" style="left:744.0px;width:170px;text-align:center;top:404.5px;font-size:12px;color:#e8e8e8;line-height:20px;height:20px;letter-spacing:-.2px;">GIS卫星地图（卫星）</div><svg style="left:872px;top:310px" width="36" height="30" viewBox="0 0 36 30"><defs><linearGradient id="bg749309" x1="0" y1="0" x2="1" y2="1"><stop offset="0" stop-color="#17348f"/><stop offset=".5" stop-color="#2a58c4"/><stop offset="1" stop-color="#3f78e0"/></linearGradient></defs><path d="M0 0 H36 V30 Z" fill="url(#bg749309)"/></svg><div class="t" style="left:892px;top:312.5px;font-size:11px;line-height:13px;height:13px;color:#fff;">基</div><svg style="left:403px;top:444px;overflow:hidden" width="160" height="90" viewBox="0 0 160 90"><rect width="160" height="90" fill="#c4e8b4"/><g transform="translate(1 -1)"><path d="M170.0 -12.0 L126.0 -12.0 L128.0 0.0 L133.0 10.0 L136.0 20.0 L133.0 28.0 L127.0 33.0 L121.0 38.0 L115.0 44.0 L111.0 48.0 L114.0 54.0 L117.0 53.0 L116.0 48.0 L119.0 46.0 L122.0 52.0 L118.0 56.0 L112.0 55.0 L107.0 58.0 L108.0 66.0 L105.0 73.0 L99.0 77.0 L92.0 79.0 L90.0 83.0 L93.0 87.0 L91.0 90.0 L90.0 102.0 L170.0 102.0 Z M37.0 102.0 L38.0 90.0 L40.0 80.0 L44.0 72.0 L50.0 68.0 L54.0 72.0 L57.0 80.0 L58.0 90.0 L58.0 102.0 Z M-5.0 102.0 L-5.0 68.0 L0.0 68.0 L6.0 64.0 L14.0 66.0 L20.0 72.0 L27.0 80.0 L30.0 90.0 L31.0 102.0 Z M65.0 102.0 L66.0 90.0 L70.0 84.0 L76.0 80.0 L80.0 84.0 L84.0 90.0 L85.0 102.0 Z M-5.0 30.0 L4.0 30.0 L6.0 38.0 L5.0 48.0 L1.0 50.0 L-5.0 48.0 Z" fill="#7cd0ff"/><path d="M139.0 30.0 L141.0 29.0 L142.0 36.0 L140.0 41.0 L145.0 42.0 L143.0 46.0 L139.0 47.0 L138.0 52.0 L134.0 56.0 L128.0 58.0 L124.0 61.0 L121.0 60.0 L125.0 56.0 L131.0 54.0 L135.0 49.0 L137.0 43.0 L138.0 36.0 Z" fill="#c4e8b4" opacity="1"/><path d="M36.9 46.3 L41.3 41.3 L47.6 33.8 L52.6 31.2 L56.4 26.8 L61.5 31.2 L62.7 35.0 L71.5 39.4 L81.6 40.7 L91.7 37.5 L98.0 32.5 L103.0 31.2 L101.8 28.7 L98.0 27.5 L104.3 22.4 L105.5 17.4 L109.3 16.1 L113.1 19.9 L116.9 24.9 L123.2 27.5 L125.7 30.0 L121.9 35.0 L118.1 40.1 L111.8 43.8 L106.8 46.3 L103.0 47.6 L105.5 51.4 L109.3 50.1 L104.3 56.4 L106.8 61.5 L108.1 66.5 L104.3 72.8 L98.0 76.6 L91.7 77.8 L86.6 76.6 L79.1 75.3 L72.8 71.5 L71.5 66.5 L66.5 67.8 L60.2 66.5 L51.4 64.0 L45.1 58.9 L41.3 52.6 Z" fill="#f4faf4" stroke="#4a78d8" stroke-width="0.8" stroke-linejoin="round"/></g><ellipse cx="60" cy="8" rx="60" ry="10" fill="#b2e0a0" opacity=".7" filter="url(#tb2)"/><ellipse cx="22" cy="46" rx="14" ry="10" fill="#eef2ea" opacity=".8" filter="url(#tb2)"/><ellipse cx="8" cy="78" rx="10" ry="10" fill="#f4f0ea" opacity=".9" filter="url(#tb2)"/><g transform="translate(1 -1)"><g fill="none" stroke="#7a9ad8" stroke-width=".4"><path d="M62 35 L66 50 L60 60 M66 50 L80 52 L84 62 L80 72 M80 52 L90 46 L98 50 L104 47 M90 46 L92 38 M98 50 L96 60 L100 68 M84 62 L96 60 M110 24 L112 32 L118 34"/></g></g><rect x="116.500" y="63.500" width="12" height="19" fill="#4f9ef0" fill-opacity=".4" stroke="#4a88e0" stroke-width=".5"/><rect x=".5" y=".5" width="159" height="89" fill="none" stroke="#5c5c5c" stroke-width="1"/></svg><div class="t" style="left:394.0px;width:170px;text-align:center;top:539.5px;font-size:12px;color:#e8e8e8;line-height:20px;height:20px;letter-spacing:-.2px;">GIS电子地图（基础）</div><svg style="left:526px;top:445px" width="36" height="30" viewBox="0 0 36 30"><defs><linearGradient id="bg403444" x1="0" y1="0" x2="1" y2="1"><stop offset="0" stop-color="#17348f"/><stop offset=".5" stop-color="#2a58c4"/><stop offset="1" stop-color="#3f78e0"/></linearGradient></defs><path d="M0 0 H36 V30 Z" fill="url(#bg403444)"/></svg><div class="t" style="left:546px;top:447.5px;font-size:11px;line-height:13px;height:13px;color:#fff;">基</div><svg style="left:576px;top:444px;overflow:hidden" width="160" height="90" viewBox="0 0 160 90"><rect width="160" height="90" fill="#26241c"/><g transform="translate(0 -4)"><path d="M170.0 -12.0 L126.0 -12.0 L128.0 0.0 L133.0 10.0 L136.0 20.0 L133.0 28.0 L127.0 33.0 L121.0 38.0 L115.0 44.0 L111.0 48.0 L114.0 54.0 L117.0 53.0 L116.0 48.0 L119.0 46.0 L122.0 52.0 L118.0 56.0 L112.0 55.0 L107.0 58.0 L108.0 66.0 L105.0 73.0 L99.0 77.0 L92.0 79.0 L90.0 83.0 L93.0 87.0 L91.0 90.0 L90.0 102.0 L170.0 102.0 Z M37.0 102.0 L38.0 90.0 L40.0 80.0 L44.0 72.0 L50.0 68.0 L54.0 72.0 L57.0 80.0 L58.0 90.0 L58.0 102.0 Z M-5.0 102.0 L-5.0 68.0 L0.0 68.0 L6.0 64.0 L14.0 66.0 L20.0 72.0 L27.0 80.0 L30.0 90.0 L31.0 102.0 Z M65.0 102.0 L66.0 90.0 L70.0 84.0 L76.0 80.0 L80.0 84.0 L84.0 90.0 L85.0 102.0 Z M-5.0 30.0 L4.0 30.0 L6.0 38.0 L5.0 48.0 L1.0 50.0 L-5.0 48.0 Z" fill="#0b0a08"/><path d="M139.0 30.0 L141.0 29.0 L142.0 36.0 L140.0 41.0 L145.0 42.0 L143.0 46.0 L139.0 47.0 L138.0 52.0 L134.0 56.0 L128.0 58.0 L124.0 61.0 L121.0 60.0 L125.0 56.0 L131.0 54.0 L135.0 49.0 L137.0 43.0 L138.0 36.0 Z" fill="#26241c" opacity="1"/><path d="M36.9 46.3 L41.3 41.3 L47.6 33.8 L52.6 31.2 L56.4 26.8 L61.5 31.2 L62.7 35.0 L71.5 39.4 L81.6 40.7 L91.7 37.5 L98.0 32.5 L103.0 31.2 L101.8 28.7 L98.0 27.5 L104.3 22.4 L105.5 17.4 L109.3 16.1 L113.1 19.9 L116.9 24.9 L123.2 27.5 L125.7 30.0 L121.9 35.0 L118.1 40.1 L111.8 43.8 L106.8 46.3 L103.0 47.6 L105.5 51.4 L109.3 50.1 L104.3 56.4 L106.8 61.5 L108.1 66.5 L104.3 72.8 L98.0 76.6 L91.7 77.8 L86.6 76.6 L79.1 75.3 L72.8 71.5 L71.5 66.5 L66.5 67.8 L60.2 66.5 L51.4 64.0 L45.1 58.9 L41.3 52.6 Z" fill="#4a4a44" stroke="#c9a050" stroke-width="0.8" stroke-linejoin="round"/></g><ellipse cx="40" cy="40" rx="45" ry="35" fill="#4a4636" opacity=".55" filter="url(#tb5)"/><g transform="translate(0 -4)"><path d="M36.9 46.3 L41.3 41.3 L47.6 33.8 L52.6 31.2 L56.4 26.8 L61.5 31.2 L62.7 35.0 L71.5 39.4 L81.6 40.7 L91.7 37.5 L98.0 32.5 L103.0 31.2 L101.8 28.7 L98.0 27.5 L104.3 22.4 L105.5 17.4 L109.3 16.1 L113.1 19.9 L116.9 24.9 L123.2 27.5 L125.7 30.0 L121.9 35.0 L118.1 40.1 L111.8 43.8 L106.8 46.3 L103.0 47.6 L105.5 51.4 L109.3 50.1 L104.3 56.4 L106.8 61.5 L108.1 66.5 L104.3 72.8 L98.0 76.6 L91.7 77.8 L86.6 76.6 L79.1 75.3 L72.8 71.5 L71.5 66.5 L66.5 67.8 L60.2 66.5 L51.4 64.0 L45.1 58.9 L41.3 52.6 Z" fill="#4e4d46" stroke="#c9a050" stroke-width=".9"/><g fill="none" stroke="#a88a4a" stroke-width=".4"><path d="M62 35 L66 50 L60 60 M66 50 L80 52 L84 62 L80 72 M80 52 L90 46 L98 50 L104 47 M90 46 L92 38 M98 50 L96 60 L100 68 M84 62 L96 60 M110 24 L112 32 L118 34"/></g></g><rect x="113.500" y="58.500" width="12" height="18" fill="#3a3426" stroke="#c9a050" stroke-width=".8"/><circle cx="102" cy="55" r="1.800" fill="#e8b848"/><rect x=".5" y=".5" width="159" height="89" fill="none" stroke="#5c5c5c" stroke-width="1"/></svg><div class="t" style="left:571.0px;width:170px;text-align:center;top:539.5px;font-size:12px;color:#e8e8e8;line-height:20px;height:20px;letter-spacing:-.2px;">GIS地图（黑金）</div><svg style="left:699px;top:445px" width="36" height="30" viewBox="0 0 36 30"><defs><linearGradient id="bg576444" x1="0" y1="0" x2="1" y2="1"><stop offset="0" stop-color="#17348f"/><stop offset=".5" stop-color="#2a58c4"/><stop offset="1" stop-color="#3f78e0"/></linearGradient></defs><path d="M0 0 H36 V30 Z" fill="url(#bg576444)"/></svg><div class="t" style="left:719px;top:447.5px;font-size:11px;line-height:13px;height:13px;color:#fff;">基</div><svg style="left:749px;top:444px;overflow:hidden" width="160" height="90" viewBox="0 0 160 90"><rect width="160" height="90" fill="#182036"/><g transform="translate(0 3)"><path d="M170.0 -12.0 L126.0 -12.0 L128.0 0.0 L133.0 10.0 L136.0 20.0 L133.0 28.0 L127.0 33.0 L121.0 38.0 L115.0 44.0 L111.0 48.0 L114.0 54.0 L117.0 53.0 L116.0 48.0 L119.0 46.0 L122.0 52.0 L118.0 56.0 L112.0 55.0 L107.0 58.0 L108.0 66.0 L105.0 73.0 L99.0 77.0 L92.0 79.0 L90.0 83.0 L93.0 87.0 L91.0 90.0 L90.0 102.0 L170.0 102.0 Z M37.0 102.0 L38.0 90.0 L40.0 80.0 L44.0 72.0 L50.0 68.0 L54.0 72.0 L57.0 80.0 L58.0 90.0 L58.0 102.0 Z M-5.0 102.0 L-5.0 68.0 L0.0 68.0 L6.0 64.0 L14.0 66.0 L20.0 72.0 L27.0 80.0 L30.0 90.0 L31.0 102.0 Z M65.0 102.0 L66.0 90.0 L70.0 84.0 L76.0 80.0 L80.0 84.0 L84.0 90.0 L85.0 102.0 Z M-5.0 30.0 L4.0 30.0 L6.0 38.0 L5.0 48.0 L1.0 50.0 L-5.0 48.0 Z" fill="#0c1122"/><path d="M139.0 30.0 L141.0 29.0 L142.0 36.0 L140.0 41.0 L145.0 42.0 L143.0 46.0 L139.0 47.0 L138.0 52.0 L134.0 56.0 L128.0 58.0 L124.0 61.0 L121.0 60.0 L125.0 56.0 L131.0 54.0 L135.0 49.0 L137.0 43.0 L138.0 36.0 Z" fill="#182036" opacity="1"/><path d="M36.9 46.3 L41.3 41.3 L47.6 33.8 L52.6 31.2 L56.4 26.8 L61.5 31.2 L62.7 35.0 L71.5 39.4 L81.6 40.7 L91.7 37.5 L98.0 32.5 L103.0 31.2 L101.8 28.7 L98.0 27.5 L104.3 22.4 L105.5 17.4 L109.3 16.1 L113.1 19.9 L116.9 24.9 L123.2 27.5 L125.7 30.0 L121.9 35.0 L118.1 40.1 L111.8 43.8 L106.8 46.3 L103.0 47.6 L105.5 51.4 L109.3 50.1 L104.3 56.4 L106.8 61.5 L108.1 66.5 L104.3 72.8 L98.0 76.6 L91.7 77.8 L86.6 76.6 L79.1 75.3 L72.8 71.5 L71.5 66.5 L66.5 67.8 L60.2 66.5 L51.4 64.0 L45.1 58.9 L41.3 52.6 Z" fill="#9aa4cc" stroke="none" stroke-width="0.8" stroke-linejoin="round"/></g><ellipse cx="40" cy="45" rx="45" ry="35" fill="#2a3450" opacity=".6" filter="url(#tb5)"/><g transform="translate(0 3)"><path d="M36.9 46.3 L41.3 41.3 L47.6 33.8 L52.6 31.2 L56.4 26.8 L61.5 31.2 L62.7 35.0 L71.5 39.4 L81.6 40.7 L91.7 37.5 L98.0 32.5 L103.0 31.2 L101.8 28.7 L98.0 27.5 L104.3 22.4 L105.5 17.4 L109.3 16.1 L113.1 19.9 L116.9 24.9 L123.2 27.5 L125.7 30.0 L121.9 35.0 L118.1 40.1 L111.8 43.8 L106.8 46.3 L103.0 47.6 L105.5 51.4 L109.3 50.1 L104.3 56.4 L106.8 61.5 L108.1 66.5 L104.3 72.8 L98.0 76.6 L91.7 77.8 L86.6 76.6 L79.1 75.3 L72.8 71.5 L71.5 66.5 L66.5 67.8 L60.2 66.5 L51.4 64.0 L45.1 58.9 L41.3 52.6 Z" fill="#8e9ac8"/><path d="M36.9 46.3 L41.3 41.3 L47.6 33.8 L52.6 31.2 L56.4 26.8 L61.5 31.2 L62.7 35.0 L71.5 39.4 L81.6 40.7 L91.7 37.5 L98.0 32.5 L103.0 31.2 L101.8 28.7 L98.0 27.5 L104.3 22.4 L105.5 17.4 L109.3 16.1 L113.1 19.9 L116.9 24.9 L123.2 27.5 L79.1 75.3 L72.8 71.5 L71.5 66.5 L66.5 67.8 L60.2 66.5 L51.4 64.0 L45.1 58.9 L41.3 52.6 Z" fill="#c8cee6" opacity=".55" filter="url(#tb2)"/></g><rect x="112.500" y="57.500" width="12" height="18" fill="#3a4a80" stroke="#8a9ad0" stroke-width=".6"/><rect x="112.500" y="57.500" width="12" height="2" fill="#7a9af0"/><path d="M97 52 H106 V55 H103 L101.500 57 L100 55 H97 Z" fill="#e89a30"/><rect x=".5" y=".5" width="159" height="89" fill="none" stroke="#5c5c5c" stroke-width="1"/></svg><div class="t" style="left:744.0px;width:170px;text-align:center;top:539.5px;font-size:12px;color:#e8e8e8;line-height:20px;height:20px;letter-spacing:-.2px;">GIS地图（蓝黑）</div><svg style="left:872px;top:445px" width="36" height="30" viewBox="0 0 36 30"><defs><linearGradient id="bg749444" x1="0" y1="0" x2="1" y2="1"><stop offset="0" stop-color="#17348f"/><stop offset=".5" stop-color="#2a58c4"/><stop offset="1" stop-color="#3f78e0"/></linearGradient></defs><path d="M0 0 H36 V30 Z" fill="url(#bg749444)"/></svg><div class="t" style="left:892px;top:447.5px;font-size:11px;line-height:13px;height:13px;color:#fff;">基</div><svg style="left:403px;top:579px;overflow:hidden" width="160" height="90" viewBox="0 0 160 90"><rect width="160" height="90" fill="#1a363a"/><g transform="translate(0 -5)"><path d="M170.0 -12.0 L126.0 -12.0 L128.0 0.0 L133.0 10.0 L136.0 20.0 L133.0 28.0 L127.0 33.0 L121.0 38.0 L115.0 44.0 L111.0 48.0 L114.0 54.0 L117.0 53.0 L116.0 48.0 L119.0 46.0 L122.0 52.0 L118.0 56.0 L112.0 55.0 L107.0 58.0 L108.0 66.0 L105.0 73.0 L99.0 77.0 L92.0 79.0 L90.0 83.0 L93.0 87.0 L91.0 90.0 L90.0 102.0 L170.0 102.0 Z M37.0 102.0 L38.0 90.0 L40.0 80.0 L44.0 72.0 L50.0 68.0 L54.0 72.0 L57.0 80.0 L58.0 90.0 L58.0 102.0 Z M-5.0 102.0 L-5.0 68.0 L0.0 68.0 L6.0 64.0 L14.0 66.0 L20.0 72.0 L27.0 80.0 L30.0 90.0 L31.0 102.0 Z M65.0 102.0 L66.0 90.0 L70.0 84.0 L76.0 80.0 L80.0 84.0 L84.0 90.0 L85.0 102.0 Z M-5.0 30.0 L4.0 30.0 L6.0 38.0 L5.0 48.0 L1.0 50.0 L-5.0 48.0 Z" fill="#10282c"/><path d="M139.0 30.0 L141.0 29.0 L142.0 36.0 L140.0 41.0 L145.0 42.0 L143.0 46.0 L139.0 47.0 L138.0 52.0 L134.0 56.0 L128.0 58.0 L124.0 61.0 L121.0 60.0 L125.0 56.0 L131.0 54.0 L135.0 49.0 L137.0 43.0 L138.0 36.0 Z" fill="#1a363a" opacity="1"/><path d="M36.9 46.3 L41.3 41.3 L47.6 33.8 L52.6 31.2 L56.4 26.8 L61.5 31.2 L62.7 35.0 L71.5 39.4 L81.6 40.7 L91.7 37.5 L98.0 32.5 L103.0 31.2 L101.8 28.7 L98.0 27.5 L104.3 22.4 L105.5 17.4 L109.3 16.1 L113.1 19.9 L116.9 24.9 L123.2 27.5 L125.7 30.0 L121.9 35.0 L118.1 40.1 L111.8 43.8 L106.8 46.3 L103.0 47.6 L105.5 51.4 L109.3 50.1 L104.3 56.4 L106.8 61.5 L108.1 66.5 L104.3 72.8 L98.0 76.6 L91.7 77.8 L86.6 76.6 L79.1 75.3 L72.8 71.5 L71.5 66.5 L66.5 67.8 L60.2 66.5 L51.4 64.0 L45.1 58.9 L41.3 52.6 Z" fill="#2f8a6a" stroke="none" stroke-width="0.8" stroke-linejoin="round"/></g><ellipse cx="40" cy="50" rx="45" ry="35" fill="#2a4a4e" opacity=".6" filter="url(#tb5)"/><g transform="translate(0 -5)"><path d="M36.9 46.3 L41.3 41.3 L47.6 33.8 L52.6 31.2 L56.4 26.8 L61.5 31.2 L62.7 35.0 L71.5 39.4 L81.6 40.7 L91.7 37.5 L98.0 32.5 L103.0 31.2 L101.8 28.7 L98.0 27.5 L104.3 22.4 L105.5 17.4 L109.3 16.1 L113.1 19.9 L116.9 24.9 L123.2 27.5 L125.7 30.0 L121.9 35.0 L118.1 40.1 L111.8 43.8 L106.8 46.3 L103.0 47.6 L105.5 51.4 L109.3 50.1 L104.3 56.4 L106.8 61.5 L108.1 66.5 L104.3 72.8 L98.0 76.6 L91.7 77.8 L86.6 76.6 L79.1 75.3 L72.8 71.5 L71.5 66.5 L66.5 67.8 L60.2 66.5 L51.4 64.0 L45.1 58.9 L41.3 52.6 Z" fill="#2c8a5c"/><path d="M36.9 46.3 L41.3 41.3 L47.6 33.8 L52.6 31.2 L56.4 26.8 L61.5 31.2 L62.7 35.0 L71.5 39.4 L79.1 75.3 L72.8 71.5 L71.5 66.5 L66.5 67.8 L60.2 66.5 L51.4 64.0 L45.1 58.9 L41.3 52.6 Z" fill="#7fc8d0" opacity=".75" filter="url(#tb2)"/><path d="M98.0 27.5 L104.3 22.4 L105.5 17.4 L109.3 16.1 L113.1 19.9 L116.9 24.9 L123.2 27.5 L125.7 30.0 L121.9 35.0 Z" fill="#4aa8b0" opacity=".7" filter="url(#tb1)"/><path d="M36.9 46.3 L41.3 41.3 L47.6 33.8 L52.6 31.2 L56.4 26.8 L61.5 31.2 L62.7 35.0 L71.5 39.4 L81.6 40.7 L91.7 37.5 L98.0 32.5 L103.0 31.2 L101.8 28.7 L98.0 27.5 L104.3 22.4 L105.5 17.4 L109.3 16.1 L113.1 19.9 L116.9 24.9 L123.2 27.5 L125.7 30.0 L121.9 35.0 L118.1 40.1 L111.8 43.8 L106.8 46.3 L103.0 47.6 L105.5 51.4 L109.3 50.1 L104.3 56.4 L106.8 61.5 L108.1 66.5 L104.3 72.8 L98.0 76.6 L91.7 77.8 L86.6 76.6 L79.1 75.3 L72.8 71.5 L71.5 66.5 L66.5 67.8 L60.2 66.5 L51.4 64.0 L45.1 58.9 L41.3 52.6 Z" fill="none" stroke="#8fd8d0" stroke-width=".5" opacity=".7"/></g><rect x="112.500" y="56.500" width="12" height="18" fill="#2a3a40" stroke="#8aa0a0" stroke-width=".6"/><rect x="99" y="50" width="4" height="5" fill="#2a7ae0"/><rect x=".5" y=".5" width="159" height="89" fill="none" stroke="#5c5c5c" stroke-width="1"/></svg><div class="t" style="left:394.0px;width:170px;text-align:center;top:674.5px;font-size:12px;color:#e8e8e8;line-height:20px;height:20px;letter-spacing:-.2px;">GIS地图（草绿）</div><svg style="left:526px;top:580px" width="36" height="30" viewBox="0 0 36 30"><defs><linearGradient id="bg403579" x1="0" y1="0" x2="1" y2="1"><stop offset="0" stop-color="#17348f"/><stop offset=".5" stop-color="#2a58c4"/><stop offset="1" stop-color="#3f78e0"/></linearGradient></defs><path d="M0 0 H36 V30 Z" fill="url(#bg403579)"/></svg><div class="t" style="left:546px;top:582.5px;font-size:11px;line-height:13px;height:13px;color:#fff;">基</div><svg style="left:576px;top:579px;overflow:hidden" width="160" height="90" viewBox="0 0 160 90"><rect width="160" height="90" fill="#f6f2e8"/><g transform="translate(0 -4)"><path d="M170.0 -12.0 L126.0 -12.0 L128.0 0.0 L133.0 10.0 L136.0 20.0 L133.0 28.0 L127.0 33.0 L121.0 38.0 L115.0 44.0 L111.0 48.0 L114.0 54.0 L117.0 53.0 L116.0 48.0 L119.0 46.0 L122.0 52.0 L118.0 56.0 L112.0 55.0 L107.0 58.0 L108.0 66.0 L105.0 73.0 L99.0 77.0 L92.0 79.0 L90.0 83.0 L93.0 87.0 L91.0 90.0 L90.0 102.0 L170.0 102.0 Z M37.0 102.0 L38.0 90.0 L40.0 80.0 L44.0 72.0 L50.0 68.0 L54.0 72.0 L57.0 80.0 L58.0 90.0 L58.0 102.0 Z M-5.0 102.0 L-5.0 68.0 L0.0 68.0 L6.0 64.0 L14.0 66.0 L20.0 72.0 L27.0 80.0 L30.0 90.0 L31.0 102.0 Z M65.0 102.0 L66.0 90.0 L70.0 84.0 L76.0 80.0 L80.0 84.0 L84.0 90.0 L85.0 102.0 Z M-5.0 30.0 L4.0 30.0 L6.0 38.0 L5.0 48.0 L1.0 50.0 L-5.0 48.0 Z" fill="#5cc8d0"/><path d="M139.0 30.0 L141.0 29.0 L142.0 36.0 L140.0 41.0 L145.0 42.0 L143.0 46.0 L139.0 47.0 L138.0 52.0 L134.0 56.0 L128.0 58.0 L124.0 61.0 L121.0 60.0 L125.0 56.0 L131.0 54.0 L135.0 49.0 L137.0 43.0 L138.0 36.0 Z" fill="#f6f2e8" opacity="1"/><path d="M36.9 46.3 L41.3 41.3 L47.6 33.8 L52.6 31.2 L56.4 26.8 L61.5 31.2 L62.7 35.0 L71.5 39.4 L81.6 40.7 L91.7 37.5 L98.0 32.5 L103.0 31.2 L101.8 28.7 L98.0 27.5 L104.3 22.4 L105.5 17.4 L109.3 16.1 L113.1 19.9 L116.9 24.9 L123.2 27.5 L125.7 30.0 L121.9 35.0 L118.1 40.1 L111.8 43.8 L106.8 46.3 L103.0 47.6 L105.5 51.4 L109.3 50.1 L104.3 56.4 L106.8 61.5 L108.1 66.5 L104.3 72.8 L98.0 76.6 L91.7 77.8 L86.6 76.6 L79.1 75.3 L72.8 71.5 L71.5 66.5 L66.5 67.8 L60.2 66.5 L51.4 64.0 L45.1 58.9 L41.3 52.6 Z" fill="#d8f0f0" stroke="#3a9ad0" stroke-width="0.8" stroke-linejoin="round"/></g><g transform="translate(0 -4)"><path d="M170.0 -12.0 L126.0 -12.0 L128.0 0.0 L133.0 10.0 L136.0 20.0 L133.0 28.0 L127.0 33.0 L121.0 38.0 L115.0 44.0 L111.0 48.0 L114.0 54.0 L117.0 53.0 L116.0 48.0 L119.0 46.0 L122.0 52.0 L118.0 56.0 L112.0 55.0 L107.0 58.0 L108.0 66.0 L105.0 73.0 L99.0 77.0 L92.0 79.0 L90.0 83.0 L93.0 87.0 L91.0 90.0 L90.0 102.0 L170.0 102.0 Z" fill="#8adce0" opacity=".6" filter="url(#tb2)"/><path d="M139.0 30.0 L141.0 29.0 L142.0 36.0 L140.0 41.0 L145.0 42.0 L143.0 46.0 L139.0 47.0 L138.0 52.0 L134.0 56.0 L128.0 58.0 L124.0 61.0 L121.0 60.0 L125.0 56.0 L131.0 54.0 L135.0 49.0 L137.0 43.0 L138.0 36.0 Z" fill="#f6f2e8"/><path d="M36.9 46.3 L41.3 41.3 L47.6 33.8 L52.6 31.2 L56.4 26.8 L61.5 31.2 L62.7 35.0 L71.5 39.4 L81.6 40.7 L91.7 37.5 L98.0 32.5 L103.0 31.2 L101.8 28.7 L98.0 27.5 L104.3 22.4 L105.5 17.4 L109.3 16.1 L113.1 19.9 L116.9 24.9 L123.2 27.5 L125.7 30.0 L121.9 35.0 L118.1 40.1 L111.8 43.8 L106.8 46.3 L103.0 47.6 L105.5 51.4 L109.3 50.1 L104.3 56.4 L106.8 61.5 L108.1 66.5 L104.3 72.8 L98.0 76.6 L91.7 77.8 L86.6 76.6 L79.1 75.3 L72.8 71.5 L71.5 66.5 L66.5 67.8 L60.2 66.5 L51.4 64.0 L45.1 58.9 L41.3 52.6 Z" fill="#d4eef0" stroke="#3a9ad0" stroke-width=".9"/><g fill="none" stroke="#5ab0d8" stroke-width=".4"><path d="M62 35 L66 50 L60 60 M66 50 L80 52 L84 62 L80 72 M80 52 L90 46 L98 50 L104 47 M90 46 L92 38 M98 50 L96 60 L100 68 M84 62 L96 60 M110 24 L112 32 L118 34"/></g></g><rect x="114.500" y="61.500" width="12" height="18" fill="#3ab0c8" fill-opacity=".5" stroke="#3a9ac8" stroke-width=".5"/><path d="M97 52 H107 V55.500 H103.500 L102 58 L100.500 55.500 H97 Z" fill="#f0b030"/><rect x=".5" y=".5" width="159" height="89" fill="none" stroke="#5c5c5c" stroke-width="1"/></svg><div class="t" style="left:571.0px;width:170px;text-align:center;top:674.5px;font-size:12px;color:#e8e8e8;line-height:20px;height:20px;letter-spacing:-.2px;">GIS地图（浅蓝）</div><svg style="left:699px;top:580px" width="36" height="30" viewBox="0 0 36 30"><defs><linearGradient id="bg576579" x1="0" y1="0" x2="1" y2="1"><stop offset="0" stop-color="#17348f"/><stop offset=".5" stop-color="#2a58c4"/><stop offset="1" stop-color="#3f78e0"/></linearGradient></defs><path d="M0 0 H36 V30 Z" fill="url(#bg576579)"/></svg><div class="t" style="left:719px;top:582.5px;font-size:11px;line-height:13px;height:13px;color:#fff;">基</div><svg style="left:749px;top:579px;overflow:hidden" width="160" height="90" viewBox="0 0 160 90"><rect width="160" height="90" fill="#0c1a3c"/><g transform="translate(0 4)"><path d="M170.0 -12.0 L126.0 -12.0 L128.0 0.0 L133.0 10.0 L136.0 20.0 L133.0 28.0 L127.0 33.0 L121.0 38.0 L115.0 44.0 L111.0 48.0 L114.0 54.0 L117.0 53.0 L116.0 48.0 L119.0 46.0 L122.0 52.0 L118.0 56.0 L112.0 55.0 L107.0 58.0 L108.0 66.0 L105.0 73.0 L99.0 77.0 L92.0 79.0 L90.0 83.0 L93.0 87.0 L91.0 90.0 L90.0 102.0 L170.0 102.0 Z M37.0 102.0 L38.0 90.0 L40.0 80.0 L44.0 72.0 L50.0 68.0 L54.0 72.0 L57.0 80.0 L58.0 90.0 L58.0 102.0 Z M-5.0 102.0 L-5.0 68.0 L0.0 68.0 L6.0 64.0 L14.0 66.0 L20.0 72.0 L27.0 80.0 L30.0 90.0 L31.0 102.0 Z M65.0 102.0 L66.0 90.0 L70.0 84.0 L76.0 80.0 L80.0 84.0 L84.0 90.0 L85.0 102.0 Z M-5.0 30.0 L4.0 30.0 L6.0 38.0 L5.0 48.0 L1.0 50.0 L-5.0 48.0 Z" fill="#0b1f4a"/><path d="M139.0 30.0 L141.0 29.0 L142.0 36.0 L140.0 41.0 L145.0 42.0 L143.0 46.0 L139.0 47.0 L138.0 52.0 L134.0 56.0 L128.0 58.0 L124.0 61.0 L121.0 60.0 L125.0 56.0 L131.0 54.0 L135.0 49.0 L137.0 43.0 L138.0 36.0 Z" fill="#0c1a3c" opacity="1"/><path d="M36.9 46.3 L41.3 41.3 L47.6 33.8 L52.6 31.2 L56.4 26.8 L61.5 31.2 L62.7 35.0 L71.5 39.4 L81.6 40.7 L91.7 37.5 L98.0 32.5 L103.0 31.2 L101.8 28.7 L98.0 27.5 L104.3 22.4 L105.5 17.4 L109.3 16.1 L113.1 19.9 L116.9 24.9 L123.2 27.5 L125.7 30.0 L121.9 35.0 L118.1 40.1 L111.8 43.8 L106.8 46.3 L103.0 47.6 L105.5 51.4 L109.3 50.1 L104.3 56.4 L106.8 61.5 L108.1 66.5 L104.3 72.8 L98.0 76.6 L91.7 77.8 L86.6 76.6 L79.1 75.3 L72.8 71.5 L71.5 66.5 L66.5 67.8 L60.2 66.5 L51.4 64.0 L45.1 58.9 L41.3 52.6 Z" fill="#15306c" stroke="#2a8af0" stroke-width="0.8" stroke-linejoin="round"/></g><g transform="translate(0 4)"><path d="M36.9 46.3 L41.3 41.3 L47.6 33.8 L52.6 31.2 L56.4 26.8 L61.5 31.2 L62.7 35.0 L71.5 39.4 L81.6 40.7 L91.7 37.5 L98.0 32.5 L103.0 31.2 L101.8 28.7 L98.0 27.5 L104.3 22.4 L105.5 17.4 L109.3 16.1 L113.1 19.9 L116.9 24.9 L123.2 27.5 L125.7 30.0 L121.9 35.0 L118.1 40.1 L111.8 43.8 L106.8 46.3 L103.0 47.6 L105.5 51.4 L109.3 50.1 L104.3 56.4 L106.8 61.5 L108.1 66.5 L104.3 72.8 L98.0 76.6 L91.7 77.8 L86.6 76.6 L79.1 75.3 L72.8 71.5 L71.5 66.5 L66.5 67.8 L60.2 66.5 L51.4 64.0 L45.1 58.9 L41.3 52.6 Z" fill="#173674" stroke="#2a8af0" stroke-width=".9"/><g fill="none" stroke="#3a7ae0" stroke-width=".4"><path d="M62 35 L66 50 L60 60 M66 50 L80 52 L84 62 L80 72 M80 52 L90 46 L98 50 L104 47 M90 46 L92 38 M98 50 L96 60 L100 68 M84 62 L96 60 M110 24 L112 32 L118 34"/></g></g><g fill="#8aa0d0" opacity=".55"><rect x="24" y="24" width="8" height="1.500"/><rect x="34" y="40" width="10" height="1.500"/><rect x="14" y="52" width="8" height="1.500"/><rect x="40" y="62" width="9" height="1.500"/><rect x="60" y="14" width="8" height="1.500"/><rect x="76" y="24" width="9" height="1.500"/><rect x="20" y="80" width="8" height="1.500"/><rect x="52" y="80" width="8" height="1.500"/><rect x="8" y="12" width="8" height="1.500"/><rect x="82" y="70" width="7" height="1.500"/><rect x="56" y="72" width="9" height="1.500"/><rect x="50" y="46" width="12" height="1.500"/><rect x="52" y="58" width="8" height="1.500"/><rect x="130" y="26" width="7" height="1.500"/><rect x="120" y="40" width="6" height="1.500"/></g><rect x="113.500" y="59.500" width="12" height="18" fill="#12306c" stroke="#2a7ae0" stroke-width=".7"/><rect x="97" y="51" width="10" height="3" fill="#b8c4f0"/><rect x="100" y="55" width="4" height="5" fill="#d8dcf8"/><rect x=".5" y=".5" width="159" height="89" fill="none" stroke="#5c5c5c" stroke-width="1"/></svg><div class="t" style="left:744.0px;width:170px;text-align:center;top:674.5px;font-size:12px;color:#e8e8e8;line-height:20px;height:20px;letter-spacing:-.2px;">GIS地图（深蓝）</div><svg style="left:872px;top:580px" width="36" height="30" viewBox="0 0 36 30"><defs><linearGradient id="bg749579" x1="0" y1="0" x2="1" y2="1"><stop offset="0" stop-color="#17348f"/><stop offset=".5" stop-color="#2a58c4"/><stop offset="1" stop-color="#3f78e0"/></linearGradient></defs><path d="M0 0 H36 V30 Z" fill="url(#bg749579)"/></svg><div class="t" style="left:892px;top:582.5px;font-size:11px;line-height:13px;height:13px;color:#fff;">基</div><svg style="left:0;top:0" width="1920" height="1032" viewBox="0 0 1920 1032"><rect x="191.2" y="370.9" width="134.5" height="63" rx="4.5" fill="none" stroke="#f54c47" stroke-width="4.2"/><rect x="385.2" y="434.9" width="183" height="128" rx="4.5" fill="none" stroke="#f54c47" stroke-width="4.2"/><path d="M378.7 151.9 L383.3 154.2 L297.8 333.5 L302.6 338.4 L277.4 357.8 L275 326.2 L283.6 327.6 Z" fill="#f54c47" stroke="#f54c47" stroke-width="1.6" stroke-linejoin="round"/><path d="M373.1 276.4 L377.5 273.7 L471.5 397.6 L479.6 395 L483 427.6 L454.8 412 L459.4 407 Z" fill="#f54c47" stroke="#f54c47" stroke-width="1.6" stroke-linejoin="round"/></svg></body></html>
